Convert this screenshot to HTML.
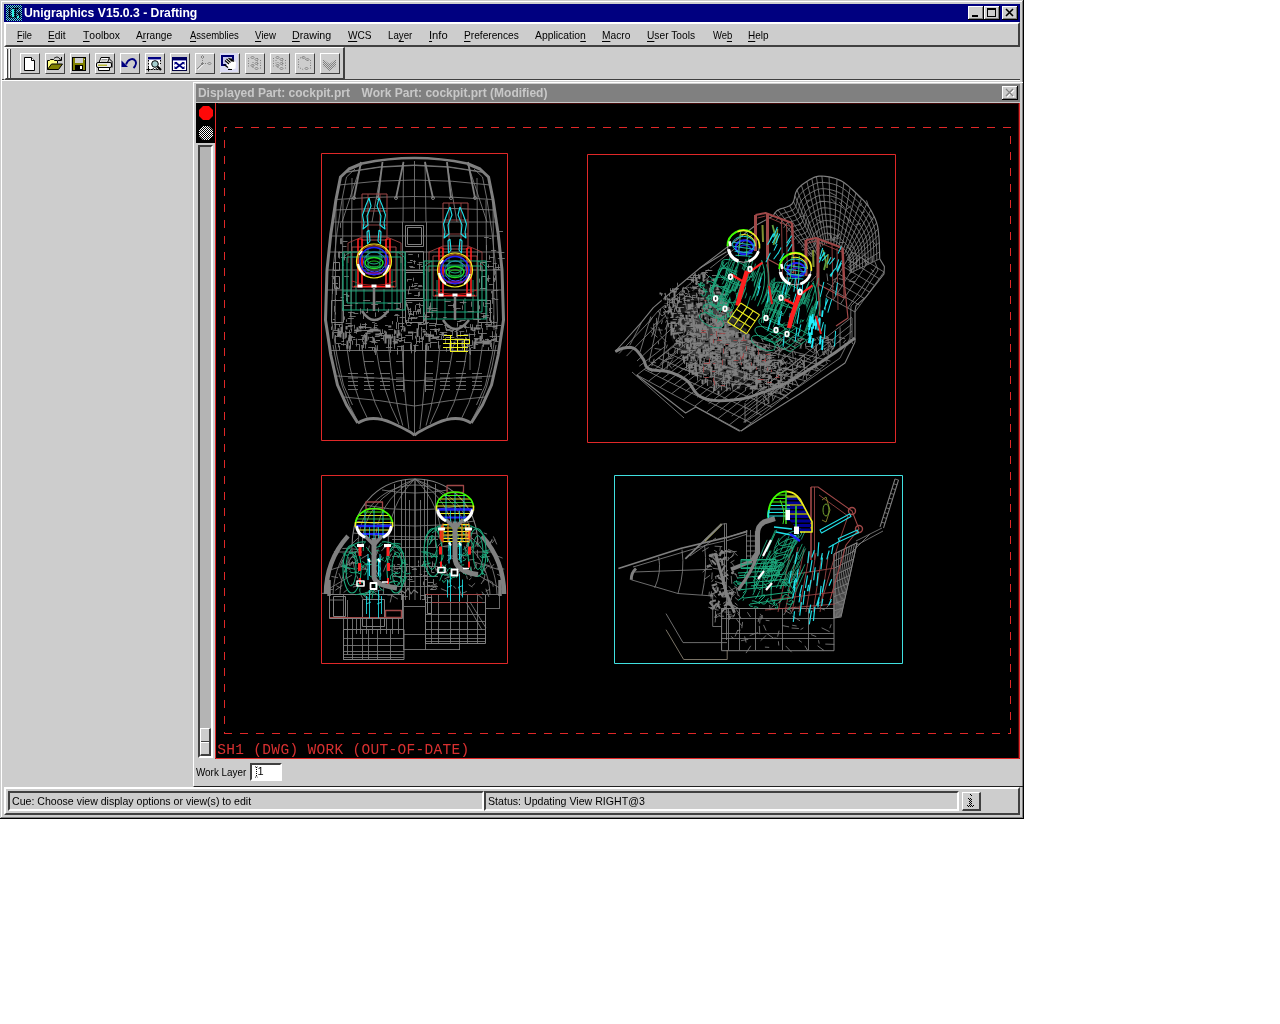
<!DOCTYPE html>
<html><head><meta charset="utf-8"><title>Unigraphics</title>
<style>
*{box-sizing:border-box;margin:0;padding:0}
html,body{width:1280px;height:1024px;background:#fff;overflow:hidden}
body{font-family:"Liberation Sans",sans-serif;font-size:11px;color:#000;position:relative}
.abs{position:absolute}
#win{will-change:transform;position:absolute;left:0;top:0;width:1024px;height:819px;background:#cdcdcd;
 box-shadow:inset -1px -1px 0 #000,inset 1px 1px 0 #cdcdcd,inset -2px -2px 0 #808080,inset 2px 2px 0 #fff}
#title{position:absolute;left:4px;top:4px;width:1016px;height:18px;background:#000080}
#title .txt{position:absolute;left:19.7px;top:2px;transform-origin:0 0;transform:scaleX(1.015);color:#fff;font-weight:bold;font-size:12px;line-height:14px;white-space:nowrap}
.tb{position:absolute;top:2px;width:16px;height:14px;background:#cdcdcd;
 box-shadow:inset -1px -1px 0 #000,inset 1px 1px 0 #fff,inset -2px -2px 0 #808080}
#menubar{position:absolute;left:4px;top:22px;width:1016px;height:25px;background:#cdcdcd;
 border-style:solid;border-width:2px;border-color:#fff #404040 #404040 #fff}
.mi{position:absolute;transform-origin:0 0;top:28px;height:14px;line-height:14px;font-size:11px;white-space:nowrap}
.mi u{text-decoration:none;display:inline-block;height:14px;background:linear-gradient(#000,#000) 0 13px/100% 1px no-repeat}
#toolbar{position:absolute;left:4px;top:47px;width:341px;height:33px;background:#cdcdcd;
 border-style:solid;border-width:1px 2px 2px 2px;border-color:#fff #404040 #404040 #fff}
.grip{position:absolute;top:49px;width:2px;height:29px;border-left:1px solid #fff;border-right:1px solid #404040}
.btn{position:absolute;top:53px;width:20px;height:21px;background:#cdcdcd;
 border-style:solid;border-width:1px;border-color:#fff #404040 #404040 #fff}
.btn svg{position:absolute;left:0;top:0}
#sep{position:absolute;left:2px;top:79px;width:1018px;height:2px;border-top:1px solid #404040;border-bottom:1px solid #fff}
#sub{position:absolute;left:193px;top:82px;width:830px;height:705px;border-left:1px solid #fff;border-top:1px solid #fff;border-bottom:1px solid #202020}
#subtitle{position:absolute;left:196px;top:84px;width:824px;height:18px;background:#808080}
#subtitle .txt{position:absolute;left:3px;top:2px;color:#c8c8c8;font-weight:bold;font-size:12px;line-height:14px;white-space:pre}
#subline{position:absolute;left:196px;top:102px;width:824px;height:1px;background:#c8c8c8}
#gfx{position:absolute;left:196px;top:103px;width:824px;height:656px;background:#000}
#sh1{position:absolute;left:21.300px;top:639px;font-family:"Liberation Mono",monospace;font-size:14.500px;letter-spacing:.31px;color:#d83030;line-height:16px;white-space:pre}
#tl{position:absolute;left:196px;top:103px;width:19px;height:40px;background:#000}
#trough{position:absolute;left:198px;top:145px;width:15px;height:613px;background:#b4b4b4;
 border-style:solid;border-width:2px;border-color:#404040 #fff #fff #404040}
#thumb{position:absolute;left:200px;top:728px;width:11px;height:28px;background:#cdcdcd;
 border-style:solid;border-width:1px 2px 2px 1px;border-color:#fff #404040 #404040 #fff}
#wl{position:absolute;left:196.3px;top:765px;transform-origin:0 0;transform:scaleX(.896);font-size:11px;line-height:14px;white-space:nowrap}
#wlin{position:absolute;left:250px;top:763px;width:32px;height:18px;background:#fff;
 border-style:solid;border-width:2px;border-color:#404040 #fff #fff #404040}
#status{position:absolute;left:4px;top:787px;width:1016px;height:28px;background:#cdcdcd;
 border-style:solid;border-width:2px;border-color:#fff #404040 #404040 #fff}
.fld{position:absolute;top:791px;height:20px;background:#cdcdcd;border-style:solid;border-width:2px;border-color:#404040 #fff #fff #404040;
 font-size:11px;line-height:14px;padding:1px 0 0 1.700px;white-space:nowrap;overflow:hidden}
.ft{display:inline-block;transform-origin:0 0;white-space:nowrap}
#ibtn{position:absolute;left:962px;top:792px;width:19px;height:19px;background:#cdcdcd;border-style:solid;border-width:1px 2px 2px 1px;border-color:#fff #404040 #404040 #fff}
</style></head><body>
<div id="win">
 <div id="title">
  <svg class="abs" style="left:2px;top:1px" width="16" height="16" viewBox="0 0 16 16"><defs><pattern id="dt" width="2" height="2" patternUnits="userSpaceOnUse"><rect width="2" height="2" fill="#000828"/><rect width="1" height="1" fill="#58ccf0"/><rect x="1" y="1" width="1" height="1" fill="#58ccf0"/></pattern></defs><rect width="16" height="16" fill="url(#dt)"/><path d="M3.500 3v9h4V3M9.500 3.500h3.500M9.500 3v9h4V8h-2" fill="none" stroke="#000818" stroke-width="1.500"/><rect x="6" y="4" width="2" height="8" fill="#30f0e0"/><rect x="11" y="11" width="2" height="2" fill="#30f0e0"/></svg>
  <span class="txt">Unigraphics V15.0.3 - Drafting</span>
  <div class="tb" style="left:964px"><svg width="16" height="14"><rect x="4" y="9" width="6" height="2" fill="#000"/></svg></div>
  <div class="tb" style="left:980px"><svg width="16" height="14"><rect x="3.5" y="3.5" width="8" height="7" fill="none" stroke="#000"/><rect x="3" y="2" width="9" height="2" fill="#000"/></svg></div>
  <div class="tb" style="left:998px"><svg width="16" height="14"><path d="M4 3l7 7M11 3l-7 7" stroke="#000" stroke-width="1.6" fill="none"/></svg></div>
 </div>
 <div id="menubar"></div>
 <span class="mi" style="left:16.7px;transform:scaleX(0.844)"><u>F</u>ile</span>
 <span class="mi" style="left:48.1px;transform:scaleX(0.931)"><u>E</u>dit</span>
 <span class="mi" style="left:83.3px;transform:scaleX(0.945)"><u>T</u>oolbox</span>
 <span class="mi" style="left:136.4px;transform:scaleX(0.921)">A<u>r</u>range</span>
 <span class="mi" style="left:189.5px;transform:scaleX(0.866)"><u>A</u>ssemblies</span>
 <span class="mi" style="left:254.7px;transform:scaleX(0.879)"><u>V</u>iew</span>
 <span class="mi" style="left:292.4px;transform:scaleX(0.971)"><u>D</u>rawing</span>
 <span class="mi" style="left:348.0px;transform:scaleX(0.92)"><u>W</u>CS</span>
 <span class="mi" style="left:387.9px;transform:scaleX(0.883)">La<u>y</u>er</span>
 <span class="mi" style="left:428.7px;transform:scaleX(1.018)"><u>I</u>nfo</span>
 <span class="mi" style="left:463.5px;transform:scaleX(0.924)"><u>P</u>references</span>
 <span class="mi" style="left:535.0px;transform:scaleX(0.943)">Applicatio<u>n</u></span>
 <span class="mi" style="left:601.9px;transform:scaleX(0.928)"><u>M</u>acro</span>
 <span class="mi" style="left:646.6px;transform:scaleX(0.927)"><u>U</u>ser Tools</span>
 <span class="mi" style="left:712.5px;transform:scaleX(0.864)">We<u>b</u></span>
 <span class="mi" style="left:747.8px;transform:scaleX(0.907)"><u>H</u>elp</span>

 <div id="sep"></div>
 <div id="toolbar"></div>
 <div class="grip" style="left:6px"></div><div class="grip" style="left:9px"></div>
 <!--BUTTONS-->
 <div class="btn" style="left:20px"><svg width="20" height="21" viewBox="0 0 20 21" style="left:-1px;top:-1px"><path d="M4.5 4.5h7l3 3v10h-10z" fill="#fff" stroke="#000"/><path d="M11.5 4.5v3h3" fill="#fff" stroke="#000"/></svg></div>
 <div class="btn" style="left:45px"><svg width="20" height="21" viewBox="0 0 20 21" style="left:-1px;top:-1px"><path d="M2.5 16.5v-9h2l1-1h3l1 1h3v3" fill="#ffff80" stroke="#000"/><path d="M2.5 16.5l4-5.5h11l-4 5.5z" fill="#808000" stroke="#000"/><path d="M9 5.5c2-2 5-2 6.5 1.5" fill="none" stroke="#000"/><path d="M13 7.5h3.5v-3.5" fill="none" stroke="#000"/></svg></div>
 <div class="btn" style="left:70px"><svg width="20" height="21" viewBox="0 0 20 21" style="left:-1px;top:-1px"><rect x="2.5" y="4.5" width="13" height="13" fill="#808000" stroke="#000"/><rect x="5" y="5" width="8" height="5" fill="#cdcdcd"/><rect x="5" y="12" width="8" height="5" fill="#000"/><rect x="10" y="13" width="2" height="3" fill="#fff"/><rect x="14" y="6" width="1" height="1" fill="#cdcdcd"/></svg></div>
 <div class="btn" style="left:95px"><svg width="20" height="21" viewBox="0 0 20 21" style="left:-1px;top:-1px"><path d="M6 4.5h8.5l-2 5h-8.5z" fill="#fff" stroke="#000"/><path d="M6.5 6.5h6M5.8 8h6" stroke="#808080" fill="none" stroke-width=".8"/><rect x="1.5" y="9.5" width="15" height="5" rx="1.5" fill="#e8e8e8" stroke="#000"/><rect x="3" y="11.5" width="9" height="1.5" fill="#b8b838"/><path d="M3.5 14.5h11v3h-11z" fill="#fff" stroke="#000"/><path d="M14 5.5l3 3v6" fill="none" stroke="#000"/></svg></div>
 <div class="btn" style="left:120px"><svg width="20" height="21" viewBox="0 0 20 21" style="left:-1px;top:-1px"><path d="M6 11.5C8 6 13 4.500 15.5 8C17 11 15 13.500 13.500 15" fill="none" stroke="#000080" stroke-width="1.900"/><path d="M1.500 7.500v6.500h6.500z" fill="#000080"/></svg></div>
 <div class="btn" style="left:145px"><svg width="20" height="21" viewBox="0 0 20 21" style="left:-1px;top:-1px"><rect x="3" y="4" width="13" height="2" fill="#000080"/><rect x="3" y="6" width="13" height="1" fill="#9090d8"/><rect x="4" y="7" width="11" height="9" fill="#fff"/><path d="M3.500 7v9.500h12" fill="none" stroke="#000" stroke-dasharray="1.500 1.500"/><path d="M15.500 7v4" fill="none" stroke="#000" stroke-dasharray="1.500 1.500"/><circle cx="10" cy="11" r="3.300" fill="#a8d0d0" stroke="#000"/><path d="M12.500 13.500l3.500 3.500" stroke="#000" stroke-width="2.200"/><path d="M1.500 16.500h4M3.500 14.500v4" stroke="#000" fill="none"/><path d="M8.500 15l-1 2M11 15l1 2" stroke="#000" fill="none"/></svg></div>
 <div class="btn" style="left:170px"><svg width="20" height="21" viewBox="0 0 20 21" style="left:-1px;top:-1px"><rect x="2.500" y="4.500" width="14" height="13" fill="#fff" stroke="#000040"/><rect x="2" y="4" width="15" height="3" fill="#000060"/><rect x="3" y="7" width="13" height="1" fill="#9090d8"/><path d="M5.500 9.500l8 6M13.500 9.500l-8 6" stroke="#000080" stroke-width="1.600" fill="none"/><path d="M4.500 9v3l3-3zM14.500 9v3l-3-3zM4.500 16v-3l3 3zM14.500 16v-3l-3 3z" fill="#000080"/></svg></div>
 <div class="btn" style="left:195px"><svg width="20" height="21" viewBox="0 0 20 21" style="left:-1px;top:-1px"><g transform="translate(-2 1)"><g fill="none" stroke="#808080"><path d="M9.500 9.500L4 15" /><path d="M9.500 9.500V5" stroke-dasharray="1 1.500"/><path d="M9.500 9.500H15" stroke-dasharray="1 1.500"/><path d="M9.500 1.500l1.500 1.500l-1.500 1.500l-1.500-1.500z M16.500 8l1.500 1.500l-1.500 1.500l-1.500-1.500z M8 9.500h3M9.500 8v3"/></g><g fill="none" stroke="#fff" opacity=".7"><path d="M10.500 10.500L5 16"/></g></g></svg></div>
 <div class="btn" style="left:220px"><svg width="20" height="21" viewBox="0 0 20 21" style="left:-1px;top:-1px"><rect x="0" y="0" width="18" height="19" fill="#dcdcf4"/><rect x="2" y="3" width="11" height="9" fill="#c8c8ec" stroke="#000070" stroke-width="2"/><path d="M6 7l3-2.500l7 4.500l-.5 6.500l-4 1l-5-3.500z" fill="#fff"/><path d="M5 7.500l4 3.500M6.500 6l4 3.500M8.500 5l4 3.500M10.500 5.500l3.500 3M4 11.500l4 3M8 16.500h4" stroke="#000" fill="none" stroke-width="1.200"/></svg></div>
 <div class="btn" style="left:245px"><svg width="20" height="21" viewBox="0 0 20 21" style="left:-1px;top:-1px"><g fill="none" stroke="#808080" stroke-dasharray="1 1.500"><path d="M3.500 5v9"/><path d="M15.500 7v9"/><path d="M8 9v7"/><path d="M12.500 5v8"/></g><g fill="none" stroke="#808080"><path d="M7.5 3.0l1.500 1.500l-1.500 1.500l-1.500-1.500z"/><path d="M11.5 5.0l1.500 1.500l-1.500 1.500l-1.500-1.500z"/><path d="M11.5 9.0l1.500 1.500l-1.500 1.500l-1.500-1.500z"/><path d="M7.5 11.0l1.500 1.500l-1.500 1.500l-1.500-1.500z"/><path d="M11.5 14.0l1.500 1.500l-1.500 1.500l-1.500-1.500z"/></g></svg></div>
 <div class="btn" style="left:270px"><svg width="20" height="21" viewBox="0 0 20 21" style="left:-1px;top:-1px"><g fill="none" stroke="#808080" stroke-dasharray="1 1.500"><path d="M3.500 5v9"/><path d="M15.500 7v9"/><path d="M8 9v7"/><path d="M12.500 5v8"/><path d="M6 7v5"/></g><g fill="none" stroke="#808080"><path d="M7.5 3.0l1.500 1.500l-1.500 1.500l-1.500-1.500z"/><path d="M11.5 5.0l1.500 1.500l-1.500 1.500l-1.500-1.500z"/><path d="M11.5 9.0l1.500 1.500l-1.500 1.500l-1.500-1.500z"/><path d="M7.5 11.0l1.500 1.500l-1.500 1.500l-1.500-1.500z"/><path d="M11.5 14.0l1.500 1.500l-1.500 1.500l-1.500-1.500z"/></g></svg></div>
 <div class="btn" style="left:295px"><svg width="20" height="21" viewBox="0 0 20 21" style="left:-1px;top:-1px"><g fill="none" stroke="#808080" stroke-dasharray="1 1.500"><path d="M3.500 6v9"/><path d="M15.500 7v9"/><path d="M5 5l4-1"/><path d="M10 6l4 2"/><path d="M5 15l4 2"/></g><g fill="none" stroke="#808080"><path d="M8.5 3.0l1.500 1.500l-1.500 1.500l-1.500-1.500z"/><path d="M12.5 5.0l1.500 1.500l-1.500 1.500l-1.500-1.500z"/><path d="M11.5 14.0l1.500 1.500l-1.500 1.500l-1.500-1.500z"/></g></svg></div>
 <div class="btn" style="left:320px"><svg width="20" height="21" viewBox="0 0 20 21" style="left:-1px;top:-1px"><defs><pattern id="ck" width="2" height="2" patternUnits="userSpaceOnUse"><rect width="1" height="1" fill="#808080"/><rect x="1" y="1" width="1" height="1" fill="#808080"/></pattern></defs><path d="M3 6l6.500 5l6.500-5v7l-6.500 5l-6.500-5z" fill="url(#ck)"/></svg></div>
 <!--/BUTTONS-->

 <div id="sub"></div>
 <div id="subtitle"><span class="txt" style="left:1.9px">Displayed Part: cockpit.prt</span><span class="txt" style="left:165.6px">Work Part: cockpit.prt (Modified)</span>
  <div class="tb" style="left:806px"><svg width="16" height="14"><path d="M5 4l7 7M12 4l-7 7" stroke="#fff" stroke-width="1.4" fill="none"/><path d="M4 3l7 7M11 3l-7 7" stroke="#808080" stroke-width="1.4" fill="none"/></svg></div>
 </div>
 <div id="subline"></div>
 <div id="gfx">
 <!--GFX-->
<svg class="abs" style="left:0;top:0" width="824" height="656" viewBox="196 103 824 656" stroke-linecap="butt" stroke-linejoin="round"><path d="M215.5 103V758.5H1019.5V103" fill="none" stroke="#e02828" stroke-width="1.0" />
<path d="M215 759.5H1020" fill="none" stroke="#b02020" stroke-width="1.0" />
<path d="M1018.5 103V758" fill="none" stroke="#500808" stroke-width="1.0" />
<path d="M218 103.5H1018" fill="none" stroke="#400808" stroke-width="1.0" />
<path d="M224 127.5H1011" fill="none" stroke="#e02828" stroke-width="1.0" stroke-dasharray="8 8" stroke-dashoffset="5"/>
<path d="M224.5 127V733" fill="none" stroke="#e02828" stroke-width="1.0" stroke-dasharray="8 8" stroke-dashoffset="3"/>
<path d="M224 733.5H1011" fill="none" stroke="#e02828" stroke-width="1.0" stroke-dasharray="8 8"/>
<path d="M1010.5 127V734" fill="none" stroke="#e02828" stroke-width="1.0" stroke-dasharray="8 8" stroke-dashoffset="7"/>
<rect x="321.5" y="153.5" width="186" height="287" fill="none" stroke="#e02828" stroke-width="1" />
<rect x="587.5" y="154.5" width="308" height="288" fill="none" stroke="#e02828" stroke-width="1" />
<rect x="321.5" y="475.5" width="186" height="188" fill="none" stroke="#e02828" stroke-width="1" />
<rect x="614.5" y="475.5" width="288" height="188" fill="none" stroke="#40e0e0" stroke-width="1" />
<path d="M362 163.500Q414.500 152.500 467 163.500" fill="none" stroke="#808080" stroke-width="2.6" />
<path d="M362 163.5 L349 169 L340.5 177 L336 199.5 L330.8 234 L327 270 L325.5 320 L330.8 355 L337.5 385 L346.5 405 L357.8 423" fill="none" stroke="#808080" stroke-width="3" />
<path d="M467 163.5 L480 169 L488.5 177 L493 199.5 L498.2 234 L502 270 L503.5 320 L498.2 355 L491.5 385 L482.5 405 L471.2 423" fill="none" stroke="#808080" stroke-width="3" />
<path d="M357.8 423Q372 414 392 423T414.500 435.500" fill="none" stroke="#808080" stroke-width="3" />
<path d="M471.2 423Q457 414 437 423T414.500 435.500" fill="none" stroke="#808080" stroke-width="3" />
<path d="M355 169 L346.5 177 L342 199.5 L336.8 234 L333 270 L331.5 320 L336.8 355 L343.5 385 L352.5 405" fill="none" stroke="#808080" stroke-width="0.85" />
<path d="M474 169 L482.5 177 L487 199.5 L492.2 234 L496 270 L497.5 320 L492.2 355 L485.5 385 L476.5 405" fill="none" stroke="#808080" stroke-width="0.85" />
<path d="M346 172Q414.500 158 483 172" fill="none" stroke="#808080" stroke-width="0.85" />
<path d="M345.3 172.5Q414.500 158.5 483.7 172.5" fill="none" stroke="#808080" stroke-width="0.85" />
<path d="M338.9 185Q414.500 175 490.1 185" fill="none" stroke="#808080" stroke-width="0.85" />
<path d="M336 199.5Q414.500 193.5 493 199.5" fill="none" stroke="#808080" stroke-width="0.85" />
<path d="M334.4 210Q414.500 206 494.6 210" fill="none" stroke="#808080" stroke-width="0.85" />
<path d="M332.6 222Q414.500 222 496.4 222" fill="none" stroke="#808080" stroke-width="0.85" />
<path d="M330.5 236Q414.500 236 498.5 236" fill="none" stroke="#808080" stroke-width="0.85" />
<path d="M328.9 252Q414.500 252 500.1 252" fill="none" stroke="#808080" stroke-width="0.85" />
<path d="M327 270Q414.500 270 502 270" fill="none" stroke="#808080" stroke-width="0.85" />
<path d="M326.4 290Q414.500 290 502.6 290" fill="none" stroke="#808080" stroke-width="0.85" />
<path d="M361 164.7 L342 222" fill="none" stroke="#808080" stroke-width="0.85" />
<path d="M382.5 163.2 L372 222" fill="none" stroke="#808080" stroke-width="0.85" />
<path d="M403.5 161.8 L403 222" fill="none" stroke="#808080" stroke-width="0.85" />
<path d="M414.5 161 L414.5 222" fill="none" stroke="#808080" stroke-width="0.85" />
<path d="M425 161.7 L426 222" fill="none" stroke="#808080" stroke-width="0.85" />
<path d="M447 163.3 L457 222" fill="none" stroke="#808080" stroke-width="0.85" />
<path d="M468 164.7 L487 222" fill="none" stroke="#808080" stroke-width="0.85" />
<path d="M336 200 L335 330" fill="none" stroke="#808080" stroke-width="0.85" />
<path d="M343 200 L342 330" fill="none" stroke="#808080" stroke-width="0.85" />
<path d="M352 178 L351 330" fill="none" stroke="#808080" stroke-width="0.85" />
<path d="M477 178 L478 330" fill="none" stroke="#808080" stroke-width="0.85" />
<path d="M486 200 L487 330" fill="none" stroke="#808080" stroke-width="0.85" />
<path d="M493 200 L494 330" fill="none" stroke="#808080" stroke-width="0.85" />
<path d="M361 162 L354 198" fill="none" stroke="#808080" stroke-width="1.8" />
<ellipse cx="354" cy="198" rx="1.5" ry="1.5" fill="none" stroke="#808080" stroke-width="1" />
<path d="M382.5 162 L378 198" fill="none" stroke="#808080" stroke-width="1.8" />
<ellipse cx="378" cy="198" rx="1.5" ry="1.5" fill="none" stroke="#808080" stroke-width="1" />
<path d="M403.5 162 L396 198" fill="none" stroke="#808080" stroke-width="1.8" />
<ellipse cx="396" cy="198" rx="1.5" ry="1.5" fill="none" stroke="#808080" stroke-width="1" />
<path d="M425 162 L433 198" fill="none" stroke="#808080" stroke-width="1.8" />
<ellipse cx="433" cy="198" rx="1.5" ry="1.5" fill="none" stroke="#808080" stroke-width="1" />
<path d="M447 162 L451 198" fill="none" stroke="#808080" stroke-width="1.8" />
<ellipse cx="451" cy="198" rx="1.5" ry="1.5" fill="none" stroke="#808080" stroke-width="1" />
<path d="M468 162 L475 198" fill="none" stroke="#808080" stroke-width="1.8" />
<ellipse cx="475" cy="198" rx="1.5" ry="1.5" fill="none" stroke="#808080" stroke-width="1" />
<rect x="405.5" y="225.5" width="18" height="21" fill="none" stroke="#808080" stroke-width="1" />
<rect x="407.5" y="227.5" width="14" height="17" fill="none" stroke="#808080" stroke-width="1" />
<rect x="405.5" y="251.5" width="18" height="19" fill="none" stroke="#808080" stroke-width="1" />
<path d="M408.9 266.5L413.2 266.5M414.5 260.3L414.5 264.2M408.3 254.5L412.8 254.5M418.5 254L418.5 257.4M410.2 267.5L414.9 267.5M407.4 262.5L412.2 262.5M410 260.5L412.1 260.5M413.1 261.5L415.8 261.5M410.1 260.5L412.9 260.5M418.7 262.5L422.7 262.5M420.9 266.5L423.3 266.5M417.1 264.5L421.9 264.5M419.5 263.4L419.5 266.3M419.5 265.8L419.5 269.4" fill="none" stroke="#808080" stroke-width="0.85" />
<rect x="405.5" y="272.5" width="18" height="26" fill="none" stroke="#808080" stroke-width="1" />
<path d="M407.5 279.5L411.9 279.5M409.5 286.1L409.5 290.2M412.5 283.7L412.5 287.2M414.3 283.5L417.8 283.5M408.5 289.5L408.5 294.4M413.5 277.7L413.5 281.3M417.8 286.5L422.4 286.5M414.2 295.5L417.9 295.5M410.8 286.5L415.6 286.5M418.5 292.1L418.5 296.7M418.3 285.5L422 285.5M407.8 293.5L411.5 293.5M414.1 285.5L417.1 285.5M414.5 288.5L418.4 288.5M407.5 279.1L407.5 281.6M419.5 291.6L419.5 296" fill="none" stroke="#808080" stroke-width="0.85" />
<rect x="405.5" y="300.5" width="18" height="22" fill="none" stroke="#808080" stroke-width="1" />
<path d="M410.6 317.5L415.3 317.5M407.2 302.5L412.3 302.5M408.5 313.5L411.9 313.5M409.2 311.5L411.9 311.5M417 310.5L420.3 310.5M407.3 309.5L411 309.5M408.5 318.5L412.6 318.5M415.5 317.5L417.6 317.5M409.5 314.9L409.5 317.6M416.5 311.8L416.5 314.7M418.5 311.3L418.5 314.2M413.5 312.4L413.5 315.7M408.5 307.4L408.5 313.2M411.5 317.5L411.5 320.7M417.4 309.5L420.4 309.5M419.5 302.7L419.5 308M415.5 305.1L415.5 310.6M416.9 311.5L420.4 311.5M409.9 314.5L413.6 314.5M408.5 314.5L411.6 314.5M411.6 318.5L417.2 318.5M410.5 307.9L410.5 313.8" fill="none" stroke="#808080" stroke-width="0.85" />
<path d="M402.5 222L402.5 330M426.5 222L426.5 330" fill="none" stroke="#808080" stroke-width="0.85" />
<rect x="333.5" y="262.5" width="6" height="8" fill="none" stroke="#808080" stroke-width="1" />
<rect x="334.5" y="276.5" width="5" height="12" fill="none" stroke="#808080" stroke-width="1" />
<rect x="331.5" y="300.5" width="12" height="22" fill="none" stroke="#808080" stroke-width="1" />
<path d="M336.5 285.7L336.5 290.3M346.5 292.2L346.5 297.7M339.5 324.3L339.5 327.2M332.4 283.5L338 283.5M343.1 305.5L348.5 305.5M336.5 289.6L336.5 295M346.5 319.4L346.5 321.9M333.5 277L333.5 279.2M344.5 316.4L344.5 319.8M343.5 294.5L347.8 294.5M332.5 288.3L332.5 293.9M346.5 297.9L346.5 301M344.2 276.5L348.9 276.5M332.8 319.5L335 319.5M346.8 296.5L349.3 296.5M335.5 312.2L335.5 314.6M337.1 324.5L342.7 324.5M335.5 298.9L335.5 301.3M331.6 276.5L337.6 276.5M340.5 297.5L343.8 297.5M345.6 323.5L351.5 323.5M334.5 305.9L334.5 311.8M342.5 308.1L342.5 311.1M335.9 287.5L338.2 287.5M347.5 297.4L347.5 302M346.1 295.5L349.3 295.5" fill="none" stroke="#808080" stroke-width="0.85" />
<rect x="480.5" y="262.5" width="6" height="8" fill="none" stroke="#808080" stroke-width="1" />
<rect x="481.5" y="276.5" width="5" height="12" fill="none" stroke="#808080" stroke-width="1" />
<rect x="478.5" y="300.5" width="12" height="22" fill="none" stroke="#808080" stroke-width="1" />
<path d="M483.1 317.5L488.6 317.5M483.5 302.2L483.5 306.5M481.9 276.5L484.9 276.5M487.5 278.5L487.5 280.8M483.5 314.6L483.5 318.6M480.5 300.5L485.6 300.5M493.5 283.7L493.5 288.8M491.5 291L491.5 293.4M492.7 290.5L498.3 290.5M493.5 276.6L493.5 279.9M491.5 320.4L491.5 325.7M489 284.5L492.8 284.5M489.4 308.5L492.4 308.5M493.5 315.4L493.5 319.6M491.6 298.5L495.2 298.5M482.1 276.5L486.7 276.5M487.1 278.5L490.5 278.5M480 288.5L485.3 288.5M484.4 306.5L487.4 306.5M486.5 300.5L491.1 300.5M489 312.5L491.9 312.5M486.5 286.3L486.5 289.9M493.5 320.9L493.5 324M479.5 278.6L479.5 282.6M480.6 313.5L486.1 313.5M489.5 317.4L489.5 320.9" fill="none" stroke="#808080" stroke-width="0.85" />
<path d="M494.5 268.4L494.5 275.5M497.4 267.5L500.5 267.5M487 266.5L493.6 266.5M494.5 277.9L494.5 282M486.5 278.9L486.5 281.2M495.5 271L495.5 274.6M497.5 232.9L497.5 239.5M493.5 276.6L493.5 281.3M497.6 252.5L504.4 252.5M486.5 247.4L486.5 250.1M497.4 231.5L503 231.5M486.5 245L486.5 248.5M484.1 237.5L488.7 237.5M492.8 269.5L499.8 269.5M488.5 264.3L488.5 267.9M488.5 275.3L488.5 282.1M498.5 264.5L498.5 269.5M494.8 267.5L499.1 267.5M486.5 285L486.5 287.7M492.5 297.3L492.5 303.8M485.9 261.5L491.3 261.5M491 250.5L496.2 250.5M490.2 257.5L494 257.5M495.5 275.3L495.5 280.3M489.3 238.5L491.3 238.5M492.5 290.8L492.5 297.7M497.8 258.5L504.8 258.5M494.4 299.5L498.3 299.5M492.7 263.5L496.8 263.5M489.5 255.2L489.5 259.6" fill="none" stroke="#808080" stroke-width="0.85" />
<path d="M339.5 251.4L339.5 258.7M338.5 251.8L338.5 257.7M340.5 238.3L340.5 244.1M344.5 253.3L344.5 260.4M342.4 246.5L346.5 246.5M340.9 257.5L346.2 257.5M342.7 241.5L347.5 241.5M338.1 252.5L342.7 252.5M340.5 222.8L340.5 227.8M341.5 238.1L341.5 244.2" fill="none" stroke="#808080" stroke-width="0.85" />
<rect x="362" y="194" width="25" height="46" fill="none" stroke="#a04848" stroke-width="1" />
<path d="M368 194L368 240M380 194L380 240M362 211L387 211M362 225L387 225" fill="none" stroke="#a04848" stroke-width="0.85" />
<path d="M348 243 L362 237 L387 237 L401 243 L401 263" fill="none" stroke="#a04848" stroke-width="0.85" />
<path d="M348 243 L348 263" fill="none" stroke="#a04848" stroke-width="0.85" />
<rect x="352" y="247" width="44" height="40" fill="none" stroke="#a04848" stroke-width="1" />
<path d="M369 198 L371 206 L367 216 L368 225 L363 229 L364 223 L362.5 215 L366 205 L369 198" fill="none" stroke="#20e0e8" stroke-width="1.1" />
<path d="M369 230 L370 241 L367.5 244 L367 232 L369 230" fill="none" stroke="#20e0e8" stroke-width="1.1" />
<path d="M379 198 L377 206 L381 216 L380 225 L385 229 L384 223 L385.5 215 L382 205 L379 198" fill="none" stroke="#20e0e8" stroke-width="1.1" />
<path d="M379 230 L378 241 L380.5 244 L381 232 L379 230" fill="none" stroke="#20e0e8" stroke-width="1.1" />
<path d="M358 239L358 286M362 239L362 286" fill="none" stroke="#ff2020" stroke-width="1.6" />
<path d="M358 239L362 239M358 253L362 253M358 269L362 269" fill="none" stroke="#ff2020" stroke-width="1.02" />
<path d="M386 239L386 286M390 239L390 286" fill="none" stroke="#ff2020" stroke-width="1.6" />
<path d="M386 239L390 239M386 253L390 253M386 269L390 269" fill="none" stroke="#ff2020" stroke-width="1.02" />
<path d="M354 286.5H394" fill="none" stroke="#ff2020" stroke-width="1.6" />
<path d="M352 281q22 9 44 0" fill="none" stroke="#c02020" stroke-width="0.85" />
<rect x="357.5" y="284.5" width="5" height="3" fill="#fff" stroke="none" stroke-width="1" />
<rect x="371.5" y="284.5" width="5" height="3" fill="#fff" stroke="none" stroke-width="1" />
<rect x="385.5" y="284.5" width="5" height="3" fill="#fff" stroke="none" stroke-width="1" />
<rect x="343" y="252" width="62" height="58" fill="none" stroke="#1ca87c" stroke-width="1.2" />
<rect x="347" y="257" width="54" height="46" fill="none" stroke="#1ca87c" stroke-width="1" />
<path d="M351 252L351 310M397 252L397 310M356 271L356 310M392 271L392 310M343 291L405 291M364 289L364 310M384 289L384 310" fill="none" stroke="#1ca87c" stroke-width="0.85" />
<path d="M343 266q-3 -10 8 -14 M405 266q3 -10 -8 -14" fill="none" stroke="#1ca87c" stroke-width="0.85" />
<ellipse cx="374" cy="261" rx="17.5" ry="17" fill="none" stroke="#f0f020" stroke-width="1.2" />
<ellipse cx="374" cy="260" rx="16" ry="15" fill="none" stroke="#e07020" stroke-width="0.8" />
<ellipse cx="374" cy="261" rx="14" ry="13.5" fill="none" stroke="#2020ff" stroke-width="1.5" />
<ellipse cx="374.5" cy="262" rx="11" ry="10" fill="none" stroke="#4040ff" stroke-width="1" />
<ellipse cx="374" cy="263" rx="9" ry="5.5" fill="none" stroke="#20e020" stroke-width="1.4" />
<ellipse cx="374" cy="264" rx="6" ry="3" fill="none" stroke="#20c020" stroke-width="1" />
<ellipse cx="374" cy="258" rx="8" ry="6" fill="none" stroke="#1ca87c" stroke-width="1" />
<path d="M358 264q2 8 7 11" fill="none" stroke="#fff" stroke-width="2.2" />
<path d="M389 265q-2 7 -6 10" fill="none" stroke="#fff" stroke-width="1.6" />
<path d="M362 251l-3 4" fill="none" stroke="#fff" stroke-width="1.5" />
<path d="M366 273l16 0" fill="none" stroke="#c020c0" stroke-width="1.02" />
<path d="M368 249L368 273M380 249L380 273M361 256L387 256M361 267L387 267" fill="none" stroke="#1ca87c" stroke-width="0.68" />
<path d="M374 287V311" fill="none" stroke="#808080" stroke-width="2.5" />
<path d="M362 311q12 18 26 0" fill="none" stroke="#808080" stroke-width="2.5" />
<rect x="443" y="203" width="25" height="46" fill="none" stroke="#a04848" stroke-width="1" />
<path d="M449 203L449 249M461 203L461 249M443 220L468 220M443 234L468 234" fill="none" stroke="#a04848" stroke-width="0.85" />
<path d="M429 252 L443 246 L468 246 L482 252 L482 272" fill="none" stroke="#a04848" stroke-width="0.85" />
<path d="M429 252 L429 272" fill="none" stroke="#a04848" stroke-width="0.85" />
<rect x="433" y="256" width="44" height="40" fill="none" stroke="#a04848" stroke-width="1" />
<path d="M450 207 L452 215 L448 225 L449 234 L444 238 L445 232 L443.5 224 L447 214 L450 207" fill="none" stroke="#20e0e8" stroke-width="1.1" />
<path d="M450 239 L451 250 L448.5 253 L448 241 L450 239" fill="none" stroke="#20e0e8" stroke-width="1.1" />
<path d="M460 207 L458 215 L462 225 L461 234 L466 238 L465 232 L466.5 224 L463 214 L460 207" fill="none" stroke="#20e0e8" stroke-width="1.1" />
<path d="M460 239 L459 250 L461.5 253 L462 241 L460 239" fill="none" stroke="#20e0e8" stroke-width="1.1" />
<path d="M439 248L439 295M443 248L443 295" fill="none" stroke="#ff2020" stroke-width="1.6" />
<path d="M439 248L443 248M439 262L443 262M439 278L443 278" fill="none" stroke="#ff2020" stroke-width="1.02" />
<path d="M467 248L467 295M471 248L471 295" fill="none" stroke="#ff2020" stroke-width="1.6" />
<path d="M467 248L471 248M467 262L471 262M467 278L471 278" fill="none" stroke="#ff2020" stroke-width="1.02" />
<path d="M435 295.5H475" fill="none" stroke="#ff2020" stroke-width="1.6" />
<path d="M433 290q22 9 44 0" fill="none" stroke="#c02020" stroke-width="0.85" />
<rect x="438.5" y="293.5" width="5" height="3" fill="#fff" stroke="none" stroke-width="1" />
<rect x="452.5" y="293.5" width="5" height="3" fill="#fff" stroke="none" stroke-width="1" />
<rect x="466.5" y="293.5" width="5" height="3" fill="#fff" stroke="none" stroke-width="1" />
<rect x="424" y="261" width="62" height="58" fill="none" stroke="#1ca87c" stroke-width="1.2" />
<rect x="428" y="266" width="54" height="46" fill="none" stroke="#1ca87c" stroke-width="1" />
<path d="M432 261L432 319M478 261L478 319M437 280L437 319M473 280L473 319M424 300L486 300M445 298L445 319M465 298L465 319" fill="none" stroke="#1ca87c" stroke-width="0.85" />
<path d="M424 275q-3 -10 8 -14 M486 275q3 -10 -8 -14" fill="none" stroke="#1ca87c" stroke-width="0.85" />
<ellipse cx="455" cy="270" rx="17.5" ry="17" fill="none" stroke="#f0f020" stroke-width="1.2" />
<ellipse cx="455" cy="269" rx="16" ry="15" fill="none" stroke="#e07020" stroke-width="0.8" />
<ellipse cx="455" cy="270" rx="14" ry="13.5" fill="none" stroke="#2020ff" stroke-width="1.5" />
<ellipse cx="455.5" cy="271" rx="11" ry="10" fill="none" stroke="#4040ff" stroke-width="1" />
<ellipse cx="455" cy="272" rx="9" ry="5.5" fill="none" stroke="#20e020" stroke-width="1.4" />
<ellipse cx="455" cy="273" rx="6" ry="3" fill="none" stroke="#20c020" stroke-width="1" />
<ellipse cx="455" cy="267" rx="8" ry="6" fill="none" stroke="#1ca87c" stroke-width="1" />
<path d="M439 273q2 8 7 11" fill="none" stroke="#fff" stroke-width="2.2" />
<path d="M470 274q-2 7 -6 10" fill="none" stroke="#fff" stroke-width="1.6" />
<path d="M443 260l-3 4" fill="none" stroke="#fff" stroke-width="1.5" />
<path d="M447 282l16 0" fill="none" stroke="#c020c0" stroke-width="1.02" />
<path d="M449 258L449 282M461 258L461 282M442 265L468 265M442 276L468 276" fill="none" stroke="#1ca87c" stroke-width="0.68" />
<path d="M455 296V320" fill="none" stroke="#808080" stroke-width="2.5" />
<path d="M443 320q12 18 26 0" fill="none" stroke="#808080" stroke-width="2.5" />
<path d="M364.1 327.5L371.5 327.5M341 344.5L346.1 344.5M416.5 341.2L416.5 344.2M451.5 343.2L451.5 346.8M368.5 336.6L368.5 339.6M478.5 330.6L478.5 333.9M450.5 343.9L450.5 346.1M436.5 330.2L436.5 334.8M463.9 327.5L469.6 327.5M496.5 333.5L496.5 341M432.9 329.5L438 329.5M352.5 340.6L352.5 344.8M369.6 341.5L375.9 341.5M346.4 332.5L351.4 332.5M360.5 323.4L360.5 329M365.5 322.9L365.5 329.1M495.5 337.9L495.5 342M348.4 340.5L351 340.5M413.6 332.5L416.7 332.5M469.9 334.5L475.4 334.5M452.5 330.6L452.5 336.1M466 344.5L469.9 344.5M428.5 345.9L428.5 350.3M459.2 326.5L466.7 326.5M353.1 339.5L355.5 339.5M350.5 334L350.5 341.1M334.1 324.5L341.2 324.5M375.3 325.5L377.9 325.5M438.5 341.4L438.5 347.5M443.5 332.1L443.5 337.9M439.5 328.3L439.5 330.7M430.5 331.1L430.5 336.7M418.3 324.5L422.5 324.5M362.5 344.9L362.5 349.4M451.5 341.3L451.5 347.7M372.5 347.4L372.5 350.3M475.8 344.5L478.2 344.5M469.5 334.2L469.5 338.4M334.9 336.5L339.6 336.5M396.4 340.5L403.7 340.5M418.7 324.5L425.5 324.5M333.9 332.5L340.3 332.5M350.5 342.7L350.5 349.5M381.5 333L381.5 336.5M385.5 330.8L385.5 337.5M429.1 325.5L435 325.5M472.5 340.2L472.5 345.4M471.9 330.5L474.8 330.5M418.5 324.5L418.5 328.6M335.5 343.5L341.4 343.5M380.5 331.2L380.5 335.1M415.5 335.7L415.5 338.6M384.5 330.5L384.5 332.9M411.5 345.7L411.5 353.3M469.5 346.1L469.5 353.6M351.5 335.6L351.5 341.1M463.6 340.5L470.1 340.5M491 339.5L495.4 339.5M497.5 336.5L500.5 336.5M446.9 337.5L454.3 337.5M399.1 341.5L401.4 341.5M422.4 329.5L425 329.5M437.4 336.5L439.8 336.5M475.5 338.7L475.5 341.8M332.5 331.6L332.5 338.7M377.5 345.2L377.5 350.8M482.5 333.1L482.5 339.1M491.5 342.8L491.5 349.1M363.5 341.4L363.5 348M412.5 332.5L412.5 339.8M429.1 323.5L436.2 323.5M360.8 330.5L367 330.5M349.5 329.9L349.5 337.2M496.5 336.1L496.5 341.6M419.5 336.1L419.5 343M398.6 338.5L402.5 338.5M416.5 337.2L416.5 342.5M356.5 338.6L356.5 346.5M426.5 331.6L426.5 336M483.5 339.4L483.5 346.8M474.5 332L474.5 336.8M392.5 341.5L397.4 341.5M406.9 325.5L411 325.5M331.5 326.5L331.5 330M430 329.5L438 329.5M416.9 341.5L423 341.5M462.4 335.5L468.7 335.5M496.1 341.5L498.6 341.5M495.2 328.5L497.4 328.5M411.5 346.8L411.5 351.2M472.5 324.3L472.5 330M423.5 335.9L423.5 340M495.7 325.5L501.1 325.5M444.2 325.5L447.8 325.5M411.5 342.6L411.5 349.8M445.5 324.3L445.5 328.6M378.9 335.5L386.3 335.5M476.5 324.8L476.5 329.1M363.5 335.5L363.5 340M413.2 345.5L418.5 345.5M459.4 331.5L464.3 331.5M488.5 347.2L488.5 350.8M404.2 342.5L411.2 342.5M375.5 340.5L380 340.5M362.5 336.6L362.5 342.2M420.2 338.5L423.1 338.5M376.4 340.5L380 340.5M392.5 334.2L392.5 338.3M359.5 344.9L359.5 351M338.5 330.5L338.5 336.6M468.5 345.5L472.4 345.5M385.1 325.5L387.9 325.5M343.5 336L343.5 342.2M446.5 327.9L446.5 331.1M481 333.5L483 333.5M380.8 338.5L383.3 338.5M446.5 347.6L446.5 351.7M417.7 323.5L421.7 323.5M371.4 342.5L377.5 342.5M341.4 341.5L344 341.5M374.6 323.5L376.8 323.5M397.1 346.5L402.9 346.5M445.6 329.5L450.7 329.5M492.5 331.2L492.5 338M473.9 338.5L481.1 338.5M445.5 338.1L445.5 343.3M421.5 332.2L421.5 339.6M423 323.5L428 323.5M365.2 333.5L370.5 333.5M374.9 336.5L379.7 336.5M346.5 331.7L346.5 337.6M422.5 343.9L422.5 350.3M333.3 330.5L339.4 330.5M486 326.5L493.3 326.5M474.5 344.1L474.5 348.1M355.6 344.5L359.9 344.5M348.5 337.6L348.5 341.2M466.5 337.7L466.5 339.7M487.5 338.7L487.5 343M481.5 333.9L481.5 340.6M401.5 346.3L401.5 350.7M337.5 334.2L337.5 336.5M347.2 326.5L352.3 326.5M375.5 347.6L375.5 355M467.5 343.3L467.5 346.8M369.5 337.5L373.6 337.5M462.5 345.8L462.5 349.7M388.5 339.1L388.5 347.1M337.6 333.5L341.9 333.5M469.5 333.5L469.5 339.7M418.5 323.5L418.5 329.5M357.8 339.5L362.7 339.5M451.5 347.4L451.5 349.5M394.5 343.7L394.5 346.7M345.5 330.7L345.5 338.5M463.7 334.5L468.5 334.5M461.8 341.5L464.9 341.5M422.5 336.9L422.5 344.4M353.9 332.5L356.6 332.5M341.5 326.8L341.5 333.4M466.5 329.5L466.5 332.4M470.9 347.5L473 347.5M438.5 341.1L438.5 348.6M396.5 322.1L396.5 329M485 339.5L489 339.5M462.1 346.5L469.8 346.5M429.5 335.3L429.5 339.9M490.5 340.8L490.5 347M441.5 336L441.5 339.4M349.5 338.7L349.5 343.1M439 334.5L446.8 334.5M382.5 329.2L382.5 333.7M383.5 335.9L383.5 340.6M400.2 326.5L404.6 326.5M362.7 343.5L366.9 343.5M426.5 344L426.5 350.6M454.5 331.5L457.3 331.5M388.4 329.5L393.2 329.5M351.5 328.6L351.5 331.7M421.5 327.2L421.5 331.7M427.9 336.5L432.3 336.5M436.2 324.5L442.9 324.5M457.5 331.9L457.5 338M350.3 336.5L352.8 336.5M394.5 329.4L394.5 335.4M390.5 343.8L390.5 347.2M388.5 335.9L388.5 338.5M364.5 334L364.5 337.8M430.5 338.5L437 338.5M338.5 343.5L338.5 347.4M493.5 338.4L493.5 341M438.5 328.4L438.5 331.6M349.5 345.6L349.5 351.8M394.5 346L394.5 348.8M372 322.5L374.8 322.5M460.5 331.8L460.5 336.7M374.5 338.6L374.5 344.6M415.5 344.2L415.5 352M401.5 329.1L401.5 331.7M350.4 337.5L355.1 337.5M365.5 343.4L365.5 348.6M485.1 324.5L491.1 324.5M401.5 333.5L401.5 341.2M360.9 335.5L366 335.5M390.5 344.8L390.5 352.7M339.5 345.6L339.5 350.3M358.6 326.5L366 326.5M335.5 335L335.5 343M397.5 347.8L397.5 354.6M439.8 332.5L447.2 332.5M489.7 336.5L497.2 336.5M401.8 337.5L405.7 337.5M430.5 344.1L430.5 347.8M464.5 342.2L464.5 346.7M465.5 337L465.5 339.6M386.5 331.6L386.5 336.9M429.5 334.6L429.5 340.4M405.2 335.5L412.1 335.5M356.5 330.5L356.5 333.7M354.5 324.8L354.5 328.7M470.5 347.9L470.5 355M335.5 323.7L335.5 329.4M374.5 347.2L374.5 352.5M435.5 323.9L435.5 327M374.5 324.2L374.5 327.9M373.5 327.5L377.1 327.5M456.5 329.8L456.5 337.1M470.5 324L470.5 327.8M476.7 325.5L481.3 325.5M457.5 322.7L457.5 326.6M481.5 323.1L481.5 328.6M479 333.5L486.9 333.5M347.9 325.5L353.4 325.5M374.5 327.1L374.5 329.4M385.9 347.5L392.3 347.5M489.3 322.5L497.2 322.5M372.5 336.4L372.5 338.4M343.5 343.2L343.5 345.5M364.2 330.5L369.2 330.5M395.8 339.5L399 339.5M446.4 330.5L454 330.5M410 323.5L412.1 323.5M436.2 339.5L443.9 339.5M450.4 331.5L452.9 331.5M449.5 342.9L449.5 350.6M425.5 336.5L430.5 336.5M445.7 337.5L452.9 337.5M410.5 343.6L410.5 349.7M425.5 343.5L431.1 343.5M381.7 338.5L383.9 338.5M482.5 328L482.5 332.7M488.1 340.5L493.9 340.5M404.5 338.7L404.5 342.8M456.4 330.5L458.5 330.5M429.9 342.5L437.2 342.5M342.5 325.1L342.5 333.1M350.5 340L350.5 347.7M368.2 347.5L374.4 347.5M460.6 335.5L466 335.5M378.8 333.5L384 333.5" fill="none" stroke="#808080" stroke-width="0.85" />
<path d="M474.5 327.3L474.5 331.5M432.3 337.5L439 337.5M398.5 329.8L398.5 333.7M454.5 341.8L454.5 344.8M384.2 335.5L391.2 335.5M394.5 336L394.5 344.2M385.8 337.5L392.3 337.5M422.7 331.5L425.8 331.5M349.5 334.9L349.5 340.9M454.7 339.5L463.6 339.5M395.5 330.2L395.5 333.8M417.5 328.3L417.5 336.9M346.5 326.1L346.5 329.4M471.5 327.2L471.5 330.2M388.2 326.5L391.3 326.5M367 331.5L373.3 331.5M372.4 330.5L380.7 330.5M423.9 334.5L428.8 334.5M338.5 329.3L338.5 336.2M369.9 329.5L378.4 329.5M462.5 341.8L462.5 345.7M359 327.5L363.7 327.5M429.5 334L429.5 341.7M354.1 330.5L361.5 330.5M487.4 341.5L491.7 341.5M375.3 334.5L379.8 334.5M375.3 330.5L380.4 330.5M475.5 337.9L475.5 344.6M397.5 333.7L397.5 338.1M475.4 342.5L482 342.5M347.5 340.4L347.5 348.7M482.3 343.5L489.9 343.5M408 332.5L413.4 332.5M338.5 328.3L338.5 332.3M474.5 339.5L478.4 339.5M435.5 328.4L435.5 331.9M373.5 337.6L373.5 341.6M385.5 333.7L385.5 340M481.6 341.5L488.7 341.5M365.5 335.6L365.5 344.5M366.5 332.4L366.5 341.2M474.5 341.4L474.5 349.1M442.5 332.2L442.5 335.9M340.5 330.9L340.5 337.6M368.6 330.5L376.7 330.5M399.5 332.5L399.5 335.8M446.6 326.5L450.2 326.5M394 342.5L397.9 342.5M385.5 335.2L385.5 343.6M480.5 335.8L480.5 341.3M427.9 335.5L434 335.5M404.5 327.3L404.5 331.6M356.4 330.5L360.4 330.5M343.5 332.5L343.5 339.1M473.8 328.5L480.6 328.5M390.5 336.4L390.5 344.4M492.6 326.5L497.5 326.5M341.5 326.9L341.5 332.1M357.5 327.2L357.5 332.1M426.5 343.9L426.5 350.6" fill="none" stroke="#808080" stroke-width="2" />
<path d="M425.9 312.5L430 312.5M349.4 316.5L355.7 316.5M367.5 308.2L367.5 311.8M378.5 307.7L378.5 312.1M384.2 316.5L386.4 316.5M479.5 305.4L479.5 309.2M425.5 314.4L425.5 319.4M388.5 308.8L388.5 312.8M425.1 322.5L429 322.5M465.5 324.3L465.5 327.5M377.5 318.5L377.5 320.7M425.5 317.5L425.5 324.1M424.5 312.4L424.5 314.5M424.5 318.6L424.5 321.4M347.7 318.5L353.8 318.5M443.2 317.5L446.7 317.5M453.7 309.5L456.5 309.5M465.5 323.9L465.5 328.7M366 312.5L368.1 312.5M471.5 301.5L471.5 306.8M488.1 325.5L490.8 325.5M489.5 308.2L489.5 311.2M432.6 308.5L437.4 308.5M409.5 313.8L409.5 316.7M483.3 315.5L489.2 315.5M363.2 300.5L370.1 300.5M397.5 316.4L397.5 322M406.5 320.4L406.5 324.6M348.1 318.5L350.6 318.5M407.5 304.5L407.5 308.8M345.5 305.5L352.3 305.5M398.5 323.5L404.3 323.5M430.5 304.5L430.5 310.4M459.8 302.5L466.4 302.5M467.5 311.5L473.9 311.5M348.1 312.5L354.7 312.5M416.1 304.5L420.8 304.5M473.2 319.5L477.6 319.5M361.9 324.5L366.9 324.5M462.5 305.4L462.5 309.7M355.5 303.5L357.8 303.5M396.2 308.5L399.6 308.5M413.1 311.5L418.8 311.5M427.2 308.5L432.9 308.5M413.5 311.1L413.5 315.4M420.5 307.9L420.5 314M423.9 316.5L429.5 316.5M428.8 312.5L433.3 312.5M420.4 305.5L423.6 305.5M429.5 306.1L429.5 312M454 308.5L460.7 308.5M394.2 315.5L399.5 315.5M458 321.5L461.4 321.5M399.6 317.5L405 317.5M398.5 322.5L398.5 329.3M457 321.5L460.1 321.5M431.7 310.5L437.3 310.5M405.1 320.5L407.6 320.5M363.5 313.3L363.5 319M453.5 303.6L453.5 307.8M436.5 317.5L436.5 324.4M371.3 304.5L378.1 304.5M485.2 303.5L490.2 303.5M360.5 308.3L360.5 314.3M387.6 303.5L391.4 303.5M375.5 312.4L375.5 316.9M353.5 313.5L358.3 313.5M394.1 303.5L400.5 303.5M350.5 311.9L350.5 316.5M447.9 305.5L454.4 305.5M444.6 301.5L450.7 301.5M459.6 320.5L465.5 320.5M400.5 302.6L400.5 308.2M418.4 316.5L423.7 316.5M395.7 309.5L401.5 309.5M395.2 314.5L398.2 314.5M375.7 301.5L381 301.5M432.5 314.2L432.5 316.5M463.5 300.2L463.5 304.3M402.5 321.5L402.5 327M475.9 319.5L480.8 319.5M408.5 317.2L408.5 321.8M392.5 321L392.5 324.3M405.5 304.5L407.6 304.5M383.2 312.5L385.4 312.5M459.5 325.5L463.6 325.5M430.5 302.4L430.5 307.1M481.6 316.5L486.4 316.5M477.5 313.1L477.5 317.5M406.5 301.7L406.5 306.6" fill="none" stroke="#808080" stroke-width="0.85" />
<path d="M331.1 350.5Q372.8 350.5 414.500 350.5Q456.2 350.5 497.9 350.5" fill="none" stroke="#808080" stroke-width="0.85" />
<path d="M336.5 376Q375.5 377.5 414.500 381Q453.5 377.5 492.5 376" fill="none" stroke="#808080" stroke-width="0.85" />
<path d="M343.9 397Q379.2 399.7 414.500 406Q449.8 399.7 485.1 397" fill="none" stroke="#808080" stroke-width="0.85" />
<path d="M333 345Q339.4 390 358.5 423" fill="none" stroke="#808080" stroke-width="0.85" />
<path d="M346.5 345Q351.8 390 367.5 418.5" fill="none" stroke="#808080" stroke-width="0.85" />
<path d="M361.5 345Q366.8 390 382.5 419" fill="none" stroke="#808080" stroke-width="0.85" />
<path d="M375.5 345Q381.4 390 399 424" fill="none" stroke="#808080" stroke-width="0.85" />
<path d="M388.5 345Q392.8 395 402.8 425.5" fill="none" stroke="#808080" stroke-width="0.85" />
<path d="M402 345Q404.1 395 408.9 428.9" fill="none" stroke="#808080" stroke-width="0.85" />
<path d="M414.5 345Q414.5 390 414.5 435" fill="none" stroke="#808080" stroke-width="0.85" />
<path d="M426.5 345Q424.5 395 419.9 429" fill="none" stroke="#808080" stroke-width="0.85" />
<path d="M440 345Q435.8 395 426 425.6" fill="none" stroke="#808080" stroke-width="0.85" />
<path d="M453.5 345Q447.6 390 430 424" fill="none" stroke="#808080" stroke-width="0.85" />
<path d="M467.5 345Q462.2 390 446.5 419" fill="none" stroke="#808080" stroke-width="0.85" />
<path d="M482.5 345Q477.2 390 461.5 418.5" fill="none" stroke="#808080" stroke-width="0.85" />
<path d="M496 345Q489.6 390 470.5 423" fill="none" stroke="#808080" stroke-width="0.85" />
<path d="M364 361.5L374 361.5M380 361.5L390 361.5M396 361.5L404 361.5M425 361.5L433 361.5M440 361.5L450 361.5M456 361.5L466 361.5M348 373.5L358 373.5M364 373.5L374 373.5M380 373.5L390 373.5M396 373.5L404 373.5M425 373.5L433 373.5M440 373.5L450 373.5M456 373.5L466 373.5M472 373.5L482 373.5M348 378L358 378M364 378L374 378M380 378L390 378M396 378L404 378M425 378L433 378M440 378L450 378M456 378L466 378M472 378L482 378M348 381.5L358 381.5M364 381.5L374 381.5M380 381.5L390 381.5M396 381.5L404 381.5M425 381.5L433 381.5M440 381.5L450 381.5M456 381.5L466 381.5M472 381.5L482 381.5M348 385.5L358 385.5M364 385.5L374 385.5M380 385.5L390 385.5M396 385.5L404 385.5M425 385.5L433 385.5M440 385.5L450 385.5M456 385.5L466 385.5M472 385.5L482 385.5M348 389.5L358 389.5M364 389.5L374 389.5M380 389.5L390 389.5M396 389.5L404 389.5M425 389.5L433 389.5M440 389.5L450 389.5M456 389.5L466 389.5M472 389.5L482 389.5" fill="none" stroke="#808080" stroke-width="0.85" />
<path d="M403.5 345L403.5 392M425.5 345L425.5 392M470 352L470 370" fill="none" stroke="#808080" stroke-width="0.85" />
<path d="M444 335.5L452 335.5M457 335.5L468 335.5M443 339.5L470 339.5M443 343.5L470 343.5M443 347.5L468 347.5M450 351.5L468 351.5M450.5 335L450.5 351M457.5 339L457.5 352M464.5 339L464.5 352M469.5 339L469.5 344" fill="none" stroke="#f0f020" stroke-width="1.02" />
<path d="M773 216 L773.5 215.2 L774.2 214 L775.1 212.7 L776.3 211.3 L778 210 L780.4 208.9 L783.4 208 L786.6 207 L789.6 205.7 L792 204 L793.5 201.7 L794.3 198.8 L794.9 195.7 L795.7 192.7 L797 190 L799 187.6 L801.4 185.3 L804.1 183.2 L806.8 181.4 L809.4 179.8 L811.8 178.5 L814.1 177.4 L816.4 176.6 L819 176.1 L821.9 176 L825.3 176.3 L829.1 176.9 L833.1 177.8 L837 179 L840.6 180.6 L843.9 182.6 L847.1 184.9 L850.2 187.6 L853.1 190.3 L856 193 L858.8 195.7 L861.5 198.4 L864.2 201.2 L866.6 204.1 L868.8 207 L870.8 210 L872.5 213.2 L874.1 216.4 L875.5 219.6 L876.6 222.8 L877.5 225.9 L878 228.8 L878.4 231.8 L878.7 235 L879 238.4 L879.3 242.5 L879.4 247.2 L879.6 251.9 L879.6 255.9 L879.7 258.8" fill="none" stroke="#808080" stroke-width="1.19" />
<path d="M776.5 220 L777 219.2 L777.7 218.1 L778.5 216.8 L779.7 215.5 L781.2 214.3 L783.5 213.3 L786.3 212.4 L789.3 211.5 L792.2 210.3 L794.4 208.7 L795.8 206.5 L796.6 203.8 L797.1 200.9 L797.9 198 L799.1 195.5 L801 193.3 L803.3 191.1 L805.8 189.2 L808.3 187.4 L810.8 185.9 L813 184.7 L815.2 183.7 L817.4 182.9 L819.8 182.5 L822.5 182.4 L825.7 182.6 L829.3 183.2 L833 184 L836.7 185.2 L840.1 186.7 L843.2 188.5 L846.2 190.7 L849.1 193.2 L851.9 195.8 L854.6 198.3 L857.2 200.8 L859.8 203.4 L862.2 206 L864.5 208.7 L866.6 211.5 L868.4 214.4 L870.1 217.3 L871.6 220.3 L872.9 223.4 L873.9 226.4 L874.7 229.2 L875.3 232 L875.6 234.8 L875.9 237.8 L876.2 241 L876.4 244.9 L876.6 249.3 L876.7 253.7 L876.8 257.5 L876.8 260.2" fill="none" stroke="#808080" stroke-width="0.85" />
<path d="M780.1 223.9 L780.6 223.2 L781.1 222.2 L781.9 221 L783 219.8 L784.5 218.6 L786.6 217.7 L789.2 216.9 L792.1 216 L794.7 214.9 L796.8 213.4 L798.1 211.3 L798.8 208.8 L799.4 206.1 L800 203.4 L801.2 201 L803 198.9 L805.1 196.9 L807.4 195.1 L809.8 193.4 L812.1 192.1 L814.2 190.9 L816.2 190 L818.3 189.3 L820.6 188.8 L823.1 188.7 L826.1 188.9 L829.4 189.5 L832.9 190.3 L836.4 191.4 L839.6 192.8 L842.5 194.5 L845.3 196.6 L848 198.9 L850.6 201.3 L853.1 203.7 L855.6 206 L858 208.4 L860.3 210.9 L862.4 213.4 L864.4 216 L866.1 218.7 L867.7 221.5 L869.1 224.3 L870.2 227.1 L871.2 229.9 L872 232.6 L872.5 235.2 L872.9 237.8 L873.1 240.6 L873.4 243.6 L873.6 247.2 L873.7 251.4 L873.8 255.5 L873.9 259.1 L874 261.6" fill="none" stroke="#808080" stroke-width="0.85" />
<path d="M783.6 227.9 L784.1 227.2 L784.6 226.3 L785.4 225.2 L786.4 224 L787.7 223 L789.7 222.1 L792.1 221.3 L794.8 220.5 L797.3 219.4 L799.2 218 L800.4 216.1 L801.1 213.8 L801.6 211.2 L802.2 208.8 L803.3 206.6 L804.9 204.6 L806.9 202.7 L809.1 201 L811.3 199.5 L813.5 198.2 L815.4 197.1 L817.3 196.2 L819.2 195.6 L821.3 195.2 L823.7 195.1 L826.5 195.3 L829.6 195.8 L832.9 196.6 L836.1 197.6 L839.1 198.9 L841.8 200.5 L844.4 202.4 L846.9 204.6 L849.3 206.8 L851.7 209 L854 211.2 L856.2 213.4 L858.4 215.7 L860.4 218.1 L862.2 220.5 L863.8 223 L865.2 225.6 L866.5 228.2 L867.6 230.9 L868.6 233.5 L869.3 236 L869.7 238.4 L870.1 240.9 L870.3 243.4 L870.5 246.2 L870.8 249.6 L870.9 253.5 L871 257.3 L871.1 260.6 L871.1 263" fill="none" stroke="#808080" stroke-width="0.85" />
<path d="M787.2 231.8 L787.6 231.2 L788.1 230.3 L788.8 229.3 L789.7 228.3 L791 227.3 L792.8 226.5 L795.1 225.7 L797.5 225 L799.8 224 L801.6 222.7 L802.7 220.9 L803.3 218.8 L803.8 216.4 L804.4 214.1 L805.4 212.1 L806.9 210.3 L808.8 208.5 L810.8 206.9 L812.8 205.5 L814.8 204.3 L816.6 203.3 L818.4 202.5 L820.2 201.9 L822.1 201.5 L824.3 201.4 L826.9 201.6 L829.8 202.1 L832.8 202.8 L835.8 203.8 L838.5 204.9 L841.1 206.4 L843.5 208.2 L845.8 210.2 L848.1 212.3 L850.2 214.4 L852.4 216.4 L854.5 218.5 L856.4 220.6 L858.3 222.8 L860 225 L861.5 227.3 L862.8 229.7 L864 232.2 L865 234.6 L865.9 237 L866.5 239.3 L867 241.6 L867.3 243.9 L867.5 246.3 L867.7 248.9 L867.9 252 L868.1 255.5 L868.1 259.1 L868.2 262.2 L868.3 264.4" fill="none" stroke="#808080" stroke-width="0.85" />
<path d="M790.7 235.8 L791.1 235.2 L791.5 234.4 L792.2 233.5 L793 232.5 L794.2 231.6 L795.9 230.8 L798 230.2 L800.2 229.5 L802.3 228.6 L804 227.4 L805 225.8 L805.6 223.8 L806 221.6 L806.6 219.5 L807.5 217.6 L808.9 215.9 L810.6 214.3 L812.5 212.9 L814.4 211.6 L816.2 210.5 L817.9 209.5 L819.5 208.8 L821.1 208.2 L822.9 207.9 L824.9 207.8 L827.3 208 L830 208.4 L832.7 209.1 L835.5 209.9 L838 211 L840.4 212.4 L842.6 214 L844.7 215.9 L846.8 217.8 L848.8 219.7 L850.8 221.6 L852.7 223.5 L854.5 225.4 L856.2 227.4 L857.8 229.5 L859.1 231.6 L860.4 233.8 L861.5 236.1 L862.4 238.3 L863.2 240.6 L863.8 242.7 L864.2 244.8 L864.5 246.9 L864.7 249.1 L864.9 251.5 L865.1 254.3 L865.2 257.6 L865.3 260.9 L865.3 263.8 L865.4 265.8" fill="none" stroke="#808080" stroke-width="0.85" />
<path d="M794.2 239.8 L794.6 239.2 L795 238.5 L795.6 237.6 L796.4 236.7 L797.4 235.9 L799 235.2 L800.9 234.6 L803 234 L804.9 233.2 L806.4 232.1 L807.3 230.6 L807.9 228.7 L808.3 226.8 L808.7 224.8 L809.6 223.1 L810.9 221.6 L812.4 220.1 L814.1 218.8 L815.9 217.6 L817.5 216.6 L819.1 215.8 L820.5 215.1 L822 214.5 L823.7 214.2 L825.5 214.2 L827.7 214.3 L830.1 214.7 L832.7 215.3 L835.2 216.1 L837.5 217.1 L839.6 218.4 L841.7 219.9 L843.6 221.6 L845.5 223.3 L847.4 225 L849.2 226.7 L850.9 228.5 L852.6 230.3 L854.1 232.1 L855.6 234 L856.8 236 L857.9 238 L858.9 240 L859.8 242.1 L860.5 244.1 L861.1 246.1 L861.5 248 L861.7 249.9 L861.9 251.9 L862.1 254.1 L862.2 256.7 L862.4 259.7 L862.4 262.7 L862.5 265.3 L862.5 267.2" fill="none" stroke="#808080" stroke-width="0.85" />
<path d="M797.8 243.7 L798.1 243.2 L798.5 242.6 L799 241.8 L799.7 241 L800.7 240.2 L802.1 239.6 L803.8 239.1 L805.7 238.5 L807.4 237.8 L808.8 236.8 L809.6 235.4 L810.1 233.7 L810.5 232 L810.9 230.2 L811.7 228.6 L812.9 227.3 L814.3 225.9 L815.8 224.7 L817.4 223.6 L818.9 222.7 L820.3 222 L821.6 221.3 L823 220.9 L824.5 220.6 L826.1 220.5 L828.1 220.7 L830.3 221 L832.6 221.6 L834.9 222.3 L837 223.2 L838.9 224.3 L840.8 225.7 L842.5 227.2 L844.3 228.8 L845.9 230.4 L847.5 231.9 L849.1 233.5 L850.7 235.1 L852.1 236.8 L853.3 238.5 L854.5 240.3 L855.5 242.1 L856.4 244 L857.2 245.8 L857.9 247.7 L858.4 249.4 L858.7 251.2 L858.9 252.9 L859.1 254.7 L859.3 256.7 L859.4 259.1 L859.5 261.8 L859.6 264.5 L859.6 266.9 L859.7 268.5" fill="none" stroke="#808080" stroke-width="0.85" />
<path d="M801.3 247.7 L801.6 247.3 L801.9 246.7 L802.4 246 L803.1 245.2 L803.9 244.6 L805.2 244 L806.7 243.5 L808.4 243 L810 242.3 L811.2 241.4 L812 240.2 L812.4 238.7 L812.7 237.1 L813.1 235.6 L813.8 234.2 L814.8 232.9 L816.1 231.7 L817.5 230.6 L818.9 229.7 L820.2 228.9 L821.5 228.2 L822.7 227.6 L823.9 227.2 L825.2 226.9 L826.7 226.9 L828.5 227 L830.5 227.3 L832.6 227.8 L834.6 228.5 L836.5 229.3 L838.2 230.3 L839.9 231.5 L841.5 232.9 L843 234.3 L844.5 235.7 L845.9 237.1 L847.4 238.5 L848.7 240 L850 241.5 L851.1 243 L852.2 244.6 L853.1 246.2 L853.9 247.9 L854.6 249.6 L855.2 251.2 L855.6 252.8 L855.9 254.3 L856.1 255.9 L856.3 257.5 L856.4 259.3 L856.6 261.5 L856.7 263.9 L856.7 266.3 L856.8 268.5 L856.8 269.9" fill="none" stroke="#808080" stroke-width="0.85" />
<path d="M804.9 251.6 L805.1 251.3 L805.4 250.7 L805.8 250.1 L806.4 249.5 L807.2 248.9 L808.2 248.4 L809.6 248 L811.1 247.5 L812.5 246.9 L813.6 246.1 L814.3 245 L814.7 243.7 L814.9 242.3 L815.3 240.9 L815.9 239.7 L816.8 238.6 L817.9 237.5 L819.2 236.6 L820.4 235.7 L821.6 235 L822.7 234.4 L823.8 233.9 L824.8 233.5 L826 233.3 L827.4 233.2 L828.9 233.4 L830.7 233.6 L832.5 234.1 L834.3 234.6 L836 235.4 L837.5 236.3 L839 237.3 L840.4 238.6 L841.7 239.8 L843 241.1 L844.3 242.3 L845.6 243.5 L846.8 244.8 L847.9 246.1 L848.9 247.5 L849.8 248.9 L850.6 250.4 L851.4 251.8 L852 253.3 L852.5 254.8 L852.9 256.2 L853.2 257.5 L853.4 258.9 L853.5 260.4 L853.6 261.9 L853.7 263.8 L853.8 266 L853.9 268.1 L853.9 270 L853.9 271.3" fill="none" stroke="#808080" stroke-width="0.85" />
<path d="M808.4 255.6 L808.6 255.3 L808.9 254.8 L809.2 254.3 L809.7 253.7 L810.4 253.2 L811.3 252.8 L812.6 252.4 L813.8 252 L815.1 251.5 L816 250.8 L816.6 249.9 L816.9 248.7 L817.2 247.5 L817.5 246.3 L818 245.2 L818.8 244.2 L819.8 243.3 L820.8 242.5 L821.9 241.7 L823 241.1 L823.9 240.6 L824.8 240.2 L825.8 239.8 L826.8 239.6 L828 239.6 L829.3 239.7 L830.8 239.9 L832.4 240.3 L834 240.8 L835.4 241.4 L836.8 242.2 L838 243.2 L839.3 244.2 L840.5 245.3 L841.6 246.4 L842.7 247.5 L843.8 248.6 L844.9 249.7 L845.8 250.8 L846.7 252 L847.5 253.2 L848.2 254.5 L848.8 255.8 L849.4 257 L849.8 258.3 L850.2 259.5 L850.4 260.7 L850.6 261.9 L850.7 263.2 L850.8 264.6 L850.9 266.2 L851 268.1 L851 270 L851.1 271.6 L851.1 272.7" fill="none" stroke="#808080" stroke-width="0.85" />
<path d="M775.1 212.7 L811.5 257" fill="none" stroke="#808080" stroke-width="0.85" />
<path d="M778 210 L812.6 256.1" fill="none" stroke="#808080" stroke-width="0.85" />
<path d="M783.4 208 L814.5 255.4" fill="none" stroke="#808080" stroke-width="0.85" />
<path d="M789.6 205.7 L816.7 254.5" fill="none" stroke="#808080" stroke-width="0.85" />
<path d="M793.5 201.7 L818.1 253.1" fill="none" stroke="#808080" stroke-width="0.85" />
<path d="M794.9 195.7 L818.6 250.9" fill="none" stroke="#808080" stroke-width="0.85" />
<path d="M797 190 L819.4 248.9" fill="none" stroke="#808080" stroke-width="0.85" />
<path d="M801.4 185.3 L821 247.2" fill="none" stroke="#808080" stroke-width="0.85" />
<path d="M806.8 181.4 L822.9 245.8" fill="none" stroke="#808080" stroke-width="0.85" />
<path d="M811.8 178.5 L824.7 244.7" fill="none" stroke="#808080" stroke-width="0.85" />
<path d="M816.4 176.6 L826.4 244.1" fill="none" stroke="#808080" stroke-width="0.85" />
<path d="M821.9 176 L828.4 243.8" fill="none" stroke="#808080" stroke-width="0.85" />
<path d="M829.1 176.9 L831 244.1" fill="none" stroke="#808080" stroke-width="0.85" />
<path d="M837 179 L833.8 244.9" fill="none" stroke="#808080" stroke-width="0.85" />
<path d="M843.9 182.6 L836.3 246.2" fill="none" stroke="#808080" stroke-width="0.85" />
<path d="M850.2 187.6 L838.5 248" fill="none" stroke="#808080" stroke-width="0.85" />
<path d="M856 193 L840.6 250" fill="none" stroke="#808080" stroke-width="0.85" />
<path d="M861.5 198.4 L842.6 251.9" fill="none" stroke="#808080" stroke-width="0.85" />
<path d="M866.6 204.1 L844.5 253.9" fill="none" stroke="#808080" stroke-width="0.85" />
<path d="M870.8 210 L846 256.1" fill="none" stroke="#808080" stroke-width="0.85" />
<path d="M874.1 216.4 L847.2 258.4" fill="none" stroke="#808080" stroke-width="0.85" />
<path d="M876.6 222.8 L848.1 260.7" fill="none" stroke="#808080" stroke-width="0.85" />
<path d="M878 228.8 L848.6 262.9" fill="none" stroke="#808080" stroke-width="0.85" />
<path d="M878.7 235 L848.8 265.1" fill="none" stroke="#808080" stroke-width="0.85" />
<path d="M879.3 242.5 L849 267.8" fill="none" stroke="#808080" stroke-width="0.85" />
<path d="M879.6 251.9 L849.1 271.2" fill="none" stroke="#808080" stroke-width="0.85" />
<path d="M879.7 258.8 L849.2 273.6" fill="none" stroke="#808080" stroke-width="0.85" />
<path d="M863.5 259.4L867.1 264.6M846.1 246.9L851.2 249.7M832.7 226.2L826.1 226.3M872.2 240.8L875.6 244.7M835.3 218.9L830.7 220.5M840 242.4L844.1 242.7M824.7 201.3L819.2 201.3M851.3 205.6L845.3 210.1M855.8 275.9L850.4 280.1M826.9 283.2L833.7 286.9M857.3 257.4L856.8 262.7M837.2 277.7L832.5 280.5M826.9 273.6L827.8 281.1M843.1 277.3L843.4 283.9M816.9 219.5L822.5 222.7M869 214L873.3 220.3M872.8 256.5L872.5 262M849.5 245L853.1 247.8M838.9 278.6L844.8 280M862.4 258.4L868.6 262.7M856.6 193.7L860.7 198.4M817.2 272.9L817 276.4M864.9 211.7L861.1 213.2M832.1 257.5L833.5 260.4M813.1 253.3L809.7 253.7M801.9 258.8L804.1 261M861.8 203.2L859.6 206.5M829.3 192.2L836.4 195.8M802.8 221.4L798.6 225.8M808.6 220.7L809.1 223.8M858.2 259.8L852.8 265M865.5 256.4L869.6 259.9M850.2 218.7L850.8 222.1M866.5 200.4L868.4 206M839.1 202L844.5 207.6M846.1 228.7L845.5 231.8M807.3 249.6L801.8 249.9M817.7 231.1L816.5 235.2M847.4 265.6L852 270.3M832.1 239L835.2 239.4M831.1 198.8L835.9 203.3M807.6 205.6L810.8 208.3M839.6 233L837.6 237.2M816.1 275.9L811 281.8M833 237.6L838.8 238.6M831.8 238.9L835.5 240.1M861 223.5L855.6 224.9M846.4 216.1L849.5 223.4M801.4 254.5L803.5 257.3M863.9 253.2L864.4 256.3M831.2 235.1L830.1 239M805.6 215.6L800.8 216.6M805.8 261.2L804.9 265.1M829.8 232.9L832 239.3M809.3 199.8L806.2 201.4M848.7 281.1L855.2 281.6M850.1 263.4L850.1 270M827.2 232.3L831.8 237.6M840 234.3L833.6 238.8M870.8 269.1L874.2 272.1" fill="none" stroke="#808080" stroke-width="0.85" />
<path d="M879.7 258.8 L884.4 266.6 L884 274 L866 297 L856 305.6 L855 311 L855 342" fill="none" stroke="#808080" stroke-width="1.1" />
<path d="M875 262 L878 270 L861 296 L851 306 L850 338" fill="none" stroke="#808080" stroke-width="0.85" />
<path d="M855 312 L826 296" fill="none" stroke="#808080" stroke-width="0.85" />
<path d="M859.8 305.3 L830.3 288.7" fill="none" stroke="#808080" stroke-width="0.85" />
<path d="M864.7 298.7 L834.7 281.3" fill="none" stroke="#808080" stroke-width="0.85" />
<path d="M869.5 292 L839 274" fill="none" stroke="#808080" stroke-width="0.85" />
<path d="M874.3 285.3 L843.3 266.7" fill="none" stroke="#808080" stroke-width="0.85" />
<path d="M879.2 278.7 L847.7 259.3" fill="none" stroke="#808080" stroke-width="0.85" />
<path d="M884 272 L852 252" fill="none" stroke="#808080" stroke-width="0.85" />
<path d="M855 312 L884 272" fill="none" stroke="#808080" stroke-width="0.85" />
<path d="M847.8 308 L876 267" fill="none" stroke="#808080" stroke-width="0.85" />
<path d="M840.5 304 L868 262" fill="none" stroke="#808080" stroke-width="0.85" />
<path d="M833.2 300 L860 257" fill="none" stroke="#808080" stroke-width="0.85" />
<path d="M826 296 L852 252" fill="none" stroke="#808080" stroke-width="0.85" />
<path d="M855 342 L845 363 L801 393 L741 431" fill="none" stroke="#808080" stroke-width="1.1" />
<path d="M850 338 L840 358 L800 386 L745 422" fill="none" stroke="#808080" stroke-width="0.85" />
<path d="M745 423 L745 403" fill="none" stroke="#808080" stroke-width="0.85" />
<path d="M756.9 413.6 L756.9 393.6" fill="none" stroke="#808080" stroke-width="0.85" />
<path d="M768.8 404.1 L768.8 384.1" fill="none" stroke="#808080" stroke-width="0.85" />
<path d="M780.7 394.7 L780.7 374.7" fill="none" stroke="#808080" stroke-width="0.85" />
<path d="M792.6 385.2 L792.6 365.2" fill="none" stroke="#808080" stroke-width="0.85" />
<path d="M804.4 375.8 L804.4 355.8" fill="none" stroke="#808080" stroke-width="0.85" />
<path d="M816.3 366.3 L816.3 346.3" fill="none" stroke="#808080" stroke-width="0.85" />
<path d="M828.2 356.9 L828.2 336.9" fill="none" stroke="#808080" stroke-width="0.85" />
<path d="M840.1 347.4 L840.1 327.4" fill="none" stroke="#808080" stroke-width="0.85" />
<path d="M852 338 L852 318" fill="none" stroke="#808080" stroke-width="0.85" />
<path d="M745 416 L852 331" fill="none" stroke="#808080" stroke-width="0.85" />
<path d="M745 409 L852 324" fill="none" stroke="#808080" stroke-width="0.85" />
<path d="M745 402 L852 317" fill="none" stroke="#808080" stroke-width="0.85" />
<path d="M637 375 L678 343" fill="none" stroke="#808080" stroke-width="0.85" />
<path d="M648.6 381.2 L691.1 348" fill="none" stroke="#808080" stroke-width="0.85" />
<path d="M660.1 387.4 L704.2 353" fill="none" stroke="#808080" stroke-width="0.85" />
<path d="M671.7 393.7 L717.3 358.1" fill="none" stroke="#808080" stroke-width="0.85" />
<path d="M683.2 399.9 L730.3 363.1" fill="none" stroke="#808080" stroke-width="0.85" />
<path d="M694.8 406.1 L743.4 368.1" fill="none" stroke="#808080" stroke-width="0.85" />
<path d="M706.3 412.3 L756.5 373.2" fill="none" stroke="#808080" stroke-width="0.85" />
<path d="M717.9 418.6 L769.6 378.2" fill="none" stroke="#808080" stroke-width="0.85" />
<path d="M729.4 424.8 L782.6 383.2" fill="none" stroke="#808080" stroke-width="0.85" />
<path d="M741 431 L795.7 388.3" fill="none" stroke="#808080" stroke-width="0.85" />
<path d="M637 375 L741 431" fill="none" stroke="#808080" stroke-width="0.85" />
<path d="M644.2 369.4 L751.3 423" fill="none" stroke="#808080" stroke-width="0.85" />
<path d="M651.4 363.8 L761.5 415" fill="none" stroke="#808080" stroke-width="0.85" />
<path d="M658.5 358.2 L771.8 407" fill="none" stroke="#808080" stroke-width="0.85" />
<path d="M665.7 352.6 L782 399" fill="none" stroke="#808080" stroke-width="0.85" />
<path d="M672.9 347 L792.3 390.9" fill="none" stroke="#808080" stroke-width="0.85" />
<path d="M636.5 375 L685.6 413 L695.8 407 L739.8 431.3" fill="none" stroke="#808080" stroke-width="1.1" />
<path d="M632 372 L684 418" fill="none" stroke="#808080" stroke-width="0.85" />
<path d="M639.3 366.2 L665.3 346.2" fill="none" stroke="#808080" stroke-width="0.85" />
<path d="M650.8 372.4 L676.8 352.4" fill="none" stroke="#808080" stroke-width="0.85" />
<path d="M662.4 378.7 L688.4 358.7" fill="none" stroke="#808080" stroke-width="0.85" />
<path d="M673.9 384.9 L699.9 364.9" fill="none" stroke="#808080" stroke-width="0.85" />
<path d="M685.5 391.1 L711.5 371.1" fill="none" stroke="#808080" stroke-width="0.85" />
<path d="M697.1 397.3 L723.1 377.3" fill="none" stroke="#808080" stroke-width="0.85" />
<path d="M708.6 403.6 L734.6 383.6" fill="none" stroke="#808080" stroke-width="0.85" />
<path d="M720.2 409.8 L746.2 389.8" fill="none" stroke="#808080" stroke-width="0.85" />
<path d="M731.7 416 L757.7 396" fill="none" stroke="#808080" stroke-width="0.85" />
<path d="M743.3 422.2 L769.3 402.2" fill="none" stroke="#808080" stroke-width="0.85" />
<path d="M615.3 351.5 L641.6 322.2 L653.3 307.6 L673.8 290 L700 268 L726.5 251.7" fill="none" stroke="#808080" stroke-width="1.1" />
<path d="M619 353.5 L646 325 L658 311 L678 294 L704 272" fill="none" stroke="#808080" stroke-width="0.85" />
<path d="M658 311 L662 316" fill="none" stroke="#808080" stroke-width="0.85" />
<path d="M662.6 307.1 L666.7 312.1" fill="none" stroke="#808080" stroke-width="0.85" />
<path d="M667.2 303.2 L671.4 308.2" fill="none" stroke="#808080" stroke-width="0.85" />
<path d="M671.8 299.3 L676.1 304.3" fill="none" stroke="#808080" stroke-width="0.85" />
<path d="M676.4 295.4 L680.8 300.4" fill="none" stroke="#808080" stroke-width="0.85" />
<path d="M681 291.5 L685.5 296.5" fill="none" stroke="#808080" stroke-width="0.85" />
<path d="M685.6 287.6 L690.2 292.6" fill="none" stroke="#808080" stroke-width="0.85" />
<path d="M690.2 283.7 L694.9 288.7" fill="none" stroke="#808080" stroke-width="0.85" />
<path d="M694.8 279.8 L699.6 284.8" fill="none" stroke="#808080" stroke-width="0.85" />
<path d="M699.4 275.9 L704.3 280.9" fill="none" stroke="#808080" stroke-width="0.85" />
<path d="M704 272 L709 277" fill="none" stroke="#808080" stroke-width="0.85" />
<path d="M662 316 L709 277" fill="none" stroke="#808080" stroke-width="0.85" />
<path d="M700 268 L754.7 226 L773 216" fill="none" stroke="#808080" stroke-width="1.02" />
<path d="M704 273 L757 231" fill="none" stroke="#808080" stroke-width="0.85" />
<path d="M641.6 322.2 L629.7 345.5" fill="none" stroke="#808080" stroke-width="0.85" />
<path d="M650.8 316.6 L640 352" fill="none" stroke="#808080" stroke-width="0.85" />
<path d="M660.6 309 L649 362" fill="none" stroke="#808080" stroke-width="0.85" />
<path d="M670 300 L662 370" fill="none" stroke="#808080" stroke-width="0.85" />
<path d="M626.5 356.1 L671.9 309.3" fill="none" stroke="#808080" stroke-width="0.85" />
<path d="M637 361 L684 317" fill="none" stroke="#808080" stroke-width="0.85" />
<path d="M648.4 366.4 L697.2 325.4" fill="none" stroke="#808080" stroke-width="0.85" />
<path d="M615.3 351.5 L616.2 351.1 L617.5 350.4 L619 349.7 L620.7 348.9 L622.4 348.3 L624 347.9 L625.6 347.7 L627.4 347.5 L629.1 347.4 L630.9 347.5 L632.7 347.9 L634.3 348.6 L635.9 349.8 L637.4 351.3 L638.9 353.1 L640.4 355 L641.7 357 L643 358.8 L644 360.6 L644.7 362.5 L645.3 364.3 L646 366.1 L647.2 367.7 L649 369 L651.6 369.8 L654.9 370.3 L658.5 370.6 L662.4 370.8 L666.1 371.2 L669.5 372 L672.7 373.1 L675.8 374.3 L678.8 375.7 L681.7 377.2 L684.5 378.9 L687 380.8 L689.2 383 L691.1 385.6 L692.8 388.4 L694.6 391.1 L696.5 393.5 L698.7 395.5 L701.2 397 L703.8 398.2 L706.5 399.1 L709.5 399.8 L712.7 400.3 L716.3 400.6 L720.4 400.7 L725 400.6 L729.9 400.3 L734.8 399.8 L739.6 399.2 L744 398.4 L748 397.5 L751.7 396.4 L755.2 395.2 L758.7 393.9 L762.3 392.4 L766 391 L769.7 389.7 L773.3 388.4 L776.9 387.1 L780.7 385.5 L785.1 383.6 L790 381 L795.9 377.6 L802.7 373.5 L809.9 369 L817.2 364.4 L824 359.9 L830 356 L835.3 352.4 L840.4 348.8 L845 345.4 L849.1 342.4 L852.5 339.9 L855 338" fill="none" stroke="#808080" stroke-width="3" />
<path d="M660.4 363.6 L706.4 327.6" fill="none" stroke="#808080" stroke-width="0.85" />
<path d="M672.6 367.1 L718.6 331.1" fill="none" stroke="#808080" stroke-width="0.85" />
<path d="M684.8 370.6 L730.8 334.6" fill="none" stroke="#808080" stroke-width="0.85" />
<path d="M696.9 374.2 L742.9 338.2" fill="none" stroke="#808080" stroke-width="0.85" />
<path d="M709.1 377.7 L755.1 341.7" fill="none" stroke="#808080" stroke-width="0.85" />
<path d="M721.2 381.3 L767.2 345.3" fill="none" stroke="#808080" stroke-width="0.85" />
<path d="M733.4 384.8 L779.4 348.8" fill="none" stroke="#808080" stroke-width="0.85" />
<path d="M745.6 388.3 L791.6 352.3" fill="none" stroke="#808080" stroke-width="0.85" />
<path d="M757.7 391.9 L803.7 355.9" fill="none" stroke="#808080" stroke-width="0.85" />
<path d="M769.9 395.4 L815.9 359.4" fill="none" stroke="#808080" stroke-width="0.85" />
<path d="M782 399 L828 363" fill="none" stroke="#808080" stroke-width="0.85" />
<path d="M680.6 368.4 L786.6 395.4" fill="none" stroke="#808080" stroke-width="0.85" />
<path d="M686.9 363.5 L792.9 390.5" fill="none" stroke="#808080" stroke-width="0.85" />
<path d="M693.1 358.6 L799.1 385.6" fill="none" stroke="#808080" stroke-width="0.85" />
<path d="M699.4 353.7 L805.4 380.7" fill="none" stroke="#808080" stroke-width="0.85" />
<path d="M705.7 348.8 L811.7 375.8" fill="none" stroke="#808080" stroke-width="0.85" />
<path d="M711.9 343.9 L818 370.9" fill="none" stroke="#808080" stroke-width="0.85" />
<path d="M718.2 339 L824.2 366" fill="none" stroke="#808080" stroke-width="0.85" />
<path d="M724.5 334.1 L830.5 361.1" fill="none" stroke="#808080" stroke-width="0.85" />
<defs><radialGradient id="gm" cx="726" cy="336" r="62" gradientUnits="userSpaceOnUse"><stop offset="0" stop-color="#808080" stop-opacity=".7"/><stop offset=".55" stop-color="#808080" stop-opacity=".45"/><stop offset="1" stop-color="#808080" stop-opacity="0"/></radialGradient></defs>
<path d="M659 292 L708.5 265 L724 300 L752 338 L792 372 L770 388 L716 392 L690 372 L672 340Z" fill="url(#gm)" stroke="none"/>
<path d="M715.5 352.3L715.5 358.9M675.5 317.5L677.8 317.5M696.5 292.8L696.5 298.2M716.5 331.7L716.5 334.3M738.5 379.3L738.5 382.2M723.5 315.9L723.5 321.4M759.5 349.6L759.5 355.4M686.5 344.6L686.5 348.6M755.5 379.5L755.5 384.7M757.5 342.7L757.5 349.2M674.3 343.5L678.5 343.5M734.5 324.1L734.5 327.1M723.5 373.3L723.5 378.6M722.9 352.5L726.6 352.5M749.5 367.5L755.8 367.5M677.8 313.5L682.1 313.5M730.5 312.8L730.5 317.1M698.5 348.3L698.5 352.7M745.5 368.5L750.8 368.5M729.5 375.2L729.5 381.2M698.1 293.5L702.4 293.5M708.1 310.5L711.7 310.5M717.5 300.8L717.5 307.3M716.9 347.5L723.5 347.5M669.5 293.6L669.5 296.6M707.3 309.5L713.3 309.5M711.5 371.5L711.5 375.2M752.5 388.2L752.5 393.9M695.8 345.5L701.2 345.5M710.3 285.5L717.1 285.5M722.5 380.8L722.5 383.8M704.5 309.8L704.5 316.4M694.9 347.5L697.6 347.5M674.9 289.5L678.2 289.5M690 308.5L693.3 308.5M707.2 364.5L709.5 364.5M728.5 374.4L728.5 378.1M721.5 344.4L721.5 348M739.5 340.2L739.5 344.9M718.6 317.5L723.3 317.5M750.2 384.5L752.5 384.5M669.8 309.5L672.7 309.5M688.8 326.5L693.6 326.5M750.5 378.5L753.2 378.5M670.2 290.5L672.4 290.5M708.5 344.8L708.5 351.1M707.8 302.5L712 302.5M711.5 368.1L711.5 374.2M721.5 299.8L721.5 305.7M687.5 355.5L687.5 361M683.5 287.8L683.5 292.7M742.6 361.5L748.1 361.5M770.2 373.5L775.2 373.5M744.5 334.4L744.5 337.3M720.5 300.8L720.5 303.9M712.8 317.5L718.4 317.5M702.5 333.6L702.5 337.5M763.1 354.5L769 354.5M718.6 308.5L723 308.5M681.7 325.5L684.7 325.5M678.9 342.5L685.2 342.5M741.5 349.6L741.5 356M698.1 290.5L704.3 290.5M682.7 304.5L686.3 304.5M716.7 318.5L722.8 318.5M676.1 343.5L680 343.5M737.3 384.5L742.6 384.5M767.1 384.5L769.9 384.5M683.5 355.6L683.5 362M688.5 290.3L688.5 292.6M709.8 320.5L716.6 320.5M721.5 313.5L724.5 313.5M730.5 370.7L730.5 373.2M726.5 331.2L726.5 337.1M753.7 360.5L756.8 360.5M675.5 304.8L675.5 309.5M745.5 387.4L745.5 389.9M698.5 349.8L698.5 354.2M705.5 307.2L705.5 313.8M744.5 369.1L744.5 375.5M703.5 373.4L703.5 375.5M730.6 343.5L734.8 343.5M790.3 372.5L795.7 372.5M689.5 367.5L696 367.5M687.7 287.5L689.7 287.5M727.5 332.2L727.5 336.2M672.7 319.5L677 319.5M727.5 320.5L727.5 324.7M677.7 341.5L680.4 341.5M716.9 324.5L721 324.5M686.5 361.8L686.5 368.6M697.5 373.7L697.5 380.6M735.5 353.3L735.5 356.5M706.5 374.7L706.5 379M733.5 333.1L733.5 337.4M726.5 381.4L726.5 387.1M739.5 345L739.5 349.3M741.3 364.5L746.8 364.5M712.5 348L712.5 353.9M748.8 351.5L752.8 351.5M740.5 359.5L740.5 362.4M700.6 273.5L705.6 273.5M701.5 325.6L701.5 332.1M697.5 372.4L697.5 377.3M720.5 299.2L720.5 303.7M688.9 370.5L694.5 370.5M711.8 325.5L715.6 325.5M683.5 355.1L683.5 361.8M741.1 367.5L743.8 367.5M683.5 286.6L683.5 290.6M697.7 338.5L702 338.5M768.5 378.9L768.5 383.2M684.5 317.5L684.5 320.1M687.5 344.3L687.5 349.5M745.5 375L745.5 377.8M726.5 384.5L726.5 391.4M682.4 336.5L684.5 336.5M744.5 357.7L744.5 364M722.5 301.2L722.5 303.5M770.5 381.4L770.5 385.2M677.5 302L677.5 306.8M701.9 274.5L704.8 274.5M712.5 349.5L718.7 349.5M703.5 286.6L703.5 293.4M707.9 318.5L713.7 318.5M692.6 334.5L699.1 334.5M772.5 357.8L772.5 360.7M742 356.5L746.6 356.5M718.7 316.5L721.3 316.5M703.5 314.4L703.5 319.2M691.3 336.5L695 336.5M785.5 373.5L788.4 373.5M669.6 302.5L673.7 302.5M714.1 354.5L720.3 354.5M708.2 304.5L711 304.5M692.5 296.2L692.5 299.3M713.5 326.3L713.5 332.5M735.7 332.5L740.6 332.5M720.8 347.5L723.6 347.5M769.1 360.5L776 360.5M726.1 381.5L728.9 381.5M727.2 360.5L732.6 360.5M733.7 381.5L738.4 381.5M766.5 381.2L766.5 387.9M690.7 299.5L694 299.5M700.5 300.9L700.5 307.7M749.6 379.5L751.8 379.5M714.5 292.1L714.5 296M697.5 349.4L697.5 352.3M714.5 372.7L714.5 379.5M740.8 340.5L743.3 340.5M684.5 357.9L684.5 364.1M748.9 349.5L753 349.5M689.5 294.3L689.5 297.4M751.8 379.5L754.8 379.5M669.8 327.5L672.7 327.5M695.5 273.2L695.5 279.3M698.5 273.9L698.5 278.3M730.5 348L730.5 351.1M673.5 323.5L678.6 323.5M676.5 287.3L676.5 291.2M715.6 289.5L719.3 289.5M674.3 340.5L678.6 340.5M696.5 367L696.5 373.7M738.5 345.4L738.5 352.1M763.2 369.5L769.1 369.5M720.5 347.7L720.5 352.6M701.4 272.5L707.9 272.5M761.2 377.5L764.1 377.5M714.5 374.3L714.5 380.5M693.2 345.5L699.6 345.5M723.5 349.2L723.5 352.8M719.5 319.1L719.5 324.8M754.4 378.5L760.4 378.5M745.5 376.9L745.5 379.2M728.8 316.5L731.4 316.5M760.5 379.6L760.5 386.5M778.5 371.9L778.5 374.7M777.5 362L777.5 365.4M710.5 319.5L710.5 325.2M770.5 383.4L770.5 386.7M680.5 328.5L684.3 328.5M715.6 335.5L721.9 335.5M684.5 297.4L684.5 303.5M685.1 326.5L689.7 326.5M729.5 348.4L729.5 353.1M668.8 323.5L675 323.5M679.5 344L679.5 346.7M672.5 286.9L672.5 290.5M740.6 343.5L745.7 343.5M690.5 339.9L690.5 346.7M684.7 341.5L687.7 341.5M739.7 356.5L744.7 356.5M700.1 332.5L703.3 332.5M756.5 352.4L756.5 356.7M774.5 361.7L774.5 367.4M712.5 318.7L712.5 323.8M694.4 363.5L701.1 363.5M723.6 335.5L729.5 335.5M734.5 331L734.5 335.9M716.5 313.5L716.5 317.5M710.1 364.5L715.5 364.5M712.9 322.5L719.1 322.5M783.3 370.5L785.4 370.5M729.6 346.5L736 346.5M689.7 350.5L695.7 350.5M708.5 298L708.5 301.3M735.5 362.7L735.5 368.2M669.3 317.5L671.9 317.5M714 317.5L716.3 317.5M675.1 333.5L681.2 333.5M753.9 370.5L760.5 370.5M750.7 377.5L757.6 377.5M692.1 295.5L695.6 295.5M702.9 369.5L706 369.5M725.5 332.4L725.5 336.1M697.5 326.7L697.5 331.1M674.5 298.7L674.5 303.9M764.5 354.4L764.5 359.8M737.5 319.5L737.5 324.2M750.5 365.2L750.5 368.8M688.5 338.8L688.5 340.8M757.5 383.1L757.5 387.6M710.5 341.7L710.5 347.4M700.5 339.5L700.5 344.6M736.8 324.5L742.8 324.5M680.5 351.5L684.8 351.5M692.5 275.5L698 275.5M708.5 318L708.5 323.5M674.5 336.4L674.5 340.2M685.2 354.5L689 354.5M725.6 334.5L731.7 334.5M689 316.5L693.2 316.5M725.5 345.5L725.5 352.5M729.2 353.5L734.2 353.5M712.5 327.5L712.5 331.4M720.5 354.7L720.5 360.6M710.5 373.1L710.5 378.1M738.1 362.5L743.6 362.5M758.7 384.5L763.4 384.5M713.7 315.5L719.8 315.5M707.8 364.5L709.9 364.5M696.9 281.5L699.4 281.5M661.5 293.8L661.5 296M689.5 353.5L689.5 357.7M711.7 355.5L716.3 355.5M704.5 325.8L704.5 330.7M671.6 313.5L676.7 313.5M689.5 367.9L689.5 374.7M722 366.5L725.6 366.5M717.7 303.5L722.8 303.5M784 374.5L787.6 374.5M705.5 345.5L705.5 349.2M674.7 298.5L677.4 298.5M695.2 283.5L697.4 283.5M756 354.5L761.9 354.5M727.5 335L727.5 340.3M705.7 363.5L710.2 363.5M690.4 297.5L695.7 297.5M713.3 315.5L719.6 315.5M727.5 369.8L727.5 373.8M690.6 328.5L694.1 328.5M746.6 373.5L751 373.5M747.4 386.5L752.2 386.5M728.5 375.5L728.5 381.6M718.5 327.1L718.5 329.2M732.5 359.3L732.5 366.1M760.5 346.9L760.5 351.5M730.5 384.4L730.5 387.5M722.8 359.5L725.5 359.5M690.5 341.2L690.5 347.7M728.5 312.5L728.5 317M711.7 343.5L716.2 343.5M717.5 364.1L717.5 367.6M700.5 282.5L700.5 287.2M698.5 298.3L698.5 305.3M712.5 336.5L712.5 338.8M730.5 339.3L730.5 344.8M693.5 276L693.5 282.8M757.5 346.4L757.5 353.1M684.5 288.8L684.5 293M676.5 339L676.5 341.8M776.1 383.5L781.9 383.5M701.5 311.5L701.5 318M778.5 362.5L778.5 368M686.5 362.8L686.5 367.7M724.5 321.5L724.5 327.7M765.6 379.5L769.7 379.5M692.9 288.5L697.5 288.5M746.5 349.5L746.5 352.5M718.5 316.2L718.5 319.1M750.2 366.5L756.3 366.5M731.5 344.5L735.4 344.5M757.5 381.6L757.5 386M711.5 347L711.5 350.8M683.4 300.5L687.4 300.5M713.5 387.4L713.5 392M673.5 332.7L673.5 338.5M707.5 377.8L707.5 384.7M677.5 297.4L677.5 303.3M723 303.5L726.3 303.5M760.5 358.4L760.5 361.7M769.1 355.5L775.8 355.5M701.5 311.3L701.5 315.4M791.5 372.6L791.5 377.9M678.5 321.2L678.5 325.1M707.4 348.5L712.1 348.5M748.9 343.5L751.3 343.5M712.5 357.7L712.5 361.1M688.5 319.5L688.5 326.5M710.7 328.5L714.1 328.5M669.7 317.5L672.3 317.5M706 270.5L712.3 270.5M682.8 300.5L685.7 300.5M721.6 332.5L728 332.5M679.4 319.5L682.2 319.5M709.5 372.7L709.5 375.1M728.5 372.7L728.5 377.4M676.5 306.3L676.5 311.3M671.8 299.5L677.6 299.5M710.5 286L710.5 293M749.5 354.7L749.5 358.1M721.5 385.3L721.5 390.3M755 388.5L759.1 388.5M691.4 311.5L697.9 311.5M755.8 386.5L759.9 386.5M761.8 375.5L765.8 375.5M707.5 333.2L707.5 338.5M740.8 323.5L747 323.5M732.5 383.2L732.5 389.4M729.2 348.5L735.1 348.5M723.3 342.5L730.1 342.5M696.7 295.5L699 295.5M706.5 348.9L706.5 354.9M676.5 332.5L683.1 332.5M697.5 334.2L697.5 340.4M682.5 338.4L682.5 340.6M723.8 340.5L729.8 340.5M750.1 362.5L755.3 362.5M763.5 382.2L763.5 386.8M705.6 322.5L711 322.5M765.4 368.5L768.5 368.5M681.5 324.3L681.5 330.8M689.8 277.5L696.7 277.5M764.5 357.3L764.5 362M749.5 374L749.5 379.1M734.7 336.5L740.9 336.5M710.5 368.9L710.5 374.6M757.1 351.5L762.3 351.5M763.4 371.5L766.5 371.5M715.5 360.5L717.9 360.5M712.2 284.5L714.2 284.5M753.6 364.5L758.2 364.5M716.5 381.7L716.5 388.1M682.5 288.7L682.5 292.3M689.9 287.5L695.8 287.5M736.2 325.5L741.7 325.5M686.8 279.5L693 279.5M690.5 339.5L697.3 339.5M700.5 307.5L700.5 311.8M735.9 335.5L739.5 335.5M718.5 369.1L718.5 375.6M697.4 305.5L701.8 305.5M727.5 387.9L727.5 390.5M712.2 295.5L717 295.5M702.5 363.4L702.5 366.9M695.5 362.1L695.5 367.7M720.5 292L720.5 294.5M703.3 374.5L705.8 374.5M702.5 334.9L702.5 340.6M719.5 347.1L719.5 349.6M738.2 354.5L740.5 354.5M676.5 305.3L676.5 309.3M720.6 337.5L724.7 337.5M674.5 325.9L674.5 329M704.5 351.9L704.5 355.8M708.2 348.5L710.8 348.5M726.1 352.5L728.7 352.5M712.5 309.3L712.5 313.6M667.5 300.3L667.5 306.4M684.1 296.5L691.1 296.5M699.5 275.2L699.5 279.2M703 318.5L705.6 318.5M704.5 358.4L704.5 362.2M722.9 377.5L725.8 377.5M733.5 379.1L733.5 381.2M721.1 381.5L725.3 381.5M760.5 359.6L760.5 366.5M762.5 379.5L765.5 379.5M776.8 374.5L779.4 374.5M765.1 383.5L767.2 383.5M665.5 292.2L665.5 296.1M685.5 327.3L685.5 331.4M667.5 297.5L667.5 300.1M696.4 286.5L698.5 286.5M738.5 328.4L738.5 333.3M682.5 341.5L682.5 346.4M713.5 291L713.5 294.1M770.5 386.5L774.4 386.5M724.9 322.5L727.3 322.5M730.5 384.5L730.5 390.6M771.5 378.2L771.5 383.6M723.2 329.5L726.3 329.5M758.5 358.8L758.5 363.9M712.5 300.8L712.5 306M699.5 324.9L699.5 329M725.7 335.5L727.8 335.5M673.1 288.5L678.9 288.5M684.5 326.9L684.5 333M727.5 329.9L727.5 335.9M684.8 338.5L690.2 338.5M705.9 270.5L710.1 270.5M730.5 321.5L732.9 321.5M717.3 298.5L724.1 298.5M679.4 320.5L681.5 320.5M719.1 312.5L722.1 312.5M694.7 333.5L698.2 333.5M710.5 353.6L710.5 360.4M685.4 334.5L690.5 334.5M737.7 323.5L741.6 323.5M706.3 311.5L713.2 311.5M696.5 369.7L696.5 374.2M684.5 345.5L684.5 347.6M694.5 273.7L694.5 276.3M735.7 350.5L740 350.5M724.9 356.5L729.5 356.5M679.7 307.5L684.1 307.5M776.5 374.6L776.5 379.1M708.5 361.5L708.5 368.4M707.5 384L707.5 386M710.4 387.5L712.8 387.5M677.5 282.7L677.5 285.8M740.5 330.1L740.5 336.1M729.5 382.5L729.5 386M708.1 322.5L712.1 322.5M704.5 356L704.5 362.2M746.2 344.5L749.4 344.5M771.5 376L771.5 378.4M718.5 319.1L718.5 323.4M714.5 297.5L714.5 299.5M769.5 358.8L769.5 364.6M698.5 349.5L698.5 352.8M775.8 372.5L780.1 372.5M694.5 324L694.5 326.4M674.5 308.4L674.5 312M702.5 290.9L702.5 295.3M727.5 312.7L727.5 317.5M705.5 355.5L705.5 359.7M710.5 368.6L710.5 375.5M751.5 354.1L751.5 356.9M770 384.5L774.1 384.5M707.5 331.6L707.5 334.3M705.5 300L705.5 306.1M735.5 357.1L735.5 359.8M735.2 345.5L738.9 345.5M668.5 322.9L668.5 327.2M724.5 343.4L724.5 348.1M677.5 348.1L677.5 353.9M679.5 296.3L679.5 301.8M700.3 371.5L704.5 371.5M777 372.5L782.7 372.5M699.4 327.5L704.4 327.5M756.4 380.5L759.7 380.5M764.5 374.5L768.4 374.5M702.5 313.4L702.5 316.7M723.5 376.2L723.5 381.8M691.5 343.2L691.5 347.6M709.5 287.8L709.5 292.1M735 365.5L741.6 365.5M744.5 334.5L746.6 334.5M713.6 356.5L720.6 356.5M694.5 353.7L694.5 357.9M774.2 362.5L778.3 362.5M751.8 342.5L757.1 342.5M775.5 383.4L775.5 386M716.5 370.5L716.5 372.8M705.7 297.5L708.1 297.5M684.9 293.5L687.4 293.5M712 275.5L717.6 275.5M756.5 359.8L756.5 363.6M755.8 385.5L759.5 385.5M695.5 369.3L695.5 371.6M710 337.5L712.9 337.5M670.5 288.2L670.5 291.6M743.5 367.1L743.5 371.5M676.3 300.5L682.6 300.5M730.9 384.5L737.5 384.5M697.7 312.5L700.1 312.5M758.5 352.9L758.5 358.2M724.5 380.5L724.5 386.2M688.1 367.5L694.9 367.5M717.5 354L717.5 360.1M699.5 324.6L699.5 330.3M667.5 310.5L667.5 312.6M725.5 314.3L725.5 320.1M664.5 311.5L667.7 311.5M700.3 308.5L706.8 308.5M705.4 270.5L710.7 270.5M730.5 356.5L730.5 358.8M788 369.5L793.3 369.5M743.5 352.8L743.5 356M721.1 383.5L726.7 383.5M710.9 381.5L717.5 381.5M723.5 298.6L723.5 304M702.5 371.4L702.5 375.9M757.5 346.4L757.5 349.3M695.5 359.1L695.5 361.1M723.5 348.5L727 348.5M687.4 326.5L689.8 326.5M777.5 368.9L777.5 373.5M770.5 359.8L770.5 363.6M703.3 308.5L706.2 308.5M766.5 365.5L772.7 365.5M753.2 342.5L756.5 342.5M754.5 356.1L754.5 358.3M762.2 359.5L765.2 359.5M711.5 367.9L711.5 371.5M711.5 320.7L711.5 324.9M676.3 307.5L680.7 307.5M742.5 366.3L742.5 370.3" fill="none" stroke="#808080" stroke-width="0.85" />
<path d="M696.5 373L696.5 375.4M730.5 361.4L730.5 365.5M729.5 353.7L729.5 358.7M756.5 382.5L759.9 382.5M749.7 388.5L754.1 388.5M725.5 326.4L725.5 329.2M734.3 318.5L738.7 318.5M702.5 379.6L702.5 383.9M765.5 361.1L765.5 366.9M722.5 332.9L722.5 338.9M755.7 372.5L757.8 372.5M720.3 294.5L726 294.5M727.5 335.6L727.5 338.5M778.5 379.9L778.5 385.2M687.6 365.5L691.2 365.5M690.5 331.6L690.5 335.2M761.8 364.5L765 364.5M706.5 330.9L706.5 333.3M695.9 352.5L701.7 352.5M756.5 377.4L756.5 382.4M690.6 287.5L696.4 287.5M707.5 279.5L707.5 284.1M767.1 361.5L772.2 361.5M718.5 390.8L718.5 394.5M745 363.5L750.3 363.5M720.7 327.5L723.8 327.5M709.5 322.4L709.5 326.9M750.3 386.5L756.2 386.5M722.4 338.5L724.9 338.5M679.8 315.5L683.2 315.5M753.2 362.5L756.1 362.5M700.5 358.9L700.5 361.4M687.1 340.5L692.5 340.5M711.3 279.5L716.5 279.5M670.6 313.5L674.2 313.5M699.5 288.3L699.5 292.7M760.5 379.7L760.5 382.2M747.5 377.4L747.5 379.6M698.2 326.5L700.9 326.5M712.4 280.5L715.9 280.5M705.5 317.1L705.5 321.2M659.5 293.5L665.2 293.5M722.5 301.6L722.5 303.7M677.7 301.5L681.2 301.5M680.9 352.5L686.3 352.5M773.7 385.5L776.8 385.5M735.5 369L735.5 374.4M715.9 346.5L720.8 346.5M691.5 359.3L691.5 361.3M679.5 308L679.5 310.6M757.5 386.5L762.1 386.5M702.8 308.5L707.9 308.5M681.3 315.5L685.4 315.5M691.8 343.5L697.8 343.5M665.5 296L665.5 300.3M752.1 388.5L756.8 388.5M737.1 344.5L741.6 344.5M732.2 320.5L737.1 320.5M754.5 385.5L758.1 385.5M690.5 305L690.5 309.5M679.6 324.5L682.5 324.5M705.9 354.5L709.7 354.5M739 347.5L741.9 347.5M740.5 330.7L740.5 333.9M673.6 325.5L677 325.5M714.5 382.6L714.5 387.9M767.8 357.5L771.7 357.5M696.5 315.6L696.5 318.1M725.5 351.3L725.5 353.5M747.5 335.3L747.5 338.5M681.5 327.8L681.5 330.9M688.5 340.8L688.5 343.1M667.9 299.5L670.5 299.5M668.1 311.5L672.1 311.5M718.3 369.5L722.2 369.5M756.5 354.4L756.5 358.2M760.5 358.5L764.7 358.5M758.5 361.5L758.5 365.9M731.3 355.5L734.3 355.5M672.6 333.5L677.8 333.5M692.8 323.5L695.1 323.5M728.5 332L728.5 337.6M734.6 369.5L737 369.5M703.1 329.5L708.7 329.5M696.5 277.6L696.5 282.6M728.5 338.9L728.5 341.6M740.4 371.5L743.2 371.5M761.7 388.5L764 388.5M689.5 314.5L689.5 319.3M746 360.5L748.8 360.5M748.6 367.5L754.3 367.5M779.6 362.5L782.4 362.5M716.2 309.5L720.4 309.5M731.7 359.5L735.3 359.5M679.7 329.5L683.2 329.5M671.5 330.6L671.5 335.6M753.5 383.5L753.5 387.5M712.5 328.5L717.6 328.5M710.5 359.3L710.5 362.1M715.5 333.7L715.5 336.9M701.2 291.5L706.1 291.5M779.5 369.1L779.5 371.6M777.5 360.5L782.4 360.5M688.5 303.7L688.5 309.7M679 294.5L683.6 294.5M691.1 280.5L694.1 280.5M692.5 302.6L692.5 307M746.5 384.5L750 384.5M678.8 301.5L681.8 301.5M737.2 348.5L742.5 348.5M703.5 275.7L703.5 281.1M733.5 372.5L737 372.5M696.5 280.1L696.5 285.1M746.8 367.5L750.6 367.5M780.7 363.5L783.8 363.5M716.2 292.5L720.2 292.5M699.5 274.6L699.5 279.1M692.8 363.5L697.7 363.5M711.2 381.5L715.7 381.5M782.8 368.5L788.6 368.5M717.5 385.5L722.2 385.5M720.8 331.5L722.9 331.5M775.5 365.7L775.5 368.7M713.5 345.7L713.5 348.3M710 367.5L715.5 367.5M683.5 315L683.5 319.1M717.5 284.6L717.5 289.9M698.5 313.3L698.5 316.3M694.5 311.3L694.5 313.8M767.5 376.5L770.9 376.5M683.6 351.5L687.5 351.5M763.1 359.5L766.3 359.5M696.1 304.5L698.4 304.5M700.9 338.5L706.4 338.5M716.5 353.6L716.5 356.8M745.3 348.5L750 348.5M707.5 352.1L707.5 354.5M724.5 305.9L724.5 308.7M705.5 325.5L705.5 328.2M771.6 364.5L773.8 364.5M703.5 350.5L709.4 350.5M671.5 323.7L671.5 329.1M777.6 369.5L782 369.5M688.5 318.3L688.5 323.8M698.8 359.5L701.4 359.5M731.8 385.5L733.8 385.5M700.3 298.5L704.2 298.5M719.1 315.5L722 315.5M689.5 366.4L689.5 372M731.5 309.2L731.5 311.7M710.5 346.5L713.4 346.5M671.5 325.3L671.5 331.3M702.5 274.9L702.5 277.3M693.5 345.9L693.5 348.7M756.5 381.6L756.5 386.7M672.5 314.2L672.5 318M765.9 385.5L768.6 385.5M733.5 318.7L733.5 323.2M756.5 350.5L756.5 352.6M699.5 303.6L699.5 307.2M697.6 363.5L703.6 363.5M672.5 297.5L672.5 303.4M673.5 303.4L673.5 307.5M675.6 341.5L680.7 341.5M695.5 343.1L695.5 347.9M749.5 364.6L749.5 367.3M665.5 303.6L665.5 308.1M683.4 298.5L685.6 298.5M703.5 349.7L703.5 354.9M701.5 299.9L701.5 305.8M705.5 378.2L705.5 382.8M686.5 314.9L686.5 319.4M725 355.5L727.3 355.5M698.5 362.5L702.5 362.5M739.5 321.1L739.5 323.3M703.5 346.1L703.5 348.4M737 387.5L739.7 387.5M673.5 289.5L673.5 292.2M729.9 384.5L734.6 384.5M721.9 367.5L727 367.5M742.7 367.5L748.1 367.5M729.6 319.5L735.3 319.5M701.4 320.5L705.5 320.5M682.2 357.5L687.9 357.5M752.4 345.5L758.3 345.5M727.4 377.5L731 377.5M709.5 341.5L715.3 341.5M687.1 300.5L689.9 300.5M733.1 363.5L736.2 363.5M756.7 360.5L761.8 360.5M712.2 279.5L717.2 279.5M763.1 387.5L766.4 387.5M755.8 380.5L761.5 380.5M689.5 346.8L689.5 352.1M690.9 317.5L695.1 317.5M691.5 337L691.5 340.3M744.5 375.3L744.5 380.7M745.5 359.8L745.5 365.3M680.5 317.7L680.5 321.9M728.5 307L728.5 311.1M691.5 322.8L691.5 327.1M738.4 358.5L740.9 358.5M724.9 375.5L729.4 375.5M690.6 279.5L693.4 279.5M700.5 376.5L705.1 376.5M683.7 339.5L688.9 339.5M745.5 328.6L745.5 330.8M684.5 327.2L684.5 330.3M719.5 365.3L719.5 371.1M714.5 385.9L714.5 391M719.1 305.5L724.4 305.5M672 291.5L677 291.5M670.5 322.5L675.8 322.5M714 328.5L717.6 328.5M720.5 328.5L724.7 328.5M680.6 342.5L682.7 342.5M702.5 332L702.5 334.3M726.1 382.5L729.6 382.5M678.5 336.7L678.5 338.9M717.4 311.5L723 311.5M714 367.5L719.7 367.5M753.5 364.1L753.5 370M720.4 335.5L725.3 335.5M716.5 358.1L716.5 361.2M674.5 292.6L674.5 298.5M687.5 344.1L687.5 349.2M738.5 384.5L742.5 384.5M698.5 293.9L698.5 299.5M694.5 317.4L694.5 322.7M725.5 324.2L725.5 329.7M677.2 311.5L681.1 311.5M720.1 323.5L724.2 323.5M669.3 309.5L671.6 309.5M684.7 312.5L690.1 312.5M753.9 358.5L757.5 358.5M724.1 340.5L726.3 340.5M682.3 288.5L687.3 288.5M680.5 319.8L680.5 324.3M689.5 355.2L689.5 359.2M684.5 324.5L684.5 329.5M698.6 369.5L701.6 369.5M715.5 363.8L715.5 368.9M743.4 354.5L747.1 354.5M709.6 337.5L713.6 337.5M743.5 335.3L743.5 338.3M692.5 371L692.5 374.8M685.5 323.7L685.5 327.3M754.2 375.5L758.1 375.5M685.1 323.5L688.3 323.5M668.2 307.5L670.6 307.5M718.4 322.5L720.5 322.5M704.5 274.1L704.5 278.1M712.6 319.5L715.9 319.5M748.5 333.9L748.5 337.8M733.5 350.5L733.5 353.1M746.5 372.2L746.5 377.4M697.5 300.7L697.5 303.2M678.6 344.5L680.9 344.5M681.5 325L681.5 328.8M673.5 327.9L673.5 332" fill="none" stroke="#808080" stroke-width="2" />
<path d="M669.5 315.5L669.5 318.9M695.8 327.5L700.3 327.5M721.7 327.5L723.9 327.5M750.5 336.2L750.5 340.1M745.5 363.6L745.5 368.1M688.4 317.5L691 317.5M747.5 372.5L749.8 372.5M711.5 320.5L711.5 322.8M698.5 359.6L698.5 364.1M718.2 325.5L721.3 325.5M740.8 385.5L744.7 385.5M768.9 378.5L771.2 378.5M727 318.5L731.4 318.5M760.5 383.5L764.8 383.5M683.5 289.5L686.4 289.5M740.5 333.6L740.5 336.9M739.5 329.5L739.5 332M668.5 314.3L668.5 317.2M698.5 293.7L698.5 296.9M704 376.5L708.9 376.5M739.5 332.9L739.5 337.2M747.5 357.3L747.5 359.6M680 300.5L683.4 300.5M702.5 374.6L702.5 377.8M690.2 366.5L693.8 366.5M666.5 312.4L666.5 316.4M713.5 365.9L713.5 369.9M756.5 350.4L756.5 355.3M693.5 321.2L693.5 325.3M761.3 376.5L764.7 376.5M734.5 333.9L734.5 337.3M709.5 316.5L709.5 319M711.7 350.5L714.8 350.5M703.5 315.3L703.5 319.9M701.5 349.1L701.5 352.2M706.5 361.5L708.8 361.5M714.5 354.7L714.5 357M706.4 360.5L711.3 360.5M758.5 384.8L758.5 388.6M704.9 341.5L708.4 341.5M682.5 313.5L687.1 313.5M677.5 334.8L677.5 338.2M698.5 296.5L702 296.5M747.2 381.5L752 381.5M704.5 319.3L704.5 322M741.8 388.5L744.5 388.5M711.5 307.7L711.5 310.8M751.5 343.6L751.5 346.5M701.5 275L701.5 279.9M682.2 354.5L687.1 354.5M661.2 292.5L665.9 292.5M712.5 281L712.5 285M761.8 359.5L763.9 359.5M760.8 374.5L763.6 374.5M754.3 370.5L758.2 370.5M689.5 287.6L689.5 290.8M693.5 359.7L693.5 362.8M772.5 356.7L772.5 359.4M708.3 379.5L712.1 379.5M726.5 359.2L726.5 363M742.5 364L742.5 367M759.2 351.5L762.7 351.5M700.8 378.5L705.2 378.5M705.7 345.5L709.4 345.5M708.5 283.5L708.5 286.5M666.1 292.5L668.5 292.5M679.7 286.5L683.7 286.5M731.5 388.6L731.5 391M698.5 308.5L698.5 313.2M764.3 385.5L768.6 385.5M706.5 268.5L710.2 268.5M777.5 366.7L777.5 369.6M751.7 384.5L755.3 384.5M683.5 338.4L683.5 340.9M709.5 385.5L712.4 385.5M705.5 319.8L705.5 323M700.5 306.2L700.5 310M728.5 363.3L728.5 365.7M700.2 301.5L703.8 301.5M694.5 317.8L694.5 322.5M763.5 382.1L763.5 386.4M663.4 304.5L666.8 304.5M764.5 388.3L764.5 390.5M670.8 287.5L675.1 287.5M667.3 319.5L672.1 319.5M692.6 345.5L695.7 345.5M765.5 356.7L765.5 360.4M723.5 323.8L723.5 327.5M728.7 326.5L732.5 326.5M689.5 356.4L689.5 360M678.7 334.5L683.5 334.5M752.5 358.9L752.5 363M721.5 352.6L721.5 356.4M728.5 363L728.5 365.8M755.5 345.8L755.5 350.5M694.1 291.5L697.8 291.5M733.5 376.5L733.5 381M716.9 319.5L720 319.5M665.4 289.5L670.1 289.5M738.5 363.2L738.5 365.3M705.5 358.4L705.5 363M712.5 363.5L712.5 366.7M755.5 362.6L755.5 364.8M712.5 380L712.5 383.1M718.2 309.5L721 309.5M767.7 367.5L771.4 367.5M756.5 351.5L761.4 351.5M715 348.5L718.1 348.5M709.5 372.2L709.5 376M711 278.5L713 278.5M685.3 361.5L688.8 361.5M677.5 290.4L677.5 294.1M726.9 345.5L729.5 345.5M730.5 383.8L730.5 387.7M737.5 329.5L739.9 329.5M731.5 348.1L731.5 350.3M740.5 365.3L740.5 370.2M699.8 312.5L702.5 312.5M717.5 330.6L717.5 334.7M719.2 384.5L722.3 384.5M689 292.5L691.8 292.5M689.1 336.5L692.3 336.5M709.5 320.5L709.5 323.8M754.5 350.3L754.5 354.3M713.5 353.2L713.5 355.9M714.5 338.5L714.5 343M691.9 317.5L694 317.5M718.8 311.5L723.6 311.5M695.4 367.5L699.8 367.5M765.3 354.5L769.2 354.5M691.5 283.5L691.5 287.5M716.9 337.5L721 337.5M694.5 301.7L694.5 304.8M721.5 358.6L721.5 361.4M697.5 300.6L697.5 302.9M735.1 353.5L737.5 353.5M690.6 291.5L692.9 291.5M754.5 369.5L754.5 372M706.5 305.9L706.5 309.2M724.5 346L724.5 348.8M725.5 345.5L727.9 345.5M707.5 374.5L707.5 376.7M662.5 297.3L662.5 301.2M723.7 370.5L727.2 370.5M696.5 338.2L696.5 340.5M663.5 291.8L663.5 295.2M706.4 378.5L711.3 378.5M729.5 351.2L729.5 356.1M742.5 368.9L742.5 371.3M696.5 357.8L696.5 360.1M684.7 325.5L689.2 325.5M716.5 306.1L716.5 308.8M738.8 322.5L743 322.5M674.5 339.3L674.5 343.2M717.5 332.6L717.5 336.5M701.5 361.5L701.5 363.9M743.8 370.5L746.4 370.5M739.5 364.7L739.5 366.8M693.6 301.5L698.4 301.5M684.5 312.6L684.5 317.5M702.5 358.2L702.5 360.7M673.5 324L673.5 327.5M726.5 362.6L726.5 365.6M705.5 310.6L705.5 313.8M685.5 332.2L685.5 335M711.7 378.5L714.2 378.5M761.3 369.5L765.6 369.5M688.5 319.6L688.5 322.1M676.7 336.5L679.6 336.5M704.5 354L704.5 358.1" fill="none" stroke="#000" stroke-width="1.6" />
<path d="M721.5 338.9L721.5 343.1M714.4 323.5L717.6 323.5M706.5 303.4L706.5 309.3M690.5 318.4L690.5 321.4M714.5 333.8L714.5 339.3M700.5 354L700.5 358.5M702.5 328.5L706.3 328.5M738.2 340.5L743.2 340.5M731.4 371.5L734.7 371.5M700.5 326.3L700.5 332M747.5 341.5L753.2 341.5M699.5 303.1L699.5 306.2M719.5 373.5L722.1 373.5M690.8 357.5L694.6 357.5M741.5 350.8L741.5 356.8M698.7 367.5L702.2 367.5M696.9 343.5L702.6 343.5M736.1 350.5L740.8 350.5M710.3 348.5L713.9 348.5M724.1 329.5L729 329.5M731.5 316.7L731.5 321M695 325.5L699.7 325.5M767.5 354.5L770.9 354.5M693.5 318.4L693.5 321.7M718.5 348.2L718.5 350.2M760.5 345.7L760.5 350M692.5 314.4L692.5 318.4M734.5 355.7L734.5 361.3M694.5 327.6L694.5 331.8M702.5 321.9L702.5 327.5M691.5 364.3L691.5 368.4M716.5 331.9L716.5 335M704.1 345.5L708.7 345.5M764.5 355.2L764.5 358.2M701.4 355.5L706.8 355.5M763.5 373.9L763.5 377.6M709.5 363.7L709.5 367.8M714.5 337.5L717.2 337.5M704.5 312.6L704.5 314.8M712.7 331.5L715.3 331.5M713.6 306.5L716.8 306.5M699.5 334.3L699.5 337M690.5 303.8L690.5 306.3M696.5 372.1L696.5 376.2M734.5 349.3L734.5 353.6M717.5 325.6L717.5 331.4M720.7 325.5L723 325.5M699.6 325.5L701.8 325.5M733.5 332.6L733.5 335.7M717.1 361.5L721.8 361.5M702.2 334.5L705.5 334.5M743.5 334.7L743.5 339.2M759.5 346.5L759.5 349.6M719.7 324.5L723.3 324.5M716 321.5L721.6 321.5M707.7 363.5L710.5 363.5M756.5 370.8L756.5 375.6M727.9 363.5L730.4 363.5M728.3 345.5L734.1 345.5M723.2 303.5L727.8 303.5M732.5 364.2L732.5 366.7M736.5 332.7L736.5 337.8M726.1 371.5L731.1 371.5M698.5 303.9L698.5 308.2M741.2 355.5L746.5 355.5M731.5 348.7L731.5 353.4M745.5 364.3L745.5 368.6M693.5 321.2L693.5 326.8M722.5 316L722.5 318.5M715.5 318.7L715.5 322M769.5 374.6L769.5 379M728.4 331.5L734.2 331.5M694.5 332.7L694.5 335.5M705.5 327L705.5 332.4M769.5 366.8L769.5 369.5M752.3 349.5L756.1 349.5M717.2 335.5L723.1 335.5M730.6 333.5L733.4 333.5M741.4 356.5L747.1 356.5M719.5 308L719.5 310.1M757.5 356.7L757.5 362.3M716.5 327.1L716.5 331M753.5 351.6L753.5 356.1M692.5 333.1L692.5 336.5M746.8 368.5L751.5 368.5M699.5 348.6L699.5 352.5M694.5 343.6L694.5 349.1M760.2 348.5L764.9 348.5M694.5 338.2L694.5 342.5M711.5 338L711.5 342.9M732.5 374.5L738.4 374.5M729.5 321.2L729.5 326.1M721.6 307.5L724.9 307.5M752.5 346.6L752.5 351.3M709.6 353.5L714.9 353.5M710.5 303.1L710.5 308.1M692.5 373.5L695.6 373.5M760.7 364.5L763.7 364.5M711.9 320.5L715.6 320.5M717.5 323.3L717.5 326M744.9 367.5L748.9 367.5M716.5 315.6L716.5 320.6M709.5 310.4L709.5 314.5M695.5 365.2L695.5 370.3M765 362.5L769.4 362.5M749.9 353.5L752 353.5M718.5 323.7L718.5 328.3M710.5 304.2L710.5 307.3M732.9 366.5L737.4 366.5M691.5 332.4L691.5 335.5M750.5 366.6L750.5 372.2M704 363.5L708.3 363.5M709.7 356.5L713.3 356.5M716.9 331.5L722.1 331.5M761.5 354.8L761.5 358.6M712 357.5L715.8 357.5M695.9 327.5L701.8 327.5M722.4 342.5L726 342.5M715.5 340.2L715.5 344.9M694.5 346L694.5 348.9" fill="none" stroke="#808080" stroke-width="2.6" />
<path d="M743.5 336.8L743.5 340.2M751.5 362.5L751.5 365.5M722.5 308.2L722.5 312.6M713.5 339L713.5 343.2M716.7 340.5L721.8 340.5M712.8 363.5L715.2 363.5M767.4 382.5L771.5 382.5M758.5 349.5L758.5 354.6M765.5 358.2L765.5 362.3M703.5 366.4L703.5 372.4M722.5 359.6L722.5 365.2M712 371.5L715.1 371.5M703.7 363.5L709.2 363.5M740.9 340.5L746.5 340.5M778.5 374L778.5 376.7M723.5 348.1L723.5 353.3M756.5 367.3L756.5 369.7M743.5 353L743.5 357.4M757.8 379.5L763.7 379.5M713.5 377.7L713.5 381.9M724.6 309.5L727.6 309.5M765.7 354.5L770.2 354.5M710.3 334.5L712.6 334.5M761.8 360.5L766.1 360.5M741.5 362.6L741.5 364.8M726.5 304.5L726.5 306.8M767.5 366.6L767.5 370.6M775.2 377.5L779.6 377.5M709.5 358.6L709.5 363.5M713.5 325.3L713.5 328M701.2 330.5L706.1 330.5M714.6 306.5L717.8 306.5M700.9 332.5L706.2 332.5M746.5 346L746.5 351.1M702.5 308.6L702.5 313.6M740.5 356.7L740.5 360M742.5 356.1L742.5 359M771.5 369.6L771.5 372M728.4 312.5L732.2 312.5M733.4 340.5L737.3 340.5M714.5 381.2L714.5 385.4M718.5 337L718.5 339.7M719.5 333.5L725.3 333.5M733.9 360.5L738.5 360.5M725.4 344.5L728.5 344.5M704.3 300.5L706.6 300.5M704.4 377.5L708.8 377.5M716.5 331L716.5 336.5M721.1 385.5L725 385.5M716.5 317.5L716.5 321.4" fill="none" stroke="#a04848" stroke-width="0.85" />
<path d="M803.9 339.1L798.8 341M781.3 335.4L776.3 339.8M799.5 355L804.2 355.9M795.2 379.6L798.6 386.7M793.5 360.7L789.2 362.5M802.8 342.2L799.8 348.7M834.3 347.6L832.2 350.2M829.9 342.5L832.1 347.8M798.4 362.1L796.3 367.8M814.1 346L806 346.7M792.2 346.2L795.9 347.1M822.4 341.8L830.5 342.8M797.4 367.8L788.8 370.1M776.5 373.8L782.2 375.5M840.9 338.4L838.6 343M790.9 338L788.9 342.4M775.9 368L770.7 369.2M825.2 351.7L824.4 355M822.7 350.8L823.6 355.4M801 358.6L804.9 366.2M784.4 339.4L775.6 340.4M826.8 347.7L824 349M813.3 339.4L809.8 344.5M816.7 355.2L813 359.5M769.3 360.4L767.4 368.5M773.1 370L779 372.2M760.8 364.9L760.3 368.8M827.9 349.4L831.8 352.8M769.7 392.8L773.2 394.2M774.2 357.3L768.1 358.7M766.9 338.3L761.1 339.1M790.1 346.3L787.2 347.6M797.2 366.7L801.3 367.7M788.2 357.8L792.8 361.2M799.8 338.6L803.6 338.8M785.4 354L781.5 358.4M775 346.1L781 352.2M787.7 379.1L796.2 381.2M785.9 384.3L782 391.9M810.5 338L807.4 342.6M765 387.5L762 388.7M799.2 361.2L803 365M788.9 358.7L794 363.5M850.4 338.7L852.8 344.1M764.7 344.5L769.7 350M794.4 351.3L795.7 354.9M767.6 363L764.6 370.5M791.6 372.9L789.8 380.4M780.3 380.3L778.5 384.8M776 395.2L772.4 401.3M805.3 343.8L806.2 349M819.6 337.2L827.2 338.3M782 389.2L788.8 393.9M784.8 386.4L779.7 387.1M774.4 390.1L781.1 393.5M767.6 344.8L763.4 346.9M783.5 335.6L786.4 337.1M777.4 344.6L779.1 347.7M785.7 366L786.3 370.6M806.9 340.6L805.5 344.7M804.7 371.6L802.9 379.1M782.8 349.3L777.2 355.4M811.6 347.2L818.1 352.2M761.6 338.7L763.3 342M798.2 369.3L793.1 372.1M760.8 370.3L760.9 375.5M797.8 337.8L798.6 340.8M797.7 344.4L794.1 345.5M817.1 351.4L818.8 355.8M762 369.3L767.5 371.5M792.5 351.5L793.2 358.8M834.1 346.4L829.1 346.8M779.4 350.1L778.5 358.1M763.1 346L771.6 348.3M783.2 340L787.5 343.8M833.5 339.2L826.4 340M787.6 361L780.2 366.1M814.3 366.5L815.8 369.5M815.8 342.9L816.5 351.6M766.7 362L759.4 364.2M782.3 369.8L783.5 375.3M774.1 348.5L776.6 354.1M803.4 360.7L803.5 367.4M785 346.8L783.1 349.9M803.4 356.3L811.1 360.5M801.2 373.2L794.6 374.8M779.2 390.8L781.4 393.2M828.1 348.9L822.3 353M760.2 374.4L765.6 377.2M810.4 370.7L806.7 376.2M772.2 384.2L776.6 390M780.9 378.5L783 384.7M816.2 339.7L810.9 341.5M771.2 391.8L772 395.6M838.7 337L845.1 338.8M815.1 366.9L818.2 369.3M832.4 347.6L831.2 352.4M795.3 357.5L795.2 363.6M785.2 347.8L781.9 348.8M762.8 361.7L770.1 365.9M791.9 337.2L795.8 337.8M788.8 382.4L787.9 389.6M764.9 365.7L764.2 370.2M781.4 349.9L775.5 351.4M805.7 372.8L806.8 379.7M763.5 398.6L764.7 405.3M825.1 356.9L826.5 362.8M763.9 354.2L769.6 357.9M765.4 346.8L765.4 351.8M780.9 393.8L788.4 398.4M782.5 339.2L780 343.1M785.5 372L789 374.3M785.2 373.9L784.2 379.6M798.3 373.7L795 378.8M845.9 339.9L843.2 342.8M818 343.9L814.3 350.4M816.7 357.8L813.1 361.6M778.8 345.6L780 351.1M807.1 348.5L813.6 352.8M844.4 343L848.1 345.2M822.4 338.5L827.9 338.6M776.5 362.4L771.8 363.5M818.5 336.7L821.4 340.1M775.5 370.5L780 376.1M802 338.8L798.6 344.2M777.2 342.2L778.5 346.5M824.5 335.4L828.5 338.1M832.4 339.5L833.1 343.1M790.7 356L783.6 356.8M789.8 348L793.9 350.3M770.6 387.9L776.5 394.1M824.8 358.7L828.2 360M815 349.4L813.9 352.9M762.7 395.8L768.8 400.7M814.7 365.8L820.6 370.5M789.5 381.6L787.7 386.8M783 353.6L786.2 355.4M834.9 345.7L832 349.3M770.9 365.2L767.4 373.3M788.1 347.8L780.6 349.8M766.3 359.4L769.5 360.7M823.8 347.8L827.2 354.5M815.5 359.4L816.8 367.3M792.3 340.7L798.3 342.7M773.9 390.5L768 395.8M772.2 383.8L768.6 384.6M800.8 344L801 348.7M779.6 374.1L785.4 379.3M782.1 358.1L786.7 365.6M808.6 337.3L815.5 339.3M801.6 360L797.2 365.2M830.7 339.3L825.2 340.8M830.7 343L828.7 347.5M780.8 339.3L775.9 342.5M782.5 373.9L780.9 380M769.4 343L769.3 346.9M771.1 337.9L772.9 340.6M764.4 395L766.3 398.5M816.8 337.1L819.5 341.1M763.5 392.7L765.3 395.5M781.5 361.7L779.1 369.1M830.5 351.8L831.6 354.8M804.8 355.5L798.7 355.6M797.3 362.4L797 368.3M772.5 395.9L772.8 399.7M799.4 339.8L795.5 343.9M780.1 343.4L773.9 347.3M787.1 384.1L791 387.9M765.6 398.3L768.9 402.9M763.7 383.4L764.3 389.8" fill="none" stroke="#808080" stroke-width="0.85" />
<path d="M667.5 311.8L663.1 312.3M658.4 341.1L658.6 344.3M652.6 317.2L649.3 322.9M654.2 358.8L651.8 366.2M663.6 311.9L667.1 319.1M666.8 319.8L665.7 322.6M653.8 323.4L653.5 332.4M688.6 329.9L686.5 335.5M694.8 319.5L699.2 321.4M685.2 340.4L691.3 342M679.3 324.7L684.5 327.7M658.7 327.2L661.2 334.6M660.2 335.5L666.4 341.9M687.6 335.8L686 341.1M654.6 348.4L661.2 349.5M668.1 322.8L665.1 329.7M669.2 369.7L667.7 373.8M650.3 362.2L656.1 362.8M693.6 356.9L693.7 361.6M650.6 327.8L655.3 329.3M679.9 296.7L678.5 303.7M699.2 360.2L702.9 366.6M662.6 320.4L661.3 324.1M658.6 321.2L653.2 325.6M687.8 324.5L682.5 326.9M686.7 356.9L682.9 360.1M693 352L688.9 353.2M675.9 329.9L673.2 337.2M667.5 344.7L665.9 348.6M689 320.5L685.8 323.7M698.4 305.9L694.7 308M656.6 317.9L656.3 325.1M668.2 351.4L668.7 356.9M699.3 365.3L701.3 373.7M678.6 319.1L680.2 324.3M684.3 320.5L692 321.6M689.4 309.4L685.8 310.2M668.3 363.7L671.9 368.6M696.8 308.4L697.9 313.2M675.5 348L674.4 352.5M664.1 341.6L665.3 345.5M657.6 329.8L662.6 330.1M688.4 323.7L695.4 327.5M654.6 329.7L651.5 336.7M686 325.9L678.5 329.2M678.3 334L682.6 341.6M673.2 325.8L670.2 326.3M685.5 302.3L686.5 308.9M684 315.3L678.3 320.1M676.7 316.4L683.2 319.1M691.5 305.6L694.3 313.4M683.5 334.5L679 340.2M696.4 322.1L696.5 326M699.4 350.3L699 355.7M696.3 329.5L694 333.2M672.6 359.6L669.3 364.4M651.1 331.9L657.5 337.3M695 320.2L693.2 328.7M673.8 357.6L665.5 359.9M668.3 361.3L666.9 369.5" fill="none" stroke="#808080" stroke-width="0.85" />
<path d="M755.5 215 L755.5 251" fill="none" stroke="#a04848" stroke-width="3" />
<path d="M767.5 213 L767.5 259" fill="none" stroke="#a04848" stroke-width="3" />
<path d="M755.5 215 L765.5 213 L792 223" fill="none" stroke="#a04848" stroke-width="2" />
<path d="M792 223 L793.5 255" fill="none" stroke="#a04848" stroke-width="2.5" />
<path d="M757.5 218 L765.5 216" fill="none" stroke="#a04848" stroke-width="0.85" />
<path d="M769.5 218 L791.5 227" fill="none" stroke="#a04848" stroke-width="0.85" />
<path d="M781.5 220 L782.5 275" fill="none" stroke="#a04848" stroke-width="0.85" />
<path d="M767.5 259 L793.5 273 L793.5 255" fill="none" stroke="#a04848" stroke-width="1.19" />
<path d="M786.5 223 L787.5 285" fill="none" stroke="#a04848" stroke-width="0.85" />
<path d="M793.5 255 L797.5 293 L785.5 301" fill="none" stroke="#a04848" stroke-width="1.19" />
<path d="M767.5 259 L769.5 291" fill="none" stroke="#a04848" stroke-width="1.6" />
<path d="M762.5 225 L763 242" fill="none" stroke="#809030" stroke-width="2" />
<path d="M772.5 225 L775.5 237 L773.5 245" fill="none" stroke="#60a040" stroke-width="1.8" />
<path d="M777.5 229 L776.5 243" fill="none" stroke="#809030" stroke-width="1.5" />
<path d="M806 240 L806 276" fill="none" stroke="#a04848" stroke-width="3" />
<path d="M818 238 L818 284" fill="none" stroke="#a04848" stroke-width="3" />
<path d="M806 240 L816 238 L842.5 248" fill="none" stroke="#a04848" stroke-width="2" />
<path d="M842.5 248 L844 280" fill="none" stroke="#a04848" stroke-width="2.5" />
<path d="M808 243 L816 241" fill="none" stroke="#a04848" stroke-width="0.85" />
<path d="M820 243 L842 252" fill="none" stroke="#a04848" stroke-width="0.85" />
<path d="M832 245 L833 300" fill="none" stroke="#a04848" stroke-width="0.85" />
<path d="M818 284 L844 298 L844 280" fill="none" stroke="#a04848" stroke-width="1.19" />
<path d="M837 248 L838 310" fill="none" stroke="#a04848" stroke-width="0.85" />
<path d="M844 280 L848 318 L836 326" fill="none" stroke="#a04848" stroke-width="1.19" />
<path d="M818 284 L820 316" fill="none" stroke="#a04848" stroke-width="1.6" />
<path d="M813 250 L813.5 267" fill="none" stroke="#809030" stroke-width="2" />
<path d="M823 250 L826 262 L824 270" fill="none" stroke="#60a040" stroke-width="1.8" />
<path d="M828 254 L827 268" fill="none" stroke="#809030" stroke-width="1.5" />
<path d="M755.6 263.6L751.7 277.9M733.5 261.9L726.2 281.2M746.9 259.9L736.8 289M747 275L737.7 294.3M740 278.3L725.1 308.2M759.5 285.4L754.8 300.6M734.9 260.6L730.2 277M749.8 277.3L741.4 297.4M730.1 284.1L721.3 302.7M738.3 261.4L732.3 282.3M752.7 261.1L745.3 285.5M727 282L716.9 310.2M743.1 281.9L735.8 297.3M730.2 267.5L722.3 284.4M743.3 278.6L736.5 298.3M760.4 264.9L751.8 293.6M760.3 272.4L753.6 296.5M755.7 279.4L745.9 310.3M730.4 256L724.5 278.2M731.2 279L724.9 298.9M751.6 280.4L745 298.3M730.5 272.8L725.4 292.8M755.4 271.4L749.7 287.2M733.2 278.8L723 302.6M741.5 285.3L727.1 317.3M731.5 261L725.1 275.7M739.2 262.2L732.6 281.8M763.8 271.2L751.5 300.1M738.2 278.4L726.6 306.3M734 283.1L719.4 313.5M728.9 277.2L718.3 300.2M750.2 260L739.6 291M762.2 272.9L753.4 297.5M726.1 285.9L715.6 308.5M738.3 283.2L726.8 308M738.6 281.6L732.7 298.5M722.7 260.7L711 291.2M752.3 271.7L741.3 299M724 261.4L711.9 292.8M746.1 258.8L739.2 276.7M739.9 279.8L730.4 299.7M749.7 256.2L742.6 274.6M736.3 266.5L726.2 292M741 282.9L734.3 305.5M738.2 270.2L729.9 298.1M762.3 261.5L752.8 281.3" fill="none" stroke="#1ca87c" stroke-width="0.85" />
<ellipse cx="737.5" cy="268.3" rx="17" ry="6" transform="rotate(24 737.5 268.3)" fill="none" stroke="#1ca87c" stroke-width=".85"/>
<ellipse cx="733.2" cy="277" rx="16.3" ry="6" transform="rotate(24 733.2 277)" fill="none" stroke="#1ca87c" stroke-width=".85"/>
<ellipse cx="728.8" cy="285.6" rx="15.7" ry="6" transform="rotate(24 728.8 285.6)" fill="none" stroke="#1ca87c" stroke-width=".85"/>
<ellipse cx="724.5" cy="294.3" rx="15" ry="6" transform="rotate(24 724.5 294.3)" fill="none" stroke="#1ca87c" stroke-width=".85"/>
<ellipse cx="720.2" cy="303" rx="14.3" ry="6" transform="rotate(24 720.2 303)" fill="none" stroke="#1ca87c" stroke-width=".85"/>
<ellipse cx="715.8" cy="311.6" rx="13.7" ry="6" transform="rotate(24 715.8 311.6)" fill="none" stroke="#1ca87c" stroke-width=".85"/>
<ellipse cx="711.5" cy="320.3" rx="13" ry="6" transform="rotate(24 711.5 320.3)" fill="none" stroke="#1ca87c" stroke-width=".85"/>
<path d="M727.5 262.3q-14 14 -16 38 M761.5 260.3q8 20 -4 46" fill="none" stroke="#1ca87c" stroke-width="1.02" />
<path d="M723.5 266.3q-12 14 -14 34 M766.5 264.3q6 18 -5 40" fill="none" stroke="#1ca87c" stroke-width="0.85" />
<path d="M786.3 283.7L777.2 306.5M804.9 293.2L799.6 309.7M781.8 304.2L774.3 323.3M813.7 285L801.5 311.9M775.1 282L766.6 312.2M816.6 299.5L810.1 316.5M809.1 282.2L798.4 307.9M775.3 283.2L767.6 301M779.1 300.6L770.6 319.3M775 278.4L769.7 296.8M817.4 302.5L806.4 331.6M791.7 284.8L783.7 300.7M810.2 294.9L799.7 323.7M789.4 287.9L775.2 317.3M805.3 299.6L795.5 323.3M816.8 301L805.5 331.4M784.9 277.4L770.2 308.9M777.6 283.4L766.5 314.4M809.3 281.7L798.2 306.1M807.9 284.8L797.9 316.5M786.8 296.2L773.1 327.2M786.7 277.2L780 302.1M792.8 278.2L785.1 295.3M813.6 281.2L801.4 307.7M818.7 278L811.4 301.4M776.6 297.3L769.3 312.9M775.6 307.3L769.4 323.1M783.9 296L777.5 321.3M813.4 297.5L803 321.5M812.8 307.5L803.4 335.6M799 304.2L792.6 328.3M776.4 308.9L767.1 331.5M779.7 282.2L769.7 304.9M772.8 284L765 307M774.6 277.6L763.1 302.1M778.7 293.9L768.8 316.3M812.6 305.6L806.6 321.6M808.4 293.5L802 309.4M809.8 299L801.9 322.3M778.1 303.1L772.7 317.9M799.5 301.7L791.3 323.1M781.4 286.1L774.8 308.4M772.3 279.5L765.2 296.2M785.9 279.8L779.7 296.2M797.3 306.9L787.4 336.2M794.1 293.2L783.7 314.4" fill="none" stroke="#1ca87c" stroke-width="0.85" />
<ellipse cx="789.3" cy="291" rx="17" ry="6" transform="rotate(24 789.3 291)" fill="none" stroke="#1ca87c" stroke-width=".85"/>
<ellipse cx="785" cy="299.7" rx="16.3" ry="6" transform="rotate(24 785 299.7)" fill="none" stroke="#1ca87c" stroke-width=".85"/>
<ellipse cx="780.6" cy="308.3" rx="15.7" ry="6" transform="rotate(24 780.6 308.3)" fill="none" stroke="#1ca87c" stroke-width=".85"/>
<ellipse cx="776.3" cy="317" rx="15" ry="6" transform="rotate(24 776.3 317)" fill="none" stroke="#1ca87c" stroke-width=".85"/>
<ellipse cx="772" cy="325.7" rx="14.3" ry="6" transform="rotate(24 772 325.7)" fill="none" stroke="#1ca87c" stroke-width=".85"/>
<ellipse cx="767.6" cy="334.3" rx="13.7" ry="6" transform="rotate(24 767.6 334.3)" fill="none" stroke="#1ca87c" stroke-width=".85"/>
<ellipse cx="763.3" cy="343" rx="13" ry="6" transform="rotate(24 763.3 343)" fill="none" stroke="#1ca87c" stroke-width=".85"/>
<path d="M779.3 285q-14 14 -16 38 M813.3 283q8 20 -4 46" fill="none" stroke="#1ca87c" stroke-width="1.02" />
<path d="M775.3 289q-12 14 -14 34 M818.3 287q6 18 -5 40" fill="none" stroke="#1ca87c" stroke-width="0.85" />
<path d="M728 273.4q-2.9 -0.9 -1.2 -4.2M721.5 279.9q5.7 -2.4 0.4 -4.3M714 288.4q-3 0.7 -3.8 -3.9M708.2 305.4q-0.8 5.7 -4.4 -0.7M733.1 290.4q2.4 0.5 -4.6 2.1M708.7 294.9q0.1 3.8 -2.3 3.8M705 288.5q-4.4 2.8 2.8 3.3M726 295.2q6 -3.8 -4.2 1.6M711.8 297.8q-0.8 0.8 -3.6 1.3M713.9 278.4q-0.5 2 -4.7 -2.3M711.6 302.3q-3.1 -4.6 2.4 2.7M725 308q-0.9 1.7 -5.9 -4.6M711.3 303.9q1.6 4.8 3.1 -0.3M713.3 282.8q-2.5 -2.3 -5.7 -1M726.2 314.3q5.2 5.3 7.4 -2.1M717.2 310.2q4.9 0.2 -4.2 -4.8M721.4 286.1q-0.4 1.6 5.7 -0.6M724 298q0.1 3 -4.4 0.3M723.7 303q-3.6 0.1 4.8 2.7M700.8 282.6q-1.8 3.5 -0.4 5M701.1 281.9q-1.8 0.1 3.9 3.2M711.5 309q-6.1 0.1 1.8 5.1M702.7 286.6q-2 -3.5 -4.6 -2.7M728.1 291.6q3 2.8 4.8 -6.1M722.9 317.8q5 -5.3 -5.4 2.5M723.4 268q-1.3 1.3 4 -1.6M727.9 300.7q-0.3 0.6 3.7 -4.8M719.4 295q1.4 0 -7.7 1.8M723.7 305.8q1.6 0.1 -6.1 -1.9M704.9 286.1q-5.9 -1.5 -6.5 -1.4M700.7 294.3q5.3 5.8 5.4 -5.3M710.5 314.3q4.7 -5.1 -0.5 -3.3M722.9 317.2q-0.4 0.7 -5.5 5.1M701.7 287.6q-3.1 -2.2 3.1 2.3M720.1 305.3q1.7 -3.5 3.7 3M719.9 307.1q-3.1 -0.6 -1 -5" fill="none" stroke="#1ca87c" stroke-width="1"/>
<path d="M764 338 L786 322" fill="none" stroke="#1ca87c" stroke-width="0.85" />
<path d="M769.2 340.8 L791.2 324.8" fill="none" stroke="#1ca87c" stroke-width="0.85" />
<path d="M774.4 343.6 L796.4 327.6" fill="none" stroke="#1ca87c" stroke-width="0.85" />
<path d="M779.6 346.4 L801.6 330.4" fill="none" stroke="#1ca87c" stroke-width="0.85" />
<path d="M784.8 349.2 L806.8 333.2" fill="none" stroke="#1ca87c" stroke-width="0.85" />
<path d="M790 352 L812 336" fill="none" stroke="#1ca87c" stroke-width="0.85" />
<path d="M764 338 L790 352" fill="none" stroke="#1ca87c" stroke-width="0.85" />
<path d="M769.5 334 L795.5 348" fill="none" stroke="#1ca87c" stroke-width="0.85" />
<path d="M775 330 L801 344" fill="none" stroke="#1ca87c" stroke-width="0.85" />
<path d="M780.5 326 L806.5 340" fill="none" stroke="#1ca87c" stroke-width="0.85" />
<path d="M786 322 L812 336" fill="none" stroke="#1ca87c" stroke-width="0.85" />
<ellipse cx="741" cy="274" rx="4" ry="5" fill="#000" stroke="none" stroke-width="1" />
<ellipse cx="750" cy="288" rx="4" ry="8" fill="#000" stroke="none" stroke-width="1" />
<ellipse cx="733" cy="296" rx="3" ry="5" fill="#000" stroke="none" stroke-width="1" />
<ellipse cx="794" cy="297" rx="4" ry="5" fill="#000" stroke="none" stroke-width="1" />
<ellipse cx="803" cy="312" rx="4" ry="8" fill="#000" stroke="none" stroke-width="1" />
<ellipse cx="786" cy="318" rx="3" ry="5" fill="#000" stroke="none" stroke-width="1" />
<path d="M778.9 252L773.6 259.3M792.1 244.2L787.8 251.5M779.7 233.8L775.4 244.3M781.1 247.4L777.8 254M778 233.1L772.3 243M773.4 233.6L769.9 239.8M770.4 252.7L765.9 262.3M772.2 236.4L767.5 244.7M774 233.6L768.9 242.4M777.1 244L773.9 250.6M791.6 235.7L786.8 243.1M777.4 227L773.5 237.2M790.6 239.9L786.5 246.5M784.1 253.2L779.6 261.1M824.1 251.9L819.1 262.5M825.3 252.7L819.7 259.2M835.7 268.2L829.9 275.6M830.9 257.2L827.5 264.2M841.6 260.6L836.8 270.8M834.7 257.9L829.4 264.5M838.7 259.4L835.7 269.5M841.5 262.9L837.4 272.3M841.4 246.3L838 253.6M822.7 248L819.5 258.9M833.9 269.7L830.8 277M827.5 254.9L822 260.9M795.7 276.4L793.9 291.7M799.6 287.9L798.5 298M817.9 301L816 309.3M761.2 277.6L758.3 288.3M770.8 320.2L767.9 330.3M790.2 313.3L788.9 328.6M784.2 284.6L781.7 296.9M800.1 290.4L796.6 305.5M795.9 293.6L792.8 305.2M769.1 287.5L767.4 302.6M799 278.3L797.3 289.8M788.9 278.7L785.2 294.6M810.2 321.7L808 335.8M828.1 299.3L824.2 309M779.3 316.6L777.9 325.2M800.9 324.4L797.9 336.6M831.7 299.3L827.8 312.7M784.1 336L783 346.9M823.5 322.1L821.1 331.3M837.5 282.5L835.5 295.5M799.4 308L797.2 323.9M835.6 331L834.5 346.4M823.9 281.9L820.3 296.9M781.5 310.8L779 325.3M825.2 324.4L824.2 338.5M796.9 327.8L795.2 341.2M800.2 287.5L796.8 300.4M760.2 285.8L757.4 295.6M802.9 281.3L801.8 295.6M826.3 297.8L824.9 310.3" fill="none" stroke="#20e0e8" stroke-width="1.02" />
<path d="M813.3 338.3L811.7 347.8M818.7 319.2L818.3 330.5M822.7 339.3L822.1 350.1M819.6 317.5L818.3 323.7M810.7 316.4L809.5 327.1M812 326.7L811.8 334.9M813.7 319.5L813.1 328.7M810.3 320.1L809.5 327.4M819.9 318.5L819.3 327.3M816.7 315.9L814.9 325.7M822.7 310.3L822 316.8M810.7 336.4L809.9 343.3M810.1 334.7L808.7 343.2M810.8 321.9L809.1 329.9M811.8 317L810.8 323.5M810.1 332.4L809.3 340.5M820.7 335.6L819.9 344.5M816.6 321.2L815.6 329.6M812.9 314.1L811.9 322.9M810.4 315.7L808.9 327.2" fill="none" stroke="#20f0ff" stroke-width="1.8" />
<path d="M747 271 L742 288 L737.5 305.6" fill="none" stroke="#ff2020" stroke-width="4.5" />
<path d="M731 274.4 L742 281" fill="none" stroke="#ff2020" stroke-width="2.5" />
<path d="M762.5 262.7 L748.4 272.8" fill="none" stroke="#ff2020" stroke-width="2.2" />
<path d="M800 293 L796 304 L792 316 L789 328" fill="none" stroke="#ff2020" stroke-width="4.5" />
<path d="M812.5 285.3 L800 294.7" fill="none" stroke="#ff2020" stroke-width="2.2" />
<path d="M784.4 299.4 L793.8 304" fill="none" stroke="#ff2020" stroke-width="2.5" />
<path d="M769 286 L772 304" fill="none" stroke="#e02020" stroke-width="2" />
<path d="M816 316 L821 334" fill="none" stroke="#e02020" stroke-width="2" />
<ellipse cx="730.5" cy="276.7" rx="1.8" ry="2.4" fill="none" stroke="#fff" stroke-width="1.8" />
<ellipse cx="750" cy="269" rx="1.8" ry="2.4" fill="none" stroke="#fff" stroke-width="1.8" />
<ellipse cx="715.6" cy="298.6" rx="1.8" ry="2.4" fill="none" stroke="#fff" stroke-width="1.8" />
<ellipse cx="725" cy="308.8" rx="1.8" ry="2.4" fill="none" stroke="#fff" stroke-width="1.8" />
<ellipse cx="781" cy="297.8" rx="1.8" ry="2.4" fill="none" stroke="#fff" stroke-width="1.8" />
<ellipse cx="800" cy="292" rx="1.8" ry="2.4" fill="none" stroke="#fff" stroke-width="1.8" />
<ellipse cx="766" cy="318" rx="1.8" ry="2.4" fill="none" stroke="#fff" stroke-width="1.8" />
<ellipse cx="776" cy="330" rx="1.8" ry="2.4" fill="none" stroke="#fff" stroke-width="1.8" />
<ellipse cx="787" cy="334" rx="1.8" ry="2.4" fill="none" stroke="#fff" stroke-width="1.8" />
<ellipse cx="743.5" cy="246.3" rx="16" ry="16" fill="none" stroke="#b0b0b0" stroke-width="1" />
<path d="M727.5 246.3A16 16 0 0 1 751.5 232.3" fill="none" stroke="#40ff00" stroke-width="2" />
<path d="M737.5 231.8A16 16 0 0 1 759.5 248.3" fill="none" stroke="#f0f020" stroke-width="1.6" />
<path d="M739.5 235.3A12 12 0 0 1 755.5 246.3" fill="none" stroke="#f0f020" stroke-width="1.02" />
<path d="M728.5 249.3A16 16 0 0 0 738.5 261.3" fill="none" stroke="#fff" stroke-width="3.2" />
<path d="M758.5 251.3A16 16 0 0 1 748.5 261.3" fill="none" stroke="#fff" stroke-width="2.8" />
<path d="M729.5 241.3l1 5" fill="none" stroke="#fff" stroke-width="2.5" />
<ellipse cx="744.5" cy="247.3" rx="9" ry="7" fill="none" stroke="#2020ff" stroke-width="2" />
<ellipse cx="743.5" cy="244.3" rx="11" ry="8" fill="none" stroke="#20d0d0" stroke-width="1" />
<ellipse cx="744.5" cy="249.3" rx="6" ry="4" fill="none" stroke="#2020c0" stroke-width="1.5" />
<path d="M733.5 242.3L754.5 245.3M733.5 246.3L754.5 249.3M734.5 251.3L752.5 253.3M735.5 255.3L751.5 256.3" fill="none" stroke="#20d0d0" stroke-width="0.85" />
<path d="M740.5 232.3L738.5 256.3M747.5 233.3L746.5 256.3" fill="none" stroke="#40d060" stroke-width="0.85" />
<ellipse cx="795.3" cy="269" rx="16" ry="16" fill="none" stroke="#b0b0b0" stroke-width="1" />
<path d="M779.3 269A16 16 0 0 1 803.3 255" fill="none" stroke="#40ff00" stroke-width="2" />
<path d="M789.3 254.5A16 16 0 0 1 811.3 271" fill="none" stroke="#f0f020" stroke-width="1.6" />
<path d="M791.3 258A12 12 0 0 1 807.3 269" fill="none" stroke="#f0f020" stroke-width="1.02" />
<path d="M780.3 272A16 16 0 0 0 790.3 284" fill="none" stroke="#fff" stroke-width="3.2" />
<path d="M810.3 274A16 16 0 0 1 800.3 284" fill="none" stroke="#fff" stroke-width="2.8" />
<path d="M781.3 264l1 5" fill="none" stroke="#fff" stroke-width="2.5" />
<ellipse cx="796.3" cy="270" rx="9" ry="7" fill="none" stroke="#2020ff" stroke-width="2" />
<ellipse cx="795.3" cy="267" rx="11" ry="8" fill="none" stroke="#20d0d0" stroke-width="1" />
<ellipse cx="796.3" cy="272" rx="6" ry="4" fill="none" stroke="#2020c0" stroke-width="1.5" />
<path d="M785.3 265L806.3 268M785.3 269L806.3 272M786.3 274L804.3 276M787.3 278L803.3 279" fill="none" stroke="#20d0d0" stroke-width="0.85" />
<path d="M792.3 255L790.3 279M799.3 256L798.3 279" fill="none" stroke="#40d060" stroke-width="0.85" />
<path d="M727.7 322L740.7 303L759.5 314.7L746.5 333.7Z" fill="#000" fill-opacity=".6" stroke="none"/>
<path d="M727.7 322 L746.5 333.7" fill="none" stroke="#f0f020" stroke-width="1.02" />
<path d="M727.7 322 L740.7 303" fill="none" stroke="#f0f020" stroke-width="1.02" />
<path d="M732 315.7 L750.8 327.4" fill="none" stroke="#f0f020" stroke-width="1.02" />
<path d="M734 325.9 L747 306.9" fill="none" stroke="#f0f020" stroke-width="1.02" />
<path d="M736.4 309.3 L755.2 321" fill="none" stroke="#f0f020" stroke-width="1.02" />
<path d="M740.2 329.8 L753.2 310.8" fill="none" stroke="#f0f020" stroke-width="1.02" />
<path d="M740.7 303 L759.5 314.7" fill="none" stroke="#f0f020" stroke-width="1.02" />
<path d="M746.5 333.7 L759.5 314.7" fill="none" stroke="#f0f020" stroke-width="1.02" />
<path d="M352 547C352 500 385 479 415 479C445 479 478 500 478 547" fill="none" stroke="#808080" stroke-width="1.1" />
<path d="M358 547C358 505 388 485 415 485C442 485 472 505 472 547" fill="none" stroke="#808080" stroke-width="0.85" />
<path d="M415 479Q362 499.4 362 547" fill="none" stroke="#808080" stroke-width="0.85" />
<path d="M415 479Q375 501.4 375 547" fill="none" stroke="#808080" stroke-width="0.85" />
<path d="M415 479Q388 504.2 388 547" fill="none" stroke="#808080" stroke-width="0.85" />
<path d="M415 479Q415 509.6 415 547" fill="none" stroke="#808080" stroke-width="0.85" />
<path d="M415 479Q442 504.2 442 547" fill="none" stroke="#808080" stroke-width="0.85" />
<path d="M415 479Q455 501.4 455 547" fill="none" stroke="#808080" stroke-width="0.85" />
<path d="M415 479Q468 499.4 468 547" fill="none" stroke="#808080" stroke-width="0.85" />
<path d="M382 490Q415 496 448 490" fill="none" stroke="#808080" stroke-width="0.85" />
<path d="M364 505Q415 515 466 505" fill="none" stroke="#808080" stroke-width="0.85" />
<path d="M355 521Q415 531 475 521" fill="none" stroke="#808080" stroke-width="0.85" />
<path d="M353 533Q415 541 477 533" fill="none" stroke="#808080" stroke-width="0.85" />
<path d="M401.5 480L401.5 600M405.5 479L405.5 600M424.5 479L424.5 600M427.5 480L427.5 600" fill="none" stroke="#808080" stroke-width="0.85" />
<path d="M394.5 484L394.5 547M435.5 484L435.5 547" fill="none" stroke="#808080" stroke-width="0.85" />
<path d="M392 539.5L438 539.5" fill="none" stroke="#808080" stroke-width="0.85" />
<path d="M392 547.5L438 547.5" fill="none" stroke="#808080" stroke-width="0.85" />
<path d="M392 556.5L438 556.5" fill="none" stroke="#808080" stroke-width="0.85" />
<path d="M392 566.5L438 566.5" fill="none" stroke="#808080" stroke-width="0.85" />
<path d="M392 576.5L438 576.5" fill="none" stroke="#808080" stroke-width="0.85" />
<path d="M392 586.5L438 586.5" fill="none" stroke="#808080" stroke-width="0.85" />
<path d="M409.5 500L409.5 600M420.5 500L420.5 600M415 479L415 600" fill="none" stroke="#808080" stroke-width="0.85" />
<path d="M326 594C326 575 331 555 348 536" fill="none" stroke="#808080" stroke-width="4.5" />
<path d="M504 594C504 575 499 555 482 536" fill="none" stroke="#808080" stroke-width="4.5" />
<path d="M333 594C334 572 342 552 358 538" fill="none" stroke="#808080" stroke-width="0.85" />
<path d="M497 594C496 572 488 552 472 538" fill="none" stroke="#808080" stroke-width="0.85" />
<path d="M340 594C341 575 348 556 364 545" fill="none" stroke="#808080" stroke-width="0.85" />
<path d="M490 594C489 575 482 556 466 545" fill="none" stroke="#808080" stroke-width="0.85" />
<path d="M327 590L352 575M330 570L356 562M338 552L362 552M503 590L478 575M500 570L474 562M492 552L468 552" fill="none" stroke="#808080" stroke-width="0.85" />
<path d="M347.1 572.8L345.5 577.7M375.1 548.3L372.4 549.8M348.7 557L349.5 565.9M390.2 569.3L396.3 572.4M375.7 589.3L371.5 593.7M378.3 548.3L376.2 555.5M351.7 546.6L352.4 554.7M381.8 589.8L374.7 591.6M358.4 585.8L352.9 587M393.3 550L396.2 552.4M399.5 567.2L403.5 572.7M366.5 564.7L365.2 569.6M372.1 591.1L365.2 592.7M391.7 595.5L397.8 599M392 594.2L390.2 602.4M381.4 555.8L379.6 563.5M350.5 548.2L342.4 548.5M336.4 585.8L341.2 588.3M351.2 584.2L359.3 585.3M374.2 547.3L377.9 553.6M393.4 595L387.4 595M352.3 548.9L358.9 549.6M344.2 565.8L350.1 568.9M333.1 589.3L328.2 589.9M394.6 564.3L394.2 570M376.4 575.4L374 581.3M397.7 570.9L394.2 575.2M347.1 560.4L346.5 569.2M369.5 545.6L368.1 550.9M331.4 576.4L338.1 577.7M375.2 568.8L378.3 575.1M380.9 582.6L384 583.2M378.7 594.1L379.3 598.6M372.7 561.3L375.5 565.6M356.6 575.4L358.4 579.8M385.6 546.4L381.3 551.1M352.3 556.3L358 561.7M343.5 567.2L350.3 569.5M353.2 562L354.7 569.9M391.6 553.6L389.3 558.1M393.7 568L397.8 569.6M368.1 554.7L361.3 558.5M343.2 559.2L339.8 566.3M388.1 562.6L390.3 565.6M387.2 558.8L388.5 563.7M360.2 565.9L367.7 569.9M330.3 593.1L322.1 593.4M361.3 593.5L367.8 599M383.7 587.7L383.3 594.6M350.8 562.4L355.1 563.3M372.4 559.6L380.2 560.7M395.1 580.4L387 583.1M394.8 574.4L392.6 576.6M342.4 560.3L341.8 567.3M359.8 592.9L363 598.8M348.2 588.9L343.6 592.6M355.3 555.1L350.1 558.4M342.3 585.4L335.3 590.3M389.3 545.4L383.1 548.2M333.6 558.8L333.2 563.4M360.5 569.1L368.1 569.2M333.9 551.5L337.6 552.3M400.2 588.6L400.2 592.1M352.7 561L350.5 565.6M372.2 563.4L374.4 567M338.9 573.3L341.6 580.1M335.8 554.1L334.1 559.1M386.3 564.4L383.4 571.6M361.1 564L357.5 568.8M360.3 580.4L364.4 584.4" fill="none" stroke="#808080" stroke-width="0.85" />
<path d="M466.6 575.9L467.4 579.2M458.7 588.1L462 596M492.6 582.2L493.2 586.7M436.9 583.7L430.3 586.1M485.1 574.1L483.6 581.3M435.4 568.8L438.2 570.1M483.7 532.9L487.1 534M491.4 541.8L488.6 543.3M436.7 585.7L430.6 589.2M496.6 568.2L504.3 569.1M483.3 563.7L490.1 566.1M481.9 591.7L483.7 594.5M468.6 584.7L472.4 587M446 570.7L448.5 577.8M454.5 556.2L455.8 561.1M434 563L436.4 571.5M481.8 540.6L476.7 545.6M476.5 564.1L474 569.4M492.6 539.9L490.1 542.4M494 564.1L490.4 568.5M441.4 547.6L440.3 551.7M450.7 545.3L443.6 546.4M449.3 576.6L444.4 579M470.1 547.6L474.4 547.9M462.5 555.3L464.2 558.9M451.2 581.1L447.3 581.2M462.5 569.5L457.5 572.4M487.2 566.8L483.4 571.3M489.7 556.4L482.3 557.3M461.7 545.2L458.9 548.6M476.6 593.3L482.5 598.9M441.7 547.1L439.2 550.4M489.8 589.4L485.7 591.2M450.6 557.9L457.7 559.9M434.7 585L436.7 589.3M469.8 574.6L471.3 577.2M459.4 562.1L458.3 566.2M496.8 555.8L502.6 558.1M447.8 573.9L444.3 575.2M493.4 536.4L496.8 544.4M483.6 580L481.1 584M475.1 583.2L471.8 586.4M497.2 574.4L503 576.6M463.6 553.2L459.7 559.4M468.8 542L466 548.3M440.9 588.7L447.3 591.3M495.1 539.3L491.9 543.2M471 566.6L471.9 573.4M450.5 541.6L448.4 544.3M482.3 565.8L485.5 572.6M447.1 555.3L455.3 556.4M464.3 546.3L467.7 553.1M452 556.6L447.3 560.7M453.4 585.9L455.8 588.7M435.2 537.4L430.1 543.2M441.3 542.5L437.5 546.5M486.7 579.4L492.6 582.3M456.7 542.8L455.4 548.8M442.5 546.5L450.2 547.2M485.8 588.8L488.9 596.9M467.8 568.5L461 569M477.4 549.8L477.8 557.9M471.3 578L469 580M475.7 562.5L476.4 568.6M441.9 565L441.9 568.2M474.5 559.3L468.2 560.1M492.2 538.9L489.3 546.1M431.6 553.8L435.9 554.8M466.8 591.4L462.3 593.3M478 538.9L475.5 546.6" fill="none" stroke="#808080" stroke-width="0.85" />
<path d="M431.2 589.5L436.2 589.5M426.7 597.5L432.1 597.5M424.8 579.5L427.2 579.5M399 568.5L401.6 568.5M423.5 581.5L423.5 585.2M407.6 579.5L412.6 579.5M402.9 596.5L407.7 596.5M410.1 581.5L414.5 581.5M396.1 568.5L401.2 568.5M413.5 568.5L416.3 568.5M411.3 567.5L413.5 567.5M402.4 580.5L404.6 580.5M413 576.5L417.8 576.5M411.5 575.9L411.5 578M404.3 564.5L408.2 564.5M419.7 574.5L422.1 574.5M423.7 571.5L428.8 571.5M431.5 572.5L434.5 572.5M427 585.5L430.3 585.5M421.9 599.5L426.3 599.5M397.2 564.5L399.8 564.5M398 586.5L403.7 586.5M433.5 579.1L433.5 584.3M432.5 561.4L432.5 564.6M432.5 563.5L432.5 566.7M400.5 575.6L400.5 578.9M431.5 567L431.5 571.9M427.8 582.5L433.4 582.5M411.8 569.5L416.9 569.5M406.5 566.8L406.5 571.7M423 575.5L427 575.5M423.5 560.9L423.5 564.8M422.5 563.9L422.5 566.8M420.4 595.5L425.9 595.5M430.1 589.5L433.4 589.5M398.7 576.5L404.6 576.5M418.5 564.4L418.5 566.7M405.5 562L405.5 564.6M418.5 560.5L418.5 563.4M404.5 582.5L404.5 586.2" fill="none" stroke="#808080" stroke-width="0.85" />
<path d="M398 594l4-3 3 2 3-5 3 6 3-4 4 3" fill="none" stroke="#808080" stroke-width="1.02" />
<rect x="329.5" y="594.5" width="73" height="24" fill="none" stroke="#808080" stroke-width="1" />
<rect x="333.5" y="596.5" width="12" height="20" fill="none" stroke="#808080" stroke-width="1" />
<path d="M329.5 600L343 600M343.5 594L343.5 660M347.5 600L347.5 655M352.5 618L352.5 660" fill="none" stroke="#808080" stroke-width="0.85" />
<rect x="343.5" y="629.5" width="60.5" height="30" fill="none" stroke="#808080" stroke-width="1" />
<path d="M362.5 630L362.5 659M368.5 630L368.5 659M377.5 630L377.5 659M390.5 630L390.5 659" fill="none" stroke="#808080" stroke-width="0.85" />
<path d="M343 638.5L404 638.5M343 645.5L404 645.5M343 651.5L404 651.5M343 654.5L404 654.5M343 657.5L404 657.5" fill="none" stroke="#808080" stroke-width="0.85" />
<rect x="362.5" y="599.5" width="22" height="27" fill="none" stroke="#808080" stroke-width="1" />
<rect x="385.5" y="610.5" width="16" height="7" fill="none" stroke="#a04848" stroke-width="1.4" />
<path d="M330 617.5L402 617.5" fill="none" stroke="#a04848" stroke-width="1.1" />
<path d="M356.5 618L356.5 634M360.5 618L360.5 634M366.5 618L366.5 634M372.5 618L372.5 634M380.5 618L380.5 634M386.5 618L386.5 634M392.5 618L392.5 634M398.5 618L398.5 634" fill="none" stroke="#808080" stroke-width="0.85" />
<path d="M403.5 594L403.5 650M425.5 594L425.5 650M404 606.5L425 606.5M404 634.5L425 634.5M404 649.5L460 649.5M459.5 644L459.5 650" fill="none" stroke="#808080" stroke-width="0.85" />
<rect x="425.5" y="594.5" width="60" height="49" fill="none" stroke="#808080" stroke-width="1" />
<path d="M431.5 595L431.5 643M438.5 595L438.5 643M450.5 595L450.5 643M459.5 595L459.5 643M467.5 595L467.5 643M477.5 595L477.5 643" fill="none" stroke="#808080" stroke-width="0.85" />
<path d="M425 602.5L486 602.5M425 614.5L486 614.5M425 621.5L486 621.5M425 629.5L486 629.5M425 634.5L486 634.5M425 638.5L486 638.5M425 641.5L486 641.5" fill="none" stroke="#808080" stroke-width="0.85" />
<path d="M426 594.5L482 594.5M432 602.5L482 602.5" fill="none" stroke="#a04848" stroke-width="1.19" />
<rect x="427.5" y="597.5" width="4" height="16" fill="none" stroke="#808080" stroke-width="1" />
<path d="M486 594.5L500 594.5M499.5 594L499.5 608M486 608.5L500 608.5M466 602L482 630M470 602L486 628" fill="none" stroke="#808080" stroke-width="0.85" />
<path d="M500 580V596 M329 580V596" fill="none" stroke="#808080" stroke-width="3.5" />
<rect x="366" y="502" width="16.5" height="7" fill="none" stroke="#a04848" stroke-width="1.3" />
<path d="M380.7 584.6q-3.6 2.8 3 6.1M371.8 554q3.8 5.4 -5.5 -6.8M364.1 574.6q0.7 2.4 3.1 -5.3M355.2 571.1q-2.5 -0.3 5.5 2.9M346.6 571.8q1.3 -3.4 -4.9 -6.5M364.4 595.8q-3.4 -4 4.6 2.7M401.6 581.2q8.5 0.7 -7 -5.9M368.8 593.2q5.3 -1.8 -9.3 0.9M360.7 592.4q-1.5 0.1 -0.7 -4.2M382.9 544.2q-1.5 2.4 -7.5 3.4M389.8 557.5q-4.3 -3.5 -3.2 2M390.8 579.8q-2.5 -6.7 7 -6.9M362 567q4.8 -2.9 -4.2 5.2M371.6 589.9q3.1 -5 0.4 8.6M350.4 570.7q-2.5 2.2 6.4 2.1M371.8 594.9q-6.2 -9.6 8.3 1.9M369.7 560.3q-2.6 -3.4 2.8 1.9M393.3 564.6q0.8 1.2 -4.4 2.1M400.4 585.7q2.3 0.1 0.2 -4.7M395.2 571.8q1.2 3.3 4.9 0.5M400 567.2q2 -1.6 3 -7M375.2 551.2q0.7 -1.4 4.3 -0.2M364.5 566.6q-4.3 -2.3 8.3 -2.2M375.4 564.2q2 -8.3 8.1 -3.7M378.8 571.7q4.1 -3.9 -1.6 -6.2M384.8 562.1q2.7 -5.7 6.4 -1.6M400.9 551.8q-4 7.9 -2.3 5.2M402.4 559.1q-2.5 4.8 3.9 4.2M347.1 554.4q1.7 2.4 -4.3 -0.7M382.4 586.2q-4.3 -2.3 2.9 -0.7M372.9 556.5q3 -2.4 0.6 6.8M400 551.6q-5.5 -6.9 -6 -7.9M390.6 551.5q-7.9 8.1 3.1 -3.1M376.2 562.6q-2.5 -4.2 3.7 -0.3M351.3 548.9q-5.8 8.3 4.8 2.5M357.7 561.1q-2.4 -6.1 -2.8 -9.2M364.1 582.4q0.5 -0.8 -8.3 1.9M376.2 587q5 -4.6 4 -1.8M352.7 556.4q-0.6 2.5 4.4 -0.6M397.7 584.9q4.1 -6.4 -9.8 -1.6M376.6 565.8q0.1 -1.8 -1.8 3.6M362.4 561.4q7.1 6.6 6.6 -2.8M360.4 594.7q1.8 -1.2 -4.9 -0M383.3 557.2q0.4 4.6 -9.7 1.4M405.1 570.5q-1.1 5.1 5.5 2.6M391.8 545.2q-1.5 -3.2 8.9 -1.1M377.1 589.7q-2.5 -3.6 -1.4 -5.8M374.3 563.5q1.3 -5.4 4 -4M356.1 562q-1.4 -1.7 6.4 3.6M343.9 571.1q4.4 4.6 -0.7 -9.4M400.4 565.8q-0.9 -0.2 5.7 -5.3M399 557.5q-7.3 -8.3 -3.5 -2.5M364.5 542.4q-1 0.1 -1.3 8.7M369.7 575.9q5.8 2.3 6.2 4.4M347.3 565.9q-9.8 -0.4 7.6 3.3M369 590.3q0.9 4.1 -7.7 4.3M354.9 563.2q6.5 0.4 3.6 0.6M378.7 546.6q0.5 -2.7 2.9 -3.6M404.9 577.7q3.5 -3.2 -2 6.4M376 575.5q6 4 4.6 -2.9" fill="none" stroke="#1ca87c" stroke-width="1"/>
<ellipse cx="352" cy="569" rx="9" ry="24" fill="none" stroke="#1ca87c" stroke-width="1.1" />
<ellipse cx="396" cy="569" rx="9" ry="24" fill="none" stroke="#1ca87c" stroke-width="1.1" />
<ellipse cx="351" cy="569" rx="5" ry="17" fill="none" stroke="#1ca87c" stroke-width="1" />
<ellipse cx="397" cy="569" rx="5" ry="17" fill="none" stroke="#1ca87c" stroke-width="1" />
<path d="M344 554Q354 540 366 542 M404 554Q394 540 382 542" fill="none" stroke="#1ca87c" stroke-width="1.02" />
<path d="M360 547L360 556M359.5 563L359.5 571" fill="none" stroke="#ff2020" stroke-width="3" />
<path d="M360 578L360 584" fill="none" stroke="#ff2020" stroke-width="2" />
<path d="M388 547L388 556M388.5 563L388.5 571" fill="none" stroke="#ff2020" stroke-width="3" />
<path d="M388 578L388 584" fill="none" stroke="#ff2020" stroke-width="2" />
<path d="M368 554L368 580M380 554L380 580M369.5 558L369.5 576M378.5 558L378.5 576" fill="none" stroke="#20e0e8" stroke-width="1.02" />
<path d="M369.5 590L369.5 618M378.5 590L378.5 618M366.5 596L366.5 614M381.5 596L381.5 614" fill="none" stroke="#20e0e8" stroke-width="0.85" />
<path d="M366 604L371 602M377 604L382 602" fill="none" stroke="#20e0e8" stroke-width="0.85" />
<path d="M365 536L374 545L382 536" fill="none" stroke="#808080" stroke-width="3.5" />
<path d="M374 538V576Q374 585 397 588" fill="none" stroke="#808080" stroke-width="5" />
<clipPath id="h374"><ellipse cx="374" cy="524" rx="18.5" ry="15.5"/></clipPath>
<g clip-path="url(#h374)">
<path d="M355.5 512H392.5" fill="none" stroke="#40ff00" stroke-width="1.02" />
<path d="M355.5 515.5H392.5" fill="none" stroke="#f0f020" stroke-width="0.94" />
<path d="M355.5 519H392.5" fill="none" stroke="#40e040" stroke-width="0.85" />
<path d="M355.5 522.5H392.5" fill="none" stroke="#f0f020" stroke-width="1.02" />
<path d="M355.5 526H392.5" fill="none" stroke="#2020ff" stroke-width="2.6" />
<path d="M355.5 530H392.5" fill="none" stroke="#f0f020" stroke-width="1.02" />
<path d="M355.5 534H392.5" fill="none" stroke="#2020ff" stroke-width="1.8" />
<path d="M365 510L365 538M374 509L374 539M383 510L383 538" fill="none" stroke="#20d0d0" stroke-width="0.85" />
<path d="M369.5 527L369.5 538M378.5 527L378.5 538" fill="none" stroke="#20d0d0" stroke-width="0.77" />
</g>
<path d="M355.5 524A18.5 15.5 0 0 1 392.5 524" fill="none" stroke="#40ff00" stroke-width="1.6" />
<path d="M356.5 526A18.5 15.5 0 0 0 365 537.5" fill="none" stroke="#fff" stroke-width="3" />
<path d="M391.5 526A18.5 15.5 0 0 1 383 537.5" fill="none" stroke="#fff" stroke-width="3" />
<path d="M355.5 522v5 M392.5 522v5" fill="none" stroke="#f0f020" stroke-width="1.5" />
<rect x="357" y="544" width="7" height="3" fill="#fff" stroke="none" stroke-width="1" />
<rect x="384" y="544" width="7" height="3" fill="#fff" stroke="none" stroke-width="1" />
<rect x="357" y="581" width="7" height="5" fill="none" stroke="#fff" stroke-width="1.6" />
<rect x="370.5" y="583" width="6" height="6" fill="none" stroke="#fff" stroke-width="1.8" />
<path d="M382 582L388 582" fill="none" stroke="#fff" stroke-width="1.5" />
<path d="M368 559L370 562M378 559L380 562" fill="none" stroke="#fff" stroke-width="2" />
<rect x="447" y="485.5" width="16.5" height="7" fill="none" stroke="#a04848" stroke-width="1.3" />
<path d="M436 528.7q3.9 -2.9 2.1 5.7M448.4 536.9q-0.8 2.3 -4.3 0M448.7 546.5q1.8 -1.5 -0.4 4.2M430.1 537.4q2.8 -4 0.2 6.1M465.9 558.4q0.7 1.6 -3.3 2.6M463.2 549.4q-0.2 1.3 2.2 -2.6M440.2 574q4.4 -1.4 3.2 -7.1M486.7 551.6q3.7 1.3 -2.3 3.6M429.9 554q4.6 -0.7 -8.7 -2.2M454.5 557q2.3 0.5 7.3 4.9M442.4 573.7q4.6 3.4 9.2 -0.7M441.6 526.1q-0.3 1.1 -4.6 6.3M439 563.2q0.6 -2.1 5.4 4.4M469.4 534.8q0.7 -3.4 -4.8 3.1M426.5 551.5q-5.2 0.5 2.2 3.8M456 547q4.4 -3.8 -1.4 3.2M483.7 551.2q-3 0.7 5.9 -1.4M455.7 536.3q4.6 8 1.2 -4.4M429.3 563.5q4.3 -1.6 -8 2.2M471.8 534.4q-1.2 3.6 -7.7 -0.4M470.7 552.7q-2.9 0.5 2.6 -7.4M460.5 546.5q-2.4 2.2 -2.1 -2.6M455.3 577q-7.4 0.9 -6.2 6.4M470.7 575.2q2 -0.1 4.4 -0.5M470.3 533.6q-5.2 -5.6 -5.4 -4.1M463 573.3q1.7 -0.7 3.4 2M452.2 579.2q-4.8 -2.1 -2.2 -6.9M467.7 534.7q6.2 -5.3 -1.5 2.9M474.3 546.5q-2.1 -3.4 -4.3 -7.5M452 568.7q-3.7 -1.7 -4.7 2.7M459.7 555q-4.8 -1.6 7.1 1.1M435.6 556.2q2.7 3.9 -3.9 -2.9M456.4 548.5q0 -2.8 1.4 -5M482.3 556.9q6.1 -4 5.2 5.2M446.4 579.5q-3.3 5.5 -3.8 0.5M449.5 526.1q2.2 2.5 -1.6 -6.1M426.1 562q-2.5 -4.6 -1.6 4.9M463 530.3q-2 -2.8 9.5 -2.2M470.7 554.2q-5.5 2.3 -5.7 -6.1M455.8 577.5q3 -0.5 -1.4 -2.7M468.5 555.8q-5.9 -2.4 -4.6 -3.4M470.2 539.4q1.4 2.3 -4 4.9M484.2 551.2q-2.8 0.9 4.1 1.6M462.1 538.5q0 -1.8 1.9 3.8M479.6 556q2.8 3 5.2 1.3M446.3 564.7q-2.8 1 0.7 4.9M464.1 564.8q-2 0.1 -3.7 0.5M450.7 536.3q6.2 -4.6 -1.2 -5.6M480 568.7q5.5 7.9 5.2 6.1M430.8 557.6q4.1 -0.7 5.9 -7.6M432.3 537.1q-0.7 5.1 -3.5 8.1M439.3 526.5q5 -2.3 -7.3 6.4M438.6 537.5q-1.5 -1.8 7.8 -5.6M436.8 554.8q-2.3 3.9 -6.9 -0.3M482.8 566.2q-2.1 -2.4 -0 8.7M481.5 555.6q4.8 -2.8 3.6 1.3M441.4 576.6q3.1 -7.4 -1.7 4.1M480.5 547q-3.8 -5.7 -4.5 -3M459.8 526.8q-1.9 -4.2 4.4 8M443.3 554.8q-0.1 3 -1.5 5.7" fill="none" stroke="#1ca87c" stroke-width="1"/>
<ellipse cx="433" cy="552.5" rx="9" ry="24" fill="none" stroke="#1ca87c" stroke-width="1.1" />
<ellipse cx="477" cy="552.5" rx="9" ry="24" fill="none" stroke="#1ca87c" stroke-width="1.1" />
<ellipse cx="432" cy="552.5" rx="5" ry="17" fill="none" stroke="#1ca87c" stroke-width="1" />
<ellipse cx="478" cy="552.5" rx="5" ry="17" fill="none" stroke="#1ca87c" stroke-width="1" />
<path d="M425 537.5Q435 523.5 447 525.5 M485 537.5Q475 523.5 463 525.5" fill="none" stroke="#1ca87c" stroke-width="1.02" />
<path d="M441 530.5L441 539.5M440.5 546.5L440.5 554.5" fill="none" stroke="#ff2020" stroke-width="3" />
<path d="M441 561.5L441 567.5" fill="none" stroke="#ff2020" stroke-width="2" />
<path d="M469 530.5L469 539.5M469.5 546.5L469.5 554.5" fill="none" stroke="#ff2020" stroke-width="3" />
<path d="M469 561.5L469 567.5" fill="none" stroke="#ff2020" stroke-width="2" />
<path d="M449 537.5L449 563.5M461 537.5L461 563.5M450.5 541.5L450.5 559.5M459.5 541.5L459.5 559.5" fill="none" stroke="#20e0e8" stroke-width="1.02" />
<path d="M450.5 573.5L450.5 601.5M459.5 573.5L459.5 601.5M447.5 579.5L447.5 597.5M462.5 579.5L462.5 597.5" fill="none" stroke="#20e0e8" stroke-width="0.85" />
<path d="M447 587.5L452 585.5M458 587.5L463 585.5" fill="none" stroke="#20e0e8" stroke-width="0.85" />
<path d="M443 524.5L469 524.5M443 528L469 528M443 531.5L469 531.5M443 535L469 535M443 538.5L469 538.5M443 541.5L469 541.5" fill="none" stroke="#f0f020" stroke-width="1.1" />
<path d="M443 523.5L443 542.5M448 523.5L448 542.5M462 523.5L462 542.5M466 523.5L466 542.5M469 523.5L469 542.5" fill="none" stroke="#ff9020" stroke-width="1.1" />
<path d="M442 525.5L442 541.5" fill="none" stroke="#e04010" stroke-width="2.5" />
<path d="M446 519.5L455 528.5L463 519.5" fill="none" stroke="#808080" stroke-width="3.5" />
<path d="M455 521.5V557.5Q455 571.5 478 574.5" fill="none" stroke="#808080" stroke-width="5" />
<clipPath id="h455"><ellipse cx="455" cy="507.5" rx="18.5" ry="15.5"/></clipPath>
<g clip-path="url(#h455)">
<path d="M436.5 495.5H473.5" fill="none" stroke="#40ff00" stroke-width="1.02" />
<path d="M436.5 499H473.5" fill="none" stroke="#f0f020" stroke-width="0.94" />
<path d="M436.5 502.5H473.5" fill="none" stroke="#40e040" stroke-width="0.85" />
<path d="M436.5 506H473.5" fill="none" stroke="#f0f020" stroke-width="1.02" />
<path d="M436.5 509.5H473.5" fill="none" stroke="#2020ff" stroke-width="2.6" />
<path d="M436.5 513.5H473.5" fill="none" stroke="#f0f020" stroke-width="1.02" />
<path d="M436.5 517.5H473.5" fill="none" stroke="#2020ff" stroke-width="1.8" />
<path d="M446 493.5L446 521.5M455 492.5L455 522.5M464 493.5L464 521.5" fill="none" stroke="#20d0d0" stroke-width="0.85" />
<path d="M450.5 510.5L450.5 521.5M459.5 510.5L459.5 521.5" fill="none" stroke="#20d0d0" stroke-width="0.77" />
</g>
<path d="M436.5 507.5A18.5 15.5 0 0 1 473.5 507.5" fill="none" stroke="#40ff00" stroke-width="1.6" />
<path d="M437.5 509.5A18.5 15.5 0 0 0 446 521" fill="none" stroke="#fff" stroke-width="3" />
<path d="M472.5 509.5A18.5 15.5 0 0 1 464 521" fill="none" stroke="#fff" stroke-width="3" />
<path d="M436.5 505.5v5 M473.5 505.5v5" fill="none" stroke="#f0f020" stroke-width="1.5" />
<rect x="438" y="527.5" width="7" height="3" fill="#fff" stroke="none" stroke-width="1" />
<rect x="465" y="527.5" width="7" height="3" fill="#fff" stroke="none" stroke-width="1" />
<rect x="438" y="567.5" width="7" height="5" fill="none" stroke="#fff" stroke-width="1.6" />
<rect x="451.5" y="569.5" width="6" height="6" fill="none" stroke="#fff" stroke-width="1.8" />
<path d="M463 568.5L469 568.5" fill="none" stroke="#fff" stroke-width="1.5" />
<path d="M449 542.5L451 545.5M459 542.5L461 545.5" fill="none" stroke="#fff" stroke-width="2" />
<path d="M618.4 568.5 L681.3 548.3 L724.8 537.9 L747.4 531.4" fill="none" stroke="#808080" stroke-width="1.6" />
<path d="M633 567 L707 545 L724 541" fill="none" stroke="#808080" stroke-width="0.85" />
<path d="M634 572 L712 569.3" fill="none" stroke="#808080" stroke-width="0.85" />
<path d="M631.3 579.8 L678 593.5 L712 595.9" fill="none" stroke="#808080" stroke-width="0.85" />
<path d="M636 568.500Q631 573 631.300 579.800" fill="none" stroke="#808080" stroke-width="3" />
<path d="M658.7 557Q661.7 572.4 654.7 587.8" fill="none" stroke="#808080" stroke-width="0.85" />
<path d="M682 549.5Q685 571.5 678 593.5" fill="none" stroke="#808080" stroke-width="0.85" />
<path d="M704.6 545Q707.6 570.0 702 595" fill="none" stroke="#808080" stroke-width="0.85" />
<path d="M704.6 541 L721.6 524.2" fill="none" stroke="#d0d070" stroke-width="1.8" />
<path d="M724.5 523.4L724.5 595M726.5 523.4L726.5 640" fill="none" stroke="#808080" stroke-width="0.85" />
<path d="M721.6 524.2 L726.5 523.6" fill="none" stroke="#808080" stroke-width="0.85" />
<path d="M721.6 524.2 L685.3 558.8" fill="none" stroke="#808080" stroke-width="1.8" />
<path d="M716 538 L690 556" fill="none" stroke="#808080" stroke-width="0.85" />
<path d="M726 537.9 L747.4 530.6" fill="none" stroke="#808080" stroke-width="0.85" />
<path d="M726 541 L747.4 534" fill="none" stroke="#808080" stroke-width="0.85" />
<path d="M746.5 530L746.5 562M750.5 530L750.5 562M755.4 531L755.4 562" fill="none" stroke="#808080" stroke-width="0.85" />
<path d="M746 536L756 536M746 541L756 541M746 546L756 546M746 551L756 551M746 556L756 556" fill="none" stroke="#808080" stroke-width="0.85" />
<path d="M715.1 553.5L719.5 555.9M710 575.3L703.8 579.8M731 562.2L734.6 566.5M713.2 553.8L709.2 554.7M732.9 604.9L738.6 608.9M717.3 591.8L711.3 594.7M734.4 552.3L731.3 557.5M723.2 559L728.3 560.5M736 609.2L739.4 613.8M735.3 587.8L728.7 591.2M723.3 576.2L724.5 582.1M712.8 568.3L719.8 569.2M709.4 591.7L708.9 596.1M722.1 571L728.7 575.6M720.4 560.8L724.4 565.5M718.7 600.5L717.8 605.1M735.1 553.4L737.6 555.6M731 590.9L733.1 594.5M713.3 579.5L711.5 582.1M734.9 615.7L728.3 616.5M708.5 567.1L702.6 572.2M720.3 614.9L715.2 618.2M716.8 560L721.6 562.1M719.4 616.2L724.1 616.3M709.3 558.4L712.2 564.7M716.7 553.1L718.6 560.8M714.2 550.3L717.1 552M728.3 556.9L728.4 560.1M715.5 618.8L715.1 622.4M731.2 575.9L731.8 583.8M715.3 576L716 579.1M715.5 610.9L715.5 618.1M708.9 564.6L712.3 567.1M714.9 609.5L718.6 610.1M735.8 587.3L738.2 594.9M735 593.7L730.2 598.7M722.8 552.8L719.1 554.3M735 613.5L732.8 617.6M732 592.9L731.4 599.9M727.6 596.1L723.4 597.1M736.7 551.4L728.9 552.4M728.1 549.3L735 552.2M737.1 594.7L739.9 596.4M727.1 587.6L720.5 589.1M714.6 546.2L722.2 546.6M734.3 554.5L728.8 558.9M734.3 586.2L740.3 590.6M728.1 570.1L722.5 575M722.1 584.4L725.3 584.8M725.8 581.7L723.4 588.6M712.2 572.5L711.7 579.3M708.3 607.2L715.2 609M724.3 573.8L728.2 579.6M715 581.5L722.5 583.8M711.4 591.3L711.1 598.8M721 608.6L727.7 610.1M734.4 560.3L730.5 562.5M720.7 604.3L717.1 605.8M713.3 556.9L715.9 561.7M724.3 612L730.8 612.1M717.4 585.8L714 590M722.5 551.5L718.8 553.5M718.7 602L715.6 609.3M728.3 590.5L723.9 591.7M722 612.5L717.9 614.4M731.6 590.7L736.3 593M731.1 572.4L736.9 575M710.5 556.5L716.5 560.2M735.1 573.2L737.7 578.4M726.6 552.8L721.7 553.8M713.4 593.8L716.1 597.5M708.7 547.5L702 551.4M732 604.9L738.9 608.6M725.5 582.2L719.8 583.3M730.8 616.7L729.2 619.9M728.3 600.4L723 603.5M717.1 613.7L715.5 618.5M734.9 597.4L738.3 600.4M717.8 591.8L710.2 594.2M720 575.2L724.5 580.8M720.3 547L719.9 550.9M728.8 590.9L724 591.6M726.7 557.4L723.4 557.7M737.6 613.2L741 618.2M710.7 564.8L706.7 565.7M734.8 602.8L737.5 605.3M717 615.2L714 617.5M728.4 585.9L733.7 591.7M723.7 557.5L727.2 557.8M717.5 554.9L714.2 555" fill="none" stroke="#808080" stroke-width="0.85" />
<path d="M716.9 603.4L713.1 607.8M725.7 607.2L721.6 612.2M723.4 591.6L722.5 597.4M722.1 559.3L722.4 565.6M711.6 560.1L716.1 564.8M719.4 590.9L722.7 596.5M719.3 575.4L716.4 576.6M710.5 607.6L713.6 609.3M730.4 599.4L729.7 603.3M721.4 593.1L718.2 595.1M733.9 592.4L727.4 593.7M719.1 600.9L717.4 606.9M712.6 587.2L716.4 592.6M725.5 603.8L730.9 604.5M725.2 565.3L722 571M717.4 603.7L720 608.6M730 603.5L723.9 605.9M725.8 591.9L725.3 597.3M733.7 571.2L731.6 573.8M722 582.7L725.8 586.5M714.8 554.3L708.9 556M726.7 557L720.8 560.6M722.2 550.1L719.8 556M724.9 551.1L730.8 551.7M721.5 558.7L717.3 560.2M728 599L729.4 602.9M724.5 552L719.9 552.4M728.1 601.8L725.7 605.2M728.9 592.3L733 594.8M710.4 603.2L714.8 608.3M728.1 574.4L723.3 577.1M717.7 587.2L717.6 591.2M710.7 565.8L706.7 566.9M713.2 595.5L709.8 595.6M714 555.5L710.2 556.3M726.1 603.4L730.7 605.2M718.2 577.3L724.2 580.8M715.9 600.6L712.4 600.9M717.1 584L711.7 585.7M711.8 600.8L709.5 603.7" fill="none" stroke="#808080" stroke-width="2" />
<path d="M715 553Q722 575 726 592L734.500 612.800" fill="none" stroke="#808080" stroke-width="3" />
<path d="M752 561L731 569.300" fill="none" stroke="#808080" stroke-width="4" />
<rect x="721.6" y="608.5" width="112.4" height="42.2" fill="none" stroke="#808080" stroke-width="1" />
<path d="M728.5 608L728.5 650M739.5 608L739.5 650M755.5 608L755.5 650M782.5 608L782.5 650M808.5 608L808.5 650" fill="none" stroke="#808080" stroke-width="0.85" />
<path d="M721 618.5L834 618.5M721 633.5L834 633.5M721 638.5L834 638.5" fill="none" stroke="#808080" stroke-width="0.85" />
<path d="M712.7 595L712.7 626.5M712.7 626.5L721.6 626.5" fill="none" stroke="#808080" stroke-width="0.85" />
<path d="M666 613.6 L683 642.6 L727 642.6" fill="none" stroke="#808080" stroke-width="0.85" />
<path d="M666 629.7 L683.7 659.5 L727.2 659.5 L727.2 650" fill="none" stroke="#908878" stroke-width="0.85" />
<path d="M730.9 636.3L734.1 638.8M731.7 614.2L726.7 614.5M792.3 616.2L800 620.8M750.8 645.8L746 653.1M831.7 600.9L826.7 607.6M798.8 640.2L801.8 642.3M742.6 621.9L741.8 628.2M766.4 635.2L760.6 640.7M732 605.6L735.2 608.6M788.8 607.7L792 613.7M766.6 633.4L773.7 638.3M764.9 647.1L769.2 647.4M748.3 639.3L741 640.7M780.7 600.1L777.6 603.8M769.6 605L770.2 610.2M765.7 620.3L769.5 620.7M811.1 634.6L816.2 636.6M759.3 625.9L759.8 634.3M831.2 624.3L829.8 628.2M791.6 628L798.9 628.5M774.3 638L778.1 638.5M747.4 612.3L750.5 617M795.2 606.5L792.6 610.8M785.7 645.9L791.6 652.2M763.5 624.9L766.1 630.6M819.4 607.8L824.9 610M821.6 627.8L829.6 631.7M803.4 627.8L800.6 629.6M820.7 602L813.9 607.4M792.1 625.2L796.6 626M778.4 641.3L778.8 645.5M757.9 632.5L749.7 635.6M758.5 618.8L758.2 621.9M818.5 640.2L819.2 643.6M736.5 619.2L741.8 625.8M817.6 645.8L824 650.5M825.3 644.1L834.3 644.4M728.4 612.6L729.8 618.5M737.8 630L735 636.5M782.1 625.5L789.1 626.9M774.2 604.8L771.6 607.2M762.4 615L761.1 619.5M740.5 630.1L737.1 630.5M744.6 636.4L746.1 642.5M760.2 616L759.7 623.5M784.9 610.4L790.7 613.8M779.1 630.6L777.6 636.6M788.4 607.7L783.7 615M804.9 645.8L807.8 650.7M760.2 613.8L762.8 617.8" fill="none" stroke="#808080" stroke-width="0.85" />
<path d="M895 479 L880 527" fill="none" stroke="#808080" stroke-width="1.02" />
<path d="M898.5 480 L883.5 528" fill="none" stroke="#808080" stroke-width="1.02" />
<path d="M895 479L898.5 480M893.5 483.8L897 484.8M892 488.6L895.5 489.6M890.5 493.4L894 494.4M889 498.2L892.5 499.2M887.5 503L891 504M886 507.8L889.5 508.8M884.5 512.6L888 513.6M883 517.4L886.5 518.4M881.5 522.2L885 523.2" fill="none" stroke="#808080" stroke-width="0.85" />
<path d="M882 528 L856 541" fill="none" stroke="#808080" stroke-width="0.85" />
<path d="M883 531 L857 545" fill="none" stroke="#808080" stroke-width="0.85" />
<path d="M870 534 L852 552" fill="none" stroke="#808080" stroke-width="0.85" />
<path d="M834 554 L834 618" fill="none" stroke="#808080" stroke-width="0.85" />
<path d="M836.6 552.7 L834.8 617.8" fill="none" stroke="#808080" stroke-width="0.85" />
<path d="M839.1 551.5 L835.6 617.6" fill="none" stroke="#808080" stroke-width="0.85" />
<path d="M841.7 550.2 L836.3 617.3" fill="none" stroke="#808080" stroke-width="0.85" />
<path d="M844.2 549 L837.1 617.1" fill="none" stroke="#808080" stroke-width="0.85" />
<path d="M846.8 547.7 L837.9 616.9" fill="none" stroke="#808080" stroke-width="0.85" />
<path d="M849.3 546.5 L838.7 616.7" fill="none" stroke="#808080" stroke-width="0.85" />
<path d="M851.9 545.2 L839.4 616.4" fill="none" stroke="#808080" stroke-width="0.85" />
<path d="M854.4 544 L840.2 616.2" fill="none" stroke="#808080" stroke-width="0.85" />
<path d="M857 542.7 L841 616" fill="none" stroke="#808080" stroke-width="0.85" />
<path d="M834 561.1 L855.2 550.8" fill="none" stroke="#808080" stroke-width="0.85" />
<path d="M834 568.2 L853.4 559" fill="none" stroke="#808080" stroke-width="0.85" />
<path d="M834 575.3 L851.7 567.1" fill="none" stroke="#808080" stroke-width="0.85" />
<path d="M834 582.4 L849.9 575.3" fill="none" stroke="#808080" stroke-width="0.85" />
<path d="M834 589.6 L848.1 583.4" fill="none" stroke="#808080" stroke-width="0.85" />
<path d="M834 596.7 L846.3 591.6" fill="none" stroke="#808080" stroke-width="0.85" />
<path d="M834 603.8 L844.6 599.7" fill="none" stroke="#808080" stroke-width="0.85" />
<path d="M834 610.9 L842.8 607.9" fill="none" stroke="#808080" stroke-width="0.85" />
<path d="M834 618 L841 616" fill="none" stroke="#808080" stroke-width="0.85" />
<path d="M834 554 L857 542.7 L841 617 L834 618 L834 554" fill="none" stroke="#808080" stroke-width="1.1" />
<path d="M811 487 L811 560" fill="none" stroke="#a04848" stroke-width="1.6" />
<path d="M814.5 487 L814.5 560" fill="none" stroke="#a04848" stroke-width="0.85" />
<path d="M811 487 L818 487 L852 511 L859 529 L846 545 L830 600" fill="none" stroke="#a04848" stroke-width="1.02" />
<path d="M819 495 L848 516 L838 545 L822 600" fill="none" stroke="#a04848" stroke-width="0.85" />
<ellipse cx="852" cy="511" rx="3.5" ry="3.5" fill="none" stroke="#a04848" stroke-width="1.4" />
<ellipse cx="859" cy="529" rx="3.5" ry="3.5" fill="none" stroke="#a04848" stroke-width="1.4" />
<path d="M792 545 L778 612" fill="none" stroke="#a04848" stroke-width="0.85" />
<path d="M798 547 L785 612" fill="none" stroke="#a04848" stroke-width="0.85" />
<path d="M804 549 L792 612" fill="none" stroke="#a04848" stroke-width="0.85" />
<path d="M810 551 L799 612" fill="none" stroke="#a04848" stroke-width="0.85" />
<path d="M816 553 L806 612" fill="none" stroke="#a04848" stroke-width="0.85" />
<path d="M822 555 L813 612" fill="none" stroke="#a04848" stroke-width="0.85" />
<path d="M828 557 L820 612" fill="none" stroke="#a04848" stroke-width="0.85" />
<path d="M770 600L835 592M765 610L835 604M790 575L835 568" fill="none" stroke="#a04848" stroke-width="0.85" />
<path d="M822 500 L826 497 L830 510 L826 522 L822 520" fill="none" stroke="#909030" stroke-width="0.85" />
<ellipse cx="826" cy="510" rx="3" ry="6" fill="none" stroke="#70a030" stroke-width="1" />
<path d="M771.2 550.7L764.9 564.8M778.2 559.2L771.7 573.6M800 565.5L793.4 580.1M798.7 536.3L793.6 547.6M805.8 529.5L801.2 539.6M800.2 528.1L791.5 547.3M786.5 538.5L780.4 551.9M804.6 546.5L798.5 559.9M781.4 562.4L775.1 576.5M765.9 565.2L760.8 576.5M805.7 548.4L796.6 568.7M786.5 573.8L779.9 588.6M777.4 560.1L772.9 570.1M778 563.7L769.9 581.7M783.6 572L776.3 588.1M794.2 546.4L789.1 557.7M779.1 537.9L774.4 548.3M774.6 533.9L767.2 550.3M794.5 563.6L784.4 586M776 559.5L765.9 581.9M779.4 570.9L774.3 582.4M802.5 569.4L791.8 593.1M798.6 561.4L791.3 577.5M793.6 569.3L785.4 587.4M789.4 571.4L783.1 585.4M776.7 529.7L766.7 552M789.7 559.6L783.7 573M770.1 550.5L760.1 572.8M777.6 547.8L770.5 563.7M799.2 533.8L789.2 555.9M762.5 560.9L753.2 581.5M782.7 562.9L776.4 576.8M768.2 544.9L762 558.6M793.5 554.5L784.9 573.8M804.9 564.3L795.4 585.4M804.7 571.7L795.5 592M777.3 551.9L768 572.5M796.6 570.3L787.4 590.7M791.4 540L783 558.7M770.2 558.4L764.6 570.9M762.8 572.9L752.8 595.1M775.4 530.1L765.8 551.6M795.9 535.3L786.3 556.7M798.9 555L792.7 568.8M781.4 561.9L772.9 580.8M771.9 565.5L767 576.4M789 536.2L784.5 546.3M770.5 565.4L764.6 578.5M762.6 550.7L755.9 565.6M787.3 555.1L778.3 575M802.3 543.9L793.8 562.8M767.2 539.8L762.1 551.2" fill="none" stroke="#1ca87c" stroke-width="0.85" />
<ellipse cx="790" cy="538" rx="13" ry="5" transform="rotate(-28 790 538)" fill="none" stroke="#1ca87c" stroke-width=".85"/>
<ellipse cx="785.6" cy="546" rx="13" ry="5" transform="rotate(-28 785.6 546)" fill="none" stroke="#1ca87c" stroke-width=".85"/>
<ellipse cx="781.2" cy="554" rx="13" ry="5" transform="rotate(-28 781.2 554)" fill="none" stroke="#1ca87c" stroke-width=".85"/>
<ellipse cx="776.8" cy="562" rx="13" ry="5" transform="rotate(-28 776.8 562)" fill="none" stroke="#1ca87c" stroke-width=".85"/>
<ellipse cx="772.4" cy="570" rx="13" ry="5" transform="rotate(-28 772.4 570)" fill="none" stroke="#1ca87c" stroke-width=".85"/>
<ellipse cx="768" cy="578" rx="13" ry="5" transform="rotate(-28 768 578)" fill="none" stroke="#1ca87c" stroke-width=".85"/>
<path d="M741 561L776 559M741 564.5L776 562.5M741 568L776 566M738 573L782 570M737 578L786 574M737 584L788 579M738 590L786 585M745 598L790 592M750 604L792 598" fill="none" stroke="#1ca87c" stroke-width="1.02" />
<rect x="741" y="559.5" width="35" height="9" fill="none" stroke="#1ca87c" stroke-width="1" />
<path d="M748 560L746 590M756 560L754 592M764 560L762 596M772 560L771 598" fill="none" stroke="#1ca87c" stroke-width="0.85" />
<path d="M787 583.5q-5.4 -4.7 -6.2 5.5M765.4 585.5q6.8 6.3 -2.8 -3.4M779.1 603q5.5 -5.2 3.4 -7.5M745.4 576.8q6.5 -2.5 -6.6 -1.1M769.8 579.9q-1.1 0.7 7.8 0.4M788.1 581.5q4.9 7.7 5.2 8M792.8 597.7q1.6 -4.5 -3.7 -5.1M788.3 591.6q-0.5 -4.7 3.9 2.1M767.7 581.1q5.4 1.4 3.4 8.3M752.7 606.4q-4.3 -0.1 -3.3 -2.3M788.3 583.7q4.8 -3.4 8.2 -1.3M781.3 583.4q-0.4 0.3 -0.6 -4.2M744.4 576.9q-0.7 -2.4 2.7 -5.6M790 597.6q-4.2 -6.9 -8.5 0.8M775.1 599.9q-0.2 8.8 -9.4 -0.2M742 585q-5.2 0.1 -5.6 -4.7M747.2 585.4q-1.2 -3.9 -3.5 -3.6M764.2 596.8q2.2 -5.2 -5.3 2.3M776 572.2q-4.8 -0.1 4.2 -8.3M751.9 601q2.2 -0.8 8.2 2.7M758.6 583.9q-5.5 -0.4 -4.7 4M794.3 600.7q-2.6 5.6 -7.8 2.8M743 600.7q4.2 -6.8 -4.9 -0.4M775.9 603.1q4 7.8 -0.8 4.2M737.2 586.3q-9.3 -7.2 6.2 -3.2M760.6 602.2q4.7 5.5 7.7 -4.1M773.8 580.4q-5.5 -7.9 7.6 -3.7M756.8 580.2q-0.6 -2 -4.9 -4M742.9 593q7.3 -6.9 -0.8 4.5M759.6 601.1q-4.5 4.7 5.2 -4.8M766.9 581.4q-0.7 0.2 -4.1 -4.5M774.7 604.4q2.2 4.7 -4.1 -7.1M759.4 591.3q1.5 -1.5 -3.9 7.6M786.1 583.9q7.5 6.8 -4.3 -3.1M761.4 587.9q-1.4 5.1 -6.7 -4.1M788.7 601.6q8.2 -5.6 -0.3 8.5M742.9 589.8q-3.9 -1.1 -3.9 -3.1M758.3 607.7q-4.8 -2.2 -4.4 0.9M758.1 584.3q-0.9 1.6 -7.2 1.6M765.1 575q-4.7 0.6 4.8 -6.3" fill="none" stroke="#1ca87c" stroke-width="1"/>
<path d="M802.1 584.8L799.4 596M814.9 606.9L813.4 620.9M808.6 584.9L807.4 591.1M795.5 578.2L794 590.6M795.3 587.1L792.5 598.6M831.4 599L828.7 605.3M812 560.1L810.1 572M822.4 553.1L821 559.7M822.8 598.9L821.6 606M794.5 611.3L793.3 621.9M829.2 550.6L826.8 559.3M818.1 572.7L816.8 585.8M811.5 610.7L809.3 624.3M818.8 542.3L817.8 556.2M819.3 596.6L816.6 605.5M821.1 585.9L820 596.2M831.7 579.2L829.1 585.7M807.5 575.4L805.4 588.2M811 579.9L809 591.3M815.2 567.3L813.7 580.2M804.7 590.8L803.1 604.7M798.2 569.1L796.4 582.1M822.4 557.4L820.9 569.4M809 551.3L807.8 563.1M819.1 597.7L817.9 607.5M794.8 580.2L793.3 588M814.4 550.1L811.8 557.5M800.5 593.9L799 602.3M824.8 579.7L822.2 592.6M833.3 544.4L831.5 554M801.5 602.2L799.7 615.6M791.3 570.9L789.1 583.2M810.7 604.6L809.1 613.4M797.1 552L795.1 563.9" fill="none" stroke="#20e0e8" stroke-width="1.19" />
<path d="M820 530 L849.5 513.9 L851 516.5 L821.5 533 Z" fill="none" stroke="#20e0e8" stroke-width="1.1" />
<path d="M838.3 538.5 L857.3 530 L858.5 532.8 L839.5 541.5 Z" fill="none" stroke="#20e0e8" stroke-width="1.1" />
<path d="M828.5 547.6 L840 541" fill="none" stroke="#20e0e8" stroke-width="1.1" />
<path d="M775 518.500L764 522Q757.500 526 757.500 534V553L752 561" fill="none" stroke="#808080" stroke-width="5" />
<path d="M757 556Q752 572 738 590" fill="none" stroke="#808080" stroke-width="3" />
<path d="M771 540 L763 556" fill="none" stroke="#fff" stroke-width="2.2" />
<path d="M758 579 L764 571" fill="none" stroke="#fff" stroke-width="2.2" />
<path d="M766 590 L772 583" fill="none" stroke="#fff" stroke-width="2.2" />
<clipPath id="hs1"><path d="M768 518C768 500 778 491.400 786 491.400C795 492 801 498 803 504.700L812 521.600V532H800L790 521Z"/></clipPath>
<g clip-path="url(#hs1)">
<path d="M786 498.5L815 498.5M786 503L815 503M786 507.5L815 507.5M786 512L815 512M786 516.5L815 516.5M786 521L815 521M786 525.5L815 525.5M786 530L815 530" fill="none" stroke="#000090" stroke-width="3" />
<path d="M766 495L786 495M766 498.5L786 498.5M766 502L786 502" fill="none" stroke="#40ff00" stroke-width="1.1" />
<path d="M766 505.5L790 505.5M766 509L790 509M766 512.5L790 512.5M766 516L790 516" fill="none" stroke="#20e0e0" stroke-width="1.1" />
<path d="M786 496L815 496M786 505L815 505M786 514L815 514" fill="none" stroke="#f0f020" stroke-width="1.02" />
</g>
<path d="M768 517.400C768 500 778 491.400 786 491.400" fill="none" stroke="#40ff00" stroke-width="1.8" />
<path d="M769 510C768 514 768 516 768.500 518" fill="none" stroke="#20e0e0" stroke-width="1.8" />
<path d="M786 491.400C795 492 801 498 803 504.700L812 521.600V532H800" fill="none" stroke="#f0f020" stroke-width="1.6" />
<path d="M786 497H797L803 505" fill="none" stroke="#f0f020" stroke-width="1.02" />
<path d="M786 491L786 524M796 506L796 530" fill="none" stroke="#40e020" stroke-width="1.5" />
<path d="M780 500Q786 512 783 524" fill="none" stroke="#40e020" stroke-width="1.02" />
<rect x="785.5" y="510" width="4.5" height="10" fill="#fff" stroke="none" stroke-width="1" />
<rect x="794" y="526.5" width="5" height="7.5" fill="#fff" stroke="none" stroke-width="1" />
<path d="M774 527L792 529M776 532L796 536" fill="none" stroke="#20e0e8" stroke-width="1.5" />
<path d="M790 534L800 541" fill="none" stroke="#2020ff" stroke-width="2.2" /></svg>
<!--/GFX-->
 <span id="sh1">SH1 (DWG) WORK (OUT-OF-DATE)</span>
 </div>
 <div id="tl"><svg class="abs" style="left:0;top:0" width="19" height="40"><defs><pattern id="ck3" width="2" height="2" patternUnits="userSpaceOnUse"><rect width="2" height="2" fill="#000"/><rect width="1" height="1" fill="#fff"/><rect x="1" y="1" width="1" height="1" fill="#fff"/></pattern></defs><path d="M7 3h6l4 4v6l-4 4h-6l-4-4v-6z" fill="#ff0808"/><path d="M7 23h6l4 4v6l-4 4h-6l-4-4v-6z" fill="url(#ck3)"/></svg></div>
 <div class="abs" style="left:196px;top:143px;width:19px;height:616px;background:#cdcdcd"></div><div id="trough"></div><div id="thumb"><div class="abs" style="left:0;top:12px;width:8px;height:2px;border-top:1px solid #404040;border-bottom:1px solid #fff"></div></div>
 <span id="wl">Work Layer</span><div id="wlin"><svg class="abs" style="left:0;top:0" width="28" height="14"><path d="M4.5 2v10M3 1.500l1.500 1 1.500-1M3 12.500l1.500-1 1.500 1" stroke="#000" fill="none" stroke-dasharray="1 1"/></svg><span class="abs" style="left:5.500px;top:0;font-size:11px;line-height:13px">1</span></div>

 <div id="status"></div>
 <div class="fld" style="left:8px;width:476px"><span class="ft" style="transform:scaleX(.961)">Cue: Choose view display options or view(s) to edit</span></div>
 <div class="fld" style="left:484px;width:475px"><span class="ft" style="transform:scaleX(.965)">Status: Updating View RIGHT@3</span></div>
 <div id="ibtn"><svg class="abs" style="left:0;top:0" width="16" height="16" shape-rendering="crispEdges"><defs><pattern id="ck2" width="2" height="2" patternUnits="userSpaceOnUse"><rect width="1" height="1" fill="#000"/><rect x="1" y="1" width="1" height="1" fill="#000"/></pattern></defs><path d="M7 1h2v2h-2z M5 5h4v7h2v2h-7v-2h2v-5h-1z" fill="url(#ck2)"/><path d="M7 1h1v1h-1zM8 2h1v1h-1z" fill="#000"/></svg></div>
</div>
</body></html>
